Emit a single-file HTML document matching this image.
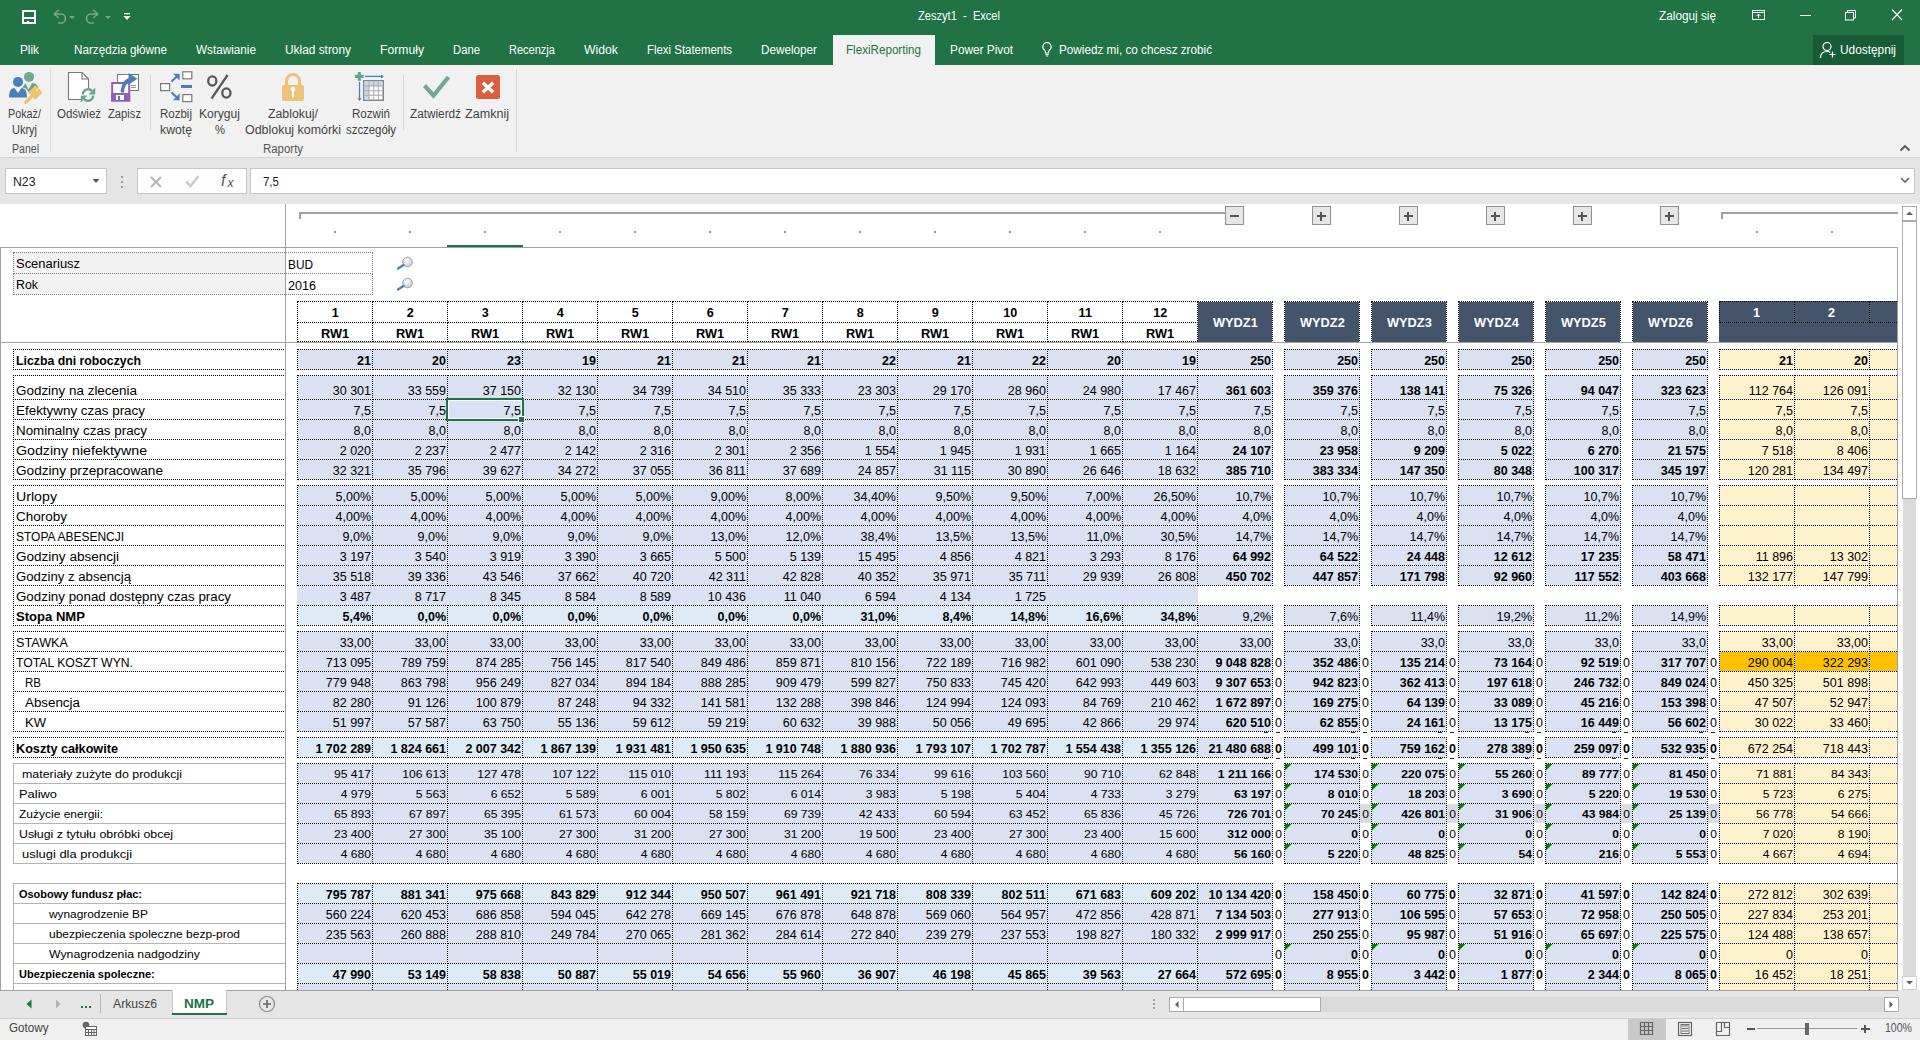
<!DOCTYPE html><html><head><meta charset="utf-8"><style>html,body{margin:0;padding:0;width:1920px;height:1040px;overflow:hidden;background:#fff;position:relative;font-family:"Liberation Sans",sans-serif}div{position:absolute}.t{white-space:pre}#sh{left:0;top:0;width:1898px;height:990px;overflow:hidden}</style></head><body>
<div style="left:0px;top:0px;width:1920px;height:65px;background:#217346"></div>
<svg style="position:absolute;left:21px;top:9px;" width="17" height="17" viewBox="0 0 17 17"><rect x="2" y="2" width="12" height="12" fill="none" stroke="#fff" stroke-width="2"/><rect x="3" y="8" width="10" height="2" fill="#fff"/><rect x="6" y="12" width="2" height="2" fill="#fff"/></svg>
<svg style="position:absolute;left:50px;top:9px;" width="28" height="16" viewBox="0 0 28 16"><path d="M4 5 L9 1 M4 5 L9 9 M4 5 H11 A4.5 4.5 0 0 1 11 14 H8" fill="none" stroke="#74a98a" stroke-width="1.6"/><path d="M19 7h6l-3 3z" fill="#74a98a"/></svg>
<svg style="position:absolute;left:85px;top:9px;" width="28" height="16" viewBox="0 0 28 16"><path d="M13 5 L8 1 M13 5 L8 9 M13 5 H6 A4.5 4.5 0 0 0 6 14 H9" fill="none" stroke="#74a98a" stroke-width="1.6"/><path d="M20 7h6l-3 3z" fill="#74a98a"/></svg>
<svg style="position:absolute;left:122px;top:12px;" width="10" height="10" viewBox="0 0 10 10"><rect x="2" y="1" width="6" height="1.3" fill="#fff"/><path d="M1.5 4h7l-3.5 4z" fill="#fff"/></svg>
<div class="t" style="left:918.00px;top:6px;font-size:12.0px;line-height:20px;font-weight:400;color:#fff;;transform:scaleX(0.9247);transform-origin:0 0">Zeszyt1  -  Excel</div>
<div class="t" style="left:1659.00px;top:6px;font-size:12.0px;line-height:20px;font-weight:400;color:#fff;;transform:scaleX(0.9824);transform-origin:0 0">Zaloguj się</div>
<svg style="position:absolute;left:1751px;top:9px;" width="16" height="12" viewBox="0 0 16 12"><rect x="1.5" y="1.5" width="12" height="9" fill="none" stroke="#fff" stroke-width="1"/><path d="M1.5 3.5h12" stroke="#fff"/><path d="M7.5 9V5M5.5 7l2-2 2 2" fill="none" stroke="#fff"/></svg>
<div style="left:1800px;top:15px;width:11px;height:1px;background:#fff"></div>
<svg style="position:absolute;left:1844px;top:9px;" width="14" height="12" viewBox="0 0 14 12"><rect x="1.5" y="3.5" width="8" height="7.5" fill="none" stroke="#fff"/><path d="M3.5 3.5V1.5h8v7.5h-2" fill="none" stroke="#fff"/></svg>
<svg style="position:absolute;left:1890px;top:9px;" width="14" height="12" viewBox="0 0 14 12"><path d="M2 0.5L12 11M12 0.5L2 11" stroke="#fff" stroke-width="1.1"/></svg>
<div style="left:833px;top:35px;width:102px;height:30px;background:#f1f1f1"></div>
<div class="t" style="left:20.00px;top:40px;font-size:12.0px;line-height:20px;font-weight:400;color:#fff;;transform:scaleX(0.9804);transform-origin:0 0">Plik</div>
<div class="t" style="left:74.00px;top:40px;font-size:12.0px;line-height:20px;font-weight:400;color:#fff;;transform:scaleX(0.9748);transform-origin:0 0">Narzędzia główne</div>
<div class="t" style="left:196.00px;top:40px;font-size:12.0px;line-height:20px;font-weight:400;color:#fff;;transform:scaleX(0.9775);transform-origin:0 0">Wstawianie</div>
<div class="t" style="left:285.00px;top:40px;font-size:12.0px;line-height:20px;font-weight:400;color:#fff;;transform:scaleX(0.9892);transform-origin:0 0">Układ strony</div>
<div class="t" style="left:380.00px;top:40px;font-size:12.0px;line-height:20px;font-weight:400;color:#fff;;transform:scaleX(1.0157);transform-origin:0 0">Formuły</div>
<div class="t" style="left:453.00px;top:40px;font-size:12.0px;line-height:20px;font-weight:400;color:#fff;;transform:scaleX(0.9414);transform-origin:0 0">Dane</div>
<div class="t" style="left:509.00px;top:40px;font-size:12.0px;line-height:20px;font-weight:400;color:#fff;;transform:scaleX(0.9182);transform-origin:0 0">Recenzja</div>
<div class="t" style="left:584.00px;top:40px;font-size:12.0px;line-height:20px;font-weight:400;color:#fff;;transform:scaleX(1.0174);transform-origin:0 0">Widok</div>
<div class="t" style="left:647.00px;top:40px;font-size:12.0px;line-height:20px;font-weight:400;color:#fff;;transform:scaleX(0.9514);transform-origin:0 0">Flexi Statements</div>
<div class="t" style="left:761.00px;top:40px;font-size:12.0px;line-height:20px;font-weight:400;color:#fff;;transform:scaleX(0.9763);transform-origin:0 0">Deweloper</div>
<div class="t" style="left:950.00px;top:40px;font-size:12.0px;line-height:20px;font-weight:400;color:#fff;;transform:scaleX(0.9841);transform-origin:0 0">Power Pivot</div>
<div class="t" style="left:1059.00px;top:40px;font-size:12.0px;line-height:20px;font-weight:400;color:#fff;;transform:scaleX(0.9763);transform-origin:0 0">Powiedz mi, co chcesz zrobić</div>
<div class="t" style="left:846.00px;top:40px;font-size:12.0px;line-height:20px;font-weight:400;color:#217346;;transform:scaleX(0.9690);transform-origin:0 0">FlexiReporting</div>
<svg style="position:absolute;left:1041px;top:41px;" width="12" height="17" viewBox="0 0 12 17"><path d="M6 1.5a4.2 4.2 0 0 0-2.4 7.6c.5.5.8 1.2.8 2V12h3.2v-.9c0-.8.3-1.5.8-2A4.2 4.2 0 0 0 6 1.5z" fill="none" stroke="#fff" stroke-width="1.1"/><path d="M4.4 13.5h3.2M4.8 15h2.4" stroke="#fff" stroke-width="1"/></svg>
<div style="left:1813px;top:35px;width:91px;height:30px;background:#185c37"></div>
<svg style="position:absolute;left:1819px;top:41px;" width="18" height="18" viewBox="0 0 18 18"><circle cx="8" cy="5.5" r="4" fill="none" stroke="#fff" stroke-width="1.2"/><path d="M1.5 17c0-4 2.5-6.5 6.5-6.5 1.5 0 2.5.3 3.4.9" fill="none" stroke="#fff" stroke-width="1.2"/><path d="M13.5 10.5v6M10.5 13.5h6" stroke="#fff" stroke-width="1.2"/></svg>
<div class="t" style="left:1840.00px;top:40px;font-size:12.0px;line-height:20px;font-weight:400;color:#fff;;transform:scaleX(0.9877);transform-origin:0 0">Udostępnij</div>
<div style="left:0px;top:65px;width:1920px;height:92px;background:#f1f1f1"></div>
<div style="left:0px;top:157px;width:1920px;height:1px;background:#d5d5d5"></div>
<div style="left:0px;top:158px;width:1920px;height:46px;background:#e6e6e6"></div>
<div style="left:50px;top:69px;width:1px;height:83px;background:#d8d8d8"></div>
<div style="left:150px;top:75px;width:1px;height:55px;background:#d8d8d8"></div>
<div style="left:403px;top:75px;width:1px;height:55px;background:#d8d8d8"></div>
<div style="left:516px;top:69px;width:1px;height:83px;background:#d8d8d8"></div>
<div class="t" style="left:8.00px;top:104px;font-size:12.0px;line-height:20px;font-weight:400;color:#444;;transform:scaleX(0.8987);transform-origin:0 0">Pokaż/</div>
<div class="t" style="left:12.00px;top:120px;font-size:12.0px;line-height:20px;font-weight:400;color:#444;;transform:scaleX(0.9158);transform-origin:0 0">Ukryj</div>
<div class="t" style="left:57.00px;top:104px;font-size:12.0px;line-height:20px;font-weight:400;color:#444;;transform:scaleX(0.9561);transform-origin:0 0">Odśwież</div>
<div class="t" style="left:108.00px;top:104px;font-size:12.0px;line-height:20px;font-weight:400;color:#444;;transform:scaleX(0.9338);transform-origin:0 0">Zapisz</div>
<div class="t" style="left:160.00px;top:104px;font-size:12.0px;line-height:20px;font-weight:400;color:#444;;transform:scaleX(0.9592);transform-origin:0 0">Rozbij</div>
<div class="t" style="left:160.00px;top:120px;font-size:12.0px;line-height:20px;font-weight:400;color:#444;;transform:scaleX(1.0217);transform-origin:0 0">kwotę</div>
<div class="t" style="left:199.00px;top:104px;font-size:12.0px;line-height:20px;font-weight:400;color:#444;;transform:scaleX(1.0079);transform-origin:0 0">Koryguj</div>
<div class="t" style="left:215.00px;top:120px;font-size:12.0px;line-height:20px;font-weight:400;color:#444;;transform:scaleX(0.9363);transform-origin:0 0">%</div>
<div class="t" style="left:268.00px;top:104px;font-size:12.0px;line-height:20px;font-weight:400;color:#444;;transform:scaleX(1.0263);transform-origin:0 0">Zablokuj/</div>
<div class="t" style="left:245.00px;top:120px;font-size:12.0px;line-height:20px;font-weight:400;color:#444;;transform:scaleX(1.0356);transform-origin:0 0">Odblokuj komórki</div>
<div class="t" style="left:352.00px;top:104px;font-size:12.0px;line-height:20px;font-weight:400;color:#444;;transform:scaleX(0.9654);transform-origin:0 0">Rozwiń</div>
<div class="t" style="left:346.00px;top:120px;font-size:12.0px;line-height:20px;font-weight:400;color:#444;;transform:scaleX(0.9491);transform-origin:0 0">szczegóły</div>
<div class="t" style="left:410.00px;top:104px;font-size:12.0px;line-height:20px;font-weight:400;color:#444;;transform:scaleX(0.9804);transform-origin:0 0">Zatwierdź</div>
<div class="t" style="left:465.00px;top:104px;font-size:12.0px;line-height:20px;font-weight:400;color:#444;;transform:scaleX(1.0476);transform-origin:0 0">Zamknij</div>
<div class="t" style="left:12.00px;top:139px;font-size:12.0px;line-height:20px;font-weight:400;color:#555;;transform:scaleX(0.8789);transform-origin:0 0">Panel</div>
<div class="t" style="left:263.00px;top:139px;font-size:12.0px;line-height:20px;font-weight:400;color:#555;;transform:scaleX(0.9524);transform-origin:0 0">Raporty</div>
<svg style="position:absolute;left:1899px;top:144px;" width="12" height="9" viewBox="0 0 12 9"><path d="M1.5 6.5l4.5-4.5 4.5 4.5" fill="none" stroke="#555" stroke-width="1.8"/></svg>
<svg style="position:absolute;left:8px;top:71px;" width="34" height="34" viewBox="0 0 34 34"><circle cx="10" cy="10.9" r="5" fill="#4a80bb"/><path d="M1.1 26.6C1.1 19.5 3 17.3 6.5 16.9L10 22 13.5 16.9C17 17.3 19 19.5 19 26.6z" fill="#4a80bb"/><circle cx="21" cy="5.9" r="5" fill="#72a893"/><path d="M14.3 16.8L17.5 12 20.5 18.5 24 12C27.5 12 29.5 14 30.5 16.5L23 20 20.5 21 18 17.5z" fill="#6aa58f"/><path d="M27.4 15.3L33.6 21.5 27.4 27.7 21.2 21.5z" fill="#eec56f" stroke="#eec56f" stroke-width="1.5" stroke-linejoin="round"/><path d="M24 25L17.8 31.2" stroke="#eec56f" stroke-width="3.4" stroke-linecap="round"/><rect x="28" y="17.5" width="2" height="2" fill="#f5e0b0"/></svg>
<svg style="position:absolute;left:66px;top:71px;" width="32" height="33" viewBox="0 0 32 33"><path d="M2.5 1.5H16L22.5 8V28.5H2.5z" fill="#fff" stroke="#777" stroke-width="1.1"/><path d="M16 1.5V8H22.5" fill="none" stroke="#777" stroke-width="1.1"/><rect x="15" y="17" width="15" height="15" fill="#f1f1f1"/><rect x="15" y="17" width="7.5" height="11.5" fill="#fff"/><path d="M16.8 23.5A5.3 5.3 0 0 1 26 20" fill="none" stroke="#6aa58f" stroke-width="2.3"/><path d="M29.2 16.5V23.5H22.5z" fill="#6aa58f"/><path d="M27.2 24.5A5.3 5.3 0 0 1 18 28" fill="none" stroke="#6aa58f" stroke-width="2.3"/><path d="M14.8 31.5V24.5H21.5z" fill="#6aa58f"/></svg>
<svg style="position:absolute;left:109px;top:71px;" width="32" height="32" viewBox="0 0 32 32"><rect x="8.5" y="3.5" width="21" height="16" fill="#fff" stroke="#777"/><path d="M22 14.5h5M22 16.5h5" stroke="#999"/><rect x="3.2" y="12" width="17" height="17.5" fill="#fff" stroke="#9060b8" stroke-width="2"/><rect x="2.2" y="22" width="19" height="8.5" fill="#9060b8"/><rect x="7" y="24" width="8" height="5" fill="#fff"/><rect x="9" y="25" width="2" height="4" fill="#9060b8"/><path d="M13.2 21.5C14 13 17 9 22 8.5" fill="none" stroke="#4a7fba" stroke-width="3.4"/><path d="M19.5 2L28.5 7.8 19.5 13.8z" fill="#4a7fba"/></svg>
<svg style="position:absolute;left:159px;top:70px;" width="34" height="34" viewBox="0 0 34 34"><rect x="1.6" y="13.6" width="9" height="7" fill="#fff" stroke="#7a7a7a" stroke-width="1.2"/><rect x="23.8" y="1.8" width="9" height="7" fill="#fff" stroke="#7a7a7a" stroke-width="1.2"/><rect x="23.8" y="24.6" width="9" height="7" fill="#fff" stroke="#7a7a7a" stroke-width="1.2"/><rect x="22" y="15" width="11" height="3" fill="#4a7fba"/><path d="M12.5 11.5l6.5-6M12.5 22.5l6.5 6" stroke="#4a7fba" stroke-width="2.2"/><path d="M14 3.8h6.6v6.6z" fill="#4a7fba"/><path d="M20.6 23.6v6.6H14z" fill="#4a7fba"/></svg>
<svg style="position:absolute;left:204px;top:72px;" width="32" height="30" viewBox="0 0 32 30"><ellipse cx="8.3" cy="8.9" rx="4.1" ry="4.6" fill="none" stroke="#595959" stroke-width="2.3"/><ellipse cx="22.4" cy="21" rx="4.1" ry="4.6" fill="none" stroke="#595959" stroke-width="2.3"/><path d="M23.6 3L7.5 26.7" stroke="#595959" stroke-width="2.3"/></svg>
<svg style="position:absolute;left:281px;top:72px;" width="24" height="30" viewBox="0 0 24 30"><path d="M5.5 13V9a6.5 6.5 0 0 1 13 0v4" fill="none" stroke="#eec278" stroke-width="3"/><rect x="1" y="13" width="22" height="16" rx="2" fill="#eec278"/><circle cx="12" cy="17.4" r="2.3" fill="#fff"/><rect x="11" y="17.5" width="2" height="8" fill="#fff"/></svg>
<svg style="position:absolute;left:354px;top:71px;" width="32" height="32" viewBox="0 0 32 32"><rect x="9.75" y="9.75" width="19.5" height="19.5" fill="#fff" stroke="#858585" stroke-width="1.5"/><rect x="10.5" y="10.5" width="18" height="4.5" fill="#c3d7ee"/><rect x="10.5" y="10.5" width="4.5" height="18" fill="#c3d7ee"/><path d="M15 10.5v18M19.75 10.5v18M24.25 10.5v18M10.5 15h18M10.5 19.75h18M10.5 24.25h18" stroke="#a8a8a8" stroke-width="1"/><path d="M5.3 1v8.8M0.9 5.4h8.8" stroke="#6aa58f" stroke-width="3.2"/><path d="M11 5.4h18" stroke="#4a7fba" stroke-width="1.3"/><path d="M27 3.4l2.8 2-2.8 2z" fill="#4a7fba"/><path d="M5.5 10.8v17.5" stroke="#4a7fba" stroke-width="1.3"/><path d="M3.5 27.3l2 2.6 2-2.6z" fill="#4a7fba"/></svg>
<svg style="position:absolute;left:421px;top:73px;" width="30" height="28" viewBox="0 0 30 28"><path d="M3.5 12.5l9 10L27.5 4" fill="none" stroke="#72a893" stroke-width="4.2" stroke-linejoin="miter"/></svg>
<svg style="position:absolute;left:476px;top:75px;" width="25" height="25" viewBox="0 0 25 25"><rect x="0" y="0" width="24" height="24" rx="2.5" fill="#d9603e"/><path d="M6.8 7.8l10.4 9.4M17.2 7.8L6.8 17.2" stroke="#fff" stroke-width="3.4"/></svg>
<div style="left:5px;top:168px;width:102px;height:26px;background:#fff;border:1px solid #c6c6c6;box-sizing:border-box"></div>
<div class="t" style="left:12.50px;top:172px;font-size:12.0px;line-height:20px;font-weight:400;color:#222;;transform:scaleX(1.0218);transform-origin:0 0">N23</div>
<svg style="position:absolute;left:91px;top:178px;" width="10" height="6" viewBox="0 0 10 6"><path d="M1.5 1h7l-3.5 4z" fill="#555"/></svg>
<div style="left:121px;top:176px;width:2px;height:2px;background:#999"></div>
<div style="left:121px;top:181px;width:2px;height:2px;background:#999"></div>
<div style="left:121px;top:186px;width:2px;height:2px;background:#999"></div>
<div style="left:137px;top:168px;width:110px;height:26px;background:#fdfdfd;border:1px solid #c6c6c6;box-sizing:border-box"></div>
<svg style="position:absolute;left:149px;top:175px;" width="14" height="14" viewBox="0 0 14 14"><path d="M2 2l10 10M12 2L2 12" stroke="#b4b4b4" stroke-width="1.8"/></svg>
<svg style="position:absolute;left:184px;top:174px;" width="16" height="14" viewBox="0 0 16 14"><path d="M2 7.5l4.5 4.5 8-10" fill="none" stroke="#cdcdcd" stroke-width="2.6"/></svg>
<div class="t" style="left:221.00px;top:171px;font-size:16px;line-height:20px;font-weight:400;color:#555;font-style:italic;font-family:"Liberation Serif",serif;transform-origin:0 0">f</div>
<div class="t" style="left:227.50px;top:173px;font-size:12px;line-height:20px;font-weight:400;color:#555;font-style:italic;font-family:"Liberation Serif",serif;transform-origin:0 0">x</div>
<div style="left:250px;top:168px;width:1665px;height:26px;background:#fff;border:1px solid #c6c6c6;box-sizing:border-box"></div>
<div class="t" style="left:263.30px;top:172px;font-size:12.0px;line-height:20px;font-weight:400;color:#222;;transform:scaleX(0.9532);transform-origin:0 0">7,5</div>
<svg style="position:absolute;left:1899px;top:176px;" width="12" height="8" viewBox="0 0 12 8"><path d="M2 2l4 4 4-4" fill="none" stroke="#666" stroke-width="1.6"/></svg>
<div id="sh">
<div style="left:0px;top:204px;width:1898px;height:786px;background:#fff"></div>
<div style="left:1898px;top:204px;width:22px;height:786px;background:#e6e6e6"></div>
<div style="left:299px;top:212px;width:926px;height:2px;background:#a0a0a0"></div>
<div style="left:299px;top:212px;width:2px;height:7px;background:#a0a0a0"></div>
<div style="left:334px;top:231px;width:2px;height:2px;background:#999"></div>
<div style="left:409px;top:231px;width:2px;height:2px;background:#999"></div>
<div style="left:484px;top:231px;width:2px;height:2px;background:#999"></div>
<div style="left:559px;top:231px;width:2px;height:2px;background:#999"></div>
<div style="left:634px;top:231px;width:2px;height:2px;background:#999"></div>
<div style="left:709px;top:231px;width:2px;height:2px;background:#999"></div>
<div style="left:784px;top:231px;width:2px;height:2px;background:#999"></div>
<div style="left:859px;top:231px;width:2px;height:2px;background:#999"></div>
<div style="left:934px;top:231px;width:2px;height:2px;background:#999"></div>
<div style="left:1009px;top:231px;width:2px;height:2px;background:#999"></div>
<div style="left:1084px;top:231px;width:2px;height:2px;background:#999"></div>
<div style="left:1159px;top:231px;width:2px;height:2px;background:#999"></div>
<div style="left:1225px;top:206px;width:19px;height:19px;background:#e6e6e6;border:1px solid #8a8f99;box-sizing:border-box"></div>
<div style="left:1230px;top:215px;width:9px;height:2px;background:#555"></div>
<div style="left:1312px;top:206px;width:19px;height:19px;background:#e6e6e6;border:1px solid #8a8f99;box-sizing:border-box"></div>
<div style="left:1317px;top:215px;width:9px;height:2px;background:#555"></div>
<div style="left:1320px;top:212px;width:2px;height:9px;background:#555"></div>
<div style="left:1399px;top:206px;width:19px;height:19px;background:#e6e6e6;border:1px solid #8a8f99;box-sizing:border-box"></div>
<div style="left:1404px;top:215px;width:9px;height:2px;background:#555"></div>
<div style="left:1407px;top:212px;width:2px;height:9px;background:#555"></div>
<div style="left:1486px;top:206px;width:19px;height:19px;background:#e6e6e6;border:1px solid #8a8f99;box-sizing:border-box"></div>
<div style="left:1491px;top:215px;width:9px;height:2px;background:#555"></div>
<div style="left:1494px;top:212px;width:2px;height:9px;background:#555"></div>
<div style="left:1573px;top:206px;width:19px;height:19px;background:#e6e6e6;border:1px solid #8a8f99;box-sizing:border-box"></div>
<div style="left:1578px;top:215px;width:9px;height:2px;background:#555"></div>
<div style="left:1581px;top:212px;width:2px;height:9px;background:#555"></div>
<div style="left:1660px;top:206px;width:19px;height:19px;background:#e6e6e6;border:1px solid #8a8f99;box-sizing:border-box"></div>
<div style="left:1665px;top:215px;width:9px;height:2px;background:#555"></div>
<div style="left:1668px;top:212px;width:2px;height:9px;background:#555"></div>
<div style="left:1721px;top:212px;width:177px;height:2px;background:#a0a0a0"></div>
<div style="left:1721px;top:212px;width:2px;height:7px;background:#a0a0a0"></div>
<div style="left:1756px;top:231px;width:2px;height:2px;background:#999"></div>
<div style="left:1831px;top:231px;width:2px;height:2px;background:#999"></div>
<div style="left:13px;top:252px;width:272px;height:42px;background:#f2f2f2"></div>
<div style="left:13px;top:252px;width:360px;height:22px;box-sizing:border-box;border-top:1px dotted #7f7f7f;border-bottom:1px dotted #7f7f7f;border-left:1px dotted #7f7f7f;border-right:1px dotted #7f7f7f;"></div>
<div style="left:13px;top:273px;width:360px;height:22px;box-sizing:border-box;border-bottom:1px dotted #7f7f7f;border-left:1px dotted #7f7f7f;border-right:1px dotted #7f7f7f;"></div>
<div class="t" style="left:16.00px;top:254px;font-size:12.0px;line-height:20px;font-weight:400;color:#000;;transform:scaleX(1.0785);transform-origin:0 0">Scenariusz</div>
<div class="t" style="left:16.00px;top:275px;font-size:12.0px;line-height:20px;font-weight:400;color:#000;;transform:scaleX(1.0271);transform-origin:0 0">Rok</div>
<div class="t" style="left:288.00px;top:255px;font-size:12.0px;line-height:20px;font-weight:400;color:#000;;transform:scaleX(0.9874);transform-origin:0 0">BUD</div>
<div class="t" style="left:288.00px;top:276px;font-size:12.0px;line-height:20px;font-weight:400;color:#000;;transform:scaleX(1.0487);transform-origin:0 0">2016</div>
<svg style="position:absolute;left:396px;top:256px;" width="18" height="14" viewBox="0 0 18 14"><defs><radialGradient id="mg256" cx="0.4" cy="0.35" r="0.7"><stop offset="0" stop-color="#fff"/><stop offset="1" stop-color="#c4c9d0"/></radialGradient></defs><circle cx="11.5" cy="6" r="4.8" fill="url(#mg256)" stroke="#9ba2ab" stroke-width="1"/><path d="M2 12.5l5.5-3.5" stroke="#3f86c6" stroke-width="2.4" stroke-linecap="round"/></svg>
<svg style="position:absolute;left:396px;top:277px;" width="18" height="14" viewBox="0 0 18 14"><defs><radialGradient id="mg277" cx="0.4" cy="0.35" r="0.7"><stop offset="0" stop-color="#fff"/><stop offset="1" stop-color="#c4c9d0"/></radialGradient></defs><circle cx="11.5" cy="6" r="4.8" fill="url(#mg277)" stroke="#9ba2ab" stroke-width="1"/><path d="M2 12.5l5.5-3.5" stroke="#3f86c6" stroke-width="2.4" stroke-linecap="round"/></svg>
<div style="left:297px;top:301px;width:76px;height:22px;box-sizing:border-box;border-top:1px dotted #000;border-bottom:1px dotted #000;border-left:1px dotted #000;border-right:1px dotted #000;"></div>
<div style="left:297px;top:322px;width:76px;height:20px;box-sizing:border-box;border-bottom:1px dotted #000;border-left:1px dotted #000;border-right:1px dotted #000;"></div>
<div class="t" style="left:300.25px;width:70px;text-align:center;top:303px;font-size:12.6px;line-height:20px;font-weight:700;color:#000;;transform-origin:50% 0">1</div>
<div class="t" style="left:321.15px;top:324px;font-size:12.6px;line-height:20px;font-weight:700;color:#000;;transform:scaleX(1.0150);transform-origin:0 0">RW1</div>
<div style="left:372px;top:301px;width:76px;height:22px;box-sizing:border-box;border-top:1px dotted #000;border-bottom:1px dotted #000;border-left:1px dotted #000;border-right:1px dotted #000;"></div>
<div style="left:372px;top:322px;width:76px;height:20px;box-sizing:border-box;border-bottom:1px dotted #000;border-left:1px dotted #000;border-right:1px dotted #000;"></div>
<div class="t" style="left:375.25px;width:70px;text-align:center;top:303px;font-size:12.6px;line-height:20px;font-weight:700;color:#000;;transform-origin:50% 0">2</div>
<div class="t" style="left:396.15px;top:324px;font-size:12.6px;line-height:20px;font-weight:700;color:#000;;transform:scaleX(1.0150);transform-origin:0 0">RW1</div>
<div style="left:447px;top:301px;width:76px;height:22px;box-sizing:border-box;border-top:1px dotted #000;border-bottom:1px dotted #000;border-left:1px dotted #000;border-right:1px dotted #000;"></div>
<div style="left:447px;top:322px;width:76px;height:20px;box-sizing:border-box;border-bottom:1px dotted #000;border-left:1px dotted #000;border-right:1px dotted #000;"></div>
<div class="t" style="left:450.25px;width:70px;text-align:center;top:303px;font-size:12.6px;line-height:20px;font-weight:700;color:#000;;transform-origin:50% 0">3</div>
<div class="t" style="left:471.15px;top:324px;font-size:12.6px;line-height:20px;font-weight:700;color:#000;;transform:scaleX(1.0150);transform-origin:0 0">RW1</div>
<div style="left:522px;top:301px;width:76px;height:22px;box-sizing:border-box;border-top:1px dotted #000;border-bottom:1px dotted #000;border-left:1px dotted #000;border-right:1px dotted #000;"></div>
<div style="left:522px;top:322px;width:76px;height:20px;box-sizing:border-box;border-bottom:1px dotted #000;border-left:1px dotted #000;border-right:1px dotted #000;"></div>
<div class="t" style="left:525.25px;width:70px;text-align:center;top:303px;font-size:12.6px;line-height:20px;font-weight:700;color:#000;;transform-origin:50% 0">4</div>
<div class="t" style="left:546.15px;top:324px;font-size:12.6px;line-height:20px;font-weight:700;color:#000;;transform:scaleX(1.0150);transform-origin:0 0">RW1</div>
<div style="left:597px;top:301px;width:76px;height:22px;box-sizing:border-box;border-top:1px dotted #000;border-bottom:1px dotted #000;border-left:1px dotted #000;border-right:1px dotted #000;"></div>
<div style="left:597px;top:322px;width:76px;height:20px;box-sizing:border-box;border-bottom:1px dotted #000;border-left:1px dotted #000;border-right:1px dotted #000;"></div>
<div class="t" style="left:600.25px;width:70px;text-align:center;top:303px;font-size:12.6px;line-height:20px;font-weight:700;color:#000;;transform-origin:50% 0">5</div>
<div class="t" style="left:621.15px;top:324px;font-size:12.6px;line-height:20px;font-weight:700;color:#000;;transform:scaleX(1.0150);transform-origin:0 0">RW1</div>
<div style="left:672px;top:301px;width:76px;height:22px;box-sizing:border-box;border-top:1px dotted #000;border-bottom:1px dotted #000;border-left:1px dotted #000;border-right:1px dotted #000;"></div>
<div style="left:672px;top:322px;width:76px;height:20px;box-sizing:border-box;border-bottom:1px dotted #000;border-left:1px dotted #000;border-right:1px dotted #000;"></div>
<div class="t" style="left:675.25px;width:70px;text-align:center;top:303px;font-size:12.6px;line-height:20px;font-weight:700;color:#000;;transform-origin:50% 0">6</div>
<div class="t" style="left:696.15px;top:324px;font-size:12.6px;line-height:20px;font-weight:700;color:#000;;transform:scaleX(1.0150);transform-origin:0 0">RW1</div>
<div style="left:747px;top:301px;width:76px;height:22px;box-sizing:border-box;border-top:1px dotted #000;border-bottom:1px dotted #000;border-left:1px dotted #000;border-right:1px dotted #000;"></div>
<div style="left:747px;top:322px;width:76px;height:20px;box-sizing:border-box;border-bottom:1px dotted #000;border-left:1px dotted #000;border-right:1px dotted #000;"></div>
<div class="t" style="left:750.25px;width:70px;text-align:center;top:303px;font-size:12.6px;line-height:20px;font-weight:700;color:#000;;transform-origin:50% 0">7</div>
<div class="t" style="left:771.15px;top:324px;font-size:12.6px;line-height:20px;font-weight:700;color:#000;;transform:scaleX(1.0150);transform-origin:0 0">RW1</div>
<div style="left:822px;top:301px;width:76px;height:22px;box-sizing:border-box;border-top:1px dotted #000;border-bottom:1px dotted #000;border-left:1px dotted #000;border-right:1px dotted #000;"></div>
<div style="left:822px;top:322px;width:76px;height:20px;box-sizing:border-box;border-bottom:1px dotted #000;border-left:1px dotted #000;border-right:1px dotted #000;"></div>
<div class="t" style="left:825.25px;width:70px;text-align:center;top:303px;font-size:12.6px;line-height:20px;font-weight:700;color:#000;;transform-origin:50% 0">8</div>
<div class="t" style="left:846.15px;top:324px;font-size:12.6px;line-height:20px;font-weight:700;color:#000;;transform:scaleX(1.0150);transform-origin:0 0">RW1</div>
<div style="left:897px;top:301px;width:76px;height:22px;box-sizing:border-box;border-top:1px dotted #000;border-bottom:1px dotted #000;border-left:1px dotted #000;border-right:1px dotted #000;"></div>
<div style="left:897px;top:322px;width:76px;height:20px;box-sizing:border-box;border-bottom:1px dotted #000;border-left:1px dotted #000;border-right:1px dotted #000;"></div>
<div class="t" style="left:900.25px;width:70px;text-align:center;top:303px;font-size:12.6px;line-height:20px;font-weight:700;color:#000;;transform-origin:50% 0">9</div>
<div class="t" style="left:921.15px;top:324px;font-size:12.6px;line-height:20px;font-weight:700;color:#000;;transform:scaleX(1.0150);transform-origin:0 0">RW1</div>
<div style="left:972px;top:301px;width:76px;height:22px;box-sizing:border-box;border-top:1px dotted #000;border-bottom:1px dotted #000;border-left:1px dotted #000;border-right:1px dotted #000;"></div>
<div style="left:972px;top:322px;width:76px;height:20px;box-sizing:border-box;border-bottom:1px dotted #000;border-left:1px dotted #000;border-right:1px dotted #000;"></div>
<div class="t" style="left:975.25px;width:70px;text-align:center;top:303px;font-size:12.6px;line-height:20px;font-weight:700;color:#000;;transform-origin:50% 0">10</div>
<div class="t" style="left:996.15px;top:324px;font-size:12.6px;line-height:20px;font-weight:700;color:#000;;transform:scaleX(1.0150);transform-origin:0 0">RW1</div>
<div style="left:1047px;top:301px;width:76px;height:22px;box-sizing:border-box;border-top:1px dotted #000;border-bottom:1px dotted #000;border-left:1px dotted #000;border-right:1px dotted #000;"></div>
<div style="left:1047px;top:322px;width:76px;height:20px;box-sizing:border-box;border-bottom:1px dotted #000;border-left:1px dotted #000;border-right:1px dotted #000;"></div>
<div class="t" style="left:1050.25px;width:70px;text-align:center;top:303px;font-size:12.6px;line-height:20px;font-weight:700;color:#000;;transform-origin:50% 0">11</div>
<div class="t" style="left:1071.15px;top:324px;font-size:12.6px;line-height:20px;font-weight:700;color:#000;;transform:scaleX(1.0150);transform-origin:0 0">RW1</div>
<div style="left:1122px;top:301px;width:76px;height:22px;box-sizing:border-box;border-top:1px dotted #000;border-bottom:1px dotted #000;border-left:1px dotted #000;"></div>
<div style="left:1122px;top:322px;width:76px;height:20px;box-sizing:border-box;border-bottom:1px dotted #000;border-left:1px dotted #000;"></div>
<div class="t" style="left:1125.25px;width:70px;text-align:center;top:303px;font-size:12.6px;line-height:20px;font-weight:700;color:#000;;transform-origin:50% 0">12</div>
<div class="t" style="left:1146.15px;top:324px;font-size:12.6px;line-height:20px;font-weight:700;color:#000;;transform:scaleX(1.0150);transform-origin:0 0">RW1</div>
<div style="left:1197px;top:301px;width:76px;height:42px;box-sizing:border-box;background:#44546A;background-clip:padding-box;border-top:1px dotted #000;border-bottom:1px dotted #000;border-left:1px dotted #000;border-right:1px dotted #000;"></div>
<div class="t" style="left:1213.00px;top:313px;font-size:12.5px;line-height:20px;font-weight:700;color:#fff;;transform:scaleX(1.0240);transform-origin:0 0">WYDZ1</div>
<div style="left:1284px;top:301px;width:76px;height:42px;box-sizing:border-box;background:#44546A;background-clip:padding-box;border-top:1px dotted #000;border-bottom:1px dotted #000;border-left:1px dotted #000;border-right:1px dotted #000;"></div>
<div class="t" style="left:1300.00px;top:313px;font-size:12.5px;line-height:20px;font-weight:700;color:#fff;;transform:scaleX(1.0240);transform-origin:0 0">WYDZ2</div>
<div style="left:1371px;top:301px;width:76px;height:42px;box-sizing:border-box;background:#44546A;background-clip:padding-box;border-top:1px dotted #000;border-bottom:1px dotted #000;border-left:1px dotted #000;border-right:1px dotted #000;"></div>
<div class="t" style="left:1387.00px;top:313px;font-size:12.5px;line-height:20px;font-weight:700;color:#fff;;transform:scaleX(1.0240);transform-origin:0 0">WYDZ3</div>
<div style="left:1458px;top:301px;width:76px;height:42px;box-sizing:border-box;background:#44546A;background-clip:padding-box;border-top:1px dotted #000;border-bottom:1px dotted #000;border-left:1px dotted #000;border-right:1px dotted #000;"></div>
<div class="t" style="left:1474.00px;top:313px;font-size:12.5px;line-height:20px;font-weight:700;color:#fff;;transform:scaleX(1.0240);transform-origin:0 0">WYDZ4</div>
<div style="left:1545px;top:301px;width:76px;height:42px;box-sizing:border-box;background:#44546A;background-clip:padding-box;border-top:1px dotted #000;border-bottom:1px dotted #000;border-left:1px dotted #000;border-right:1px dotted #000;"></div>
<div class="t" style="left:1561.00px;top:313px;font-size:12.5px;line-height:20px;font-weight:700;color:#fff;;transform:scaleX(1.0240);transform-origin:0 0">WYDZ5</div>
<div style="left:1632px;top:301px;width:76px;height:42px;box-sizing:border-box;background:#44546A;background-clip:padding-box;border-top:1px dotted #000;border-bottom:1px dotted #000;border-left:1px dotted #000;border-right:1px dotted #000;"></div>
<div class="t" style="left:1648.00px;top:313px;font-size:12.5px;line-height:20px;font-weight:700;color:#fff;;transform:scaleX(1.0240);transform-origin:0 0">WYDZ6</div>
<div style="left:1719px;top:301px;width:179px;height:41px;background:#44546A"></div>
<div style="left:1719px;top:301px;width:76px;height:22px;box-sizing:border-box;border-top:1px dotted #000;border-bottom:1px dotted #000;border-left:1px dotted #000;border-right:1px dotted #000;"></div>
<div style="left:1794px;top:301px;width:76px;height:22px;box-sizing:border-box;border-top:1px dotted #000;border-bottom:1px dotted #000;border-left:1px dotted #000;border-right:1px dotted #000;"></div>
<div style="left:1869px;top:301px;width:76px;height:22px;box-sizing:border-box;border-top:1px dotted #000;border-bottom:1px dotted #000;border-left:1px dotted #000;border-right:1px dotted #000;"></div>
<div class="t" style="left:1721.50px;width:70px;text-align:center;top:303px;font-size:12.6px;line-height:20px;font-weight:700;color:#fff;;transform-origin:50% 0">1</div>
<div class="t" style="left:1796.50px;width:70px;text-align:center;top:303px;font-size:12.6px;line-height:20px;font-weight:700;color:#fff;;transform-origin:50% 0">2</div>
<div style="left:13px;top:349px;width:273px;height:21px;box-sizing:border-box;border-top:1px dotted #000;border-bottom:1px dotted #000;border-left:1px dotted #000;border-right:1px dotted #000;"></div>
<div class="t" style="left:16.00px;top:351px;font-size:12.5px;line-height:20px;font-weight:700;color:#000;;transform:scaleX(0.9833);transform-origin:0 0">Liczba dni roboczych</div>
<div style="left:297px;top:349px;width:76px;height:21px;box-sizing:border-box;background:#D9E1F2;background-clip:padding-box;border-top:1px dotted #000;border-bottom:1px dotted #000;border-left:1px dotted #000;border-right:1px dotted #000;"></div>
<div class="t" style="left:251.00px;width:120px;text-align:right;top:351px;font-size:12.5px;line-height:20px;font-weight:700;color:#000;;transform-origin:100% 0">21</div>
<div style="left:372px;top:349px;width:76px;height:21px;box-sizing:border-box;background:#D9E1F2;background-clip:padding-box;border-top:1px dotted #000;border-bottom:1px dotted #000;border-left:1px dotted #000;border-right:1px dotted #000;"></div>
<div class="t" style="left:326.00px;width:120px;text-align:right;top:351px;font-size:12.5px;line-height:20px;font-weight:700;color:#000;;transform-origin:100% 0">20</div>
<div style="left:447px;top:349px;width:76px;height:21px;box-sizing:border-box;background:#D9E1F2;background-clip:padding-box;border-top:1px dotted #000;border-bottom:1px dotted #000;border-left:1px dotted #000;border-right:1px dotted #000;"></div>
<div class="t" style="left:401.00px;width:120px;text-align:right;top:351px;font-size:12.5px;line-height:20px;font-weight:700;color:#000;;transform-origin:100% 0">23</div>
<div style="left:522px;top:349px;width:76px;height:21px;box-sizing:border-box;background:#D9E1F2;background-clip:padding-box;border-top:1px dotted #000;border-bottom:1px dotted #000;border-left:1px dotted #000;border-right:1px dotted #000;"></div>
<div class="t" style="left:476.00px;width:120px;text-align:right;top:351px;font-size:12.5px;line-height:20px;font-weight:700;color:#000;;transform-origin:100% 0">19</div>
<div style="left:597px;top:349px;width:76px;height:21px;box-sizing:border-box;background:#D9E1F2;background-clip:padding-box;border-top:1px dotted #000;border-bottom:1px dotted #000;border-left:1px dotted #000;border-right:1px dotted #000;"></div>
<div class="t" style="left:551.00px;width:120px;text-align:right;top:351px;font-size:12.5px;line-height:20px;font-weight:700;color:#000;;transform-origin:100% 0">21</div>
<div style="left:672px;top:349px;width:76px;height:21px;box-sizing:border-box;background:#D9E1F2;background-clip:padding-box;border-top:1px dotted #000;border-bottom:1px dotted #000;border-left:1px dotted #000;border-right:1px dotted #000;"></div>
<div class="t" style="left:626.00px;width:120px;text-align:right;top:351px;font-size:12.5px;line-height:20px;font-weight:700;color:#000;;transform-origin:100% 0">21</div>
<div style="left:747px;top:349px;width:76px;height:21px;box-sizing:border-box;background:#D9E1F2;background-clip:padding-box;border-top:1px dotted #000;border-bottom:1px dotted #000;border-left:1px dotted #000;border-right:1px dotted #000;"></div>
<div class="t" style="left:701.00px;width:120px;text-align:right;top:351px;font-size:12.5px;line-height:20px;font-weight:700;color:#000;;transform-origin:100% 0">21</div>
<div style="left:822px;top:349px;width:76px;height:21px;box-sizing:border-box;background:#D9E1F2;background-clip:padding-box;border-top:1px dotted #000;border-bottom:1px dotted #000;border-left:1px dotted #000;border-right:1px dotted #000;"></div>
<div class="t" style="left:776.00px;width:120px;text-align:right;top:351px;font-size:12.5px;line-height:20px;font-weight:700;color:#000;;transform-origin:100% 0">22</div>
<div style="left:897px;top:349px;width:76px;height:21px;box-sizing:border-box;background:#D9E1F2;background-clip:padding-box;border-top:1px dotted #000;border-bottom:1px dotted #000;border-left:1px dotted #000;border-right:1px dotted #000;"></div>
<div class="t" style="left:851.00px;width:120px;text-align:right;top:351px;font-size:12.5px;line-height:20px;font-weight:700;color:#000;;transform-origin:100% 0">21</div>
<div style="left:972px;top:349px;width:76px;height:21px;box-sizing:border-box;background:#D9E1F2;background-clip:padding-box;border-top:1px dotted #000;border-bottom:1px dotted #000;border-left:1px dotted #000;border-right:1px dotted #000;"></div>
<div class="t" style="left:926.00px;width:120px;text-align:right;top:351px;font-size:12.5px;line-height:20px;font-weight:700;color:#000;;transform-origin:100% 0">22</div>
<div style="left:1047px;top:349px;width:76px;height:21px;box-sizing:border-box;background:#D9E1F2;background-clip:padding-box;border-top:1px dotted #000;border-bottom:1px dotted #000;border-left:1px dotted #000;border-right:1px dotted #000;"></div>
<div class="t" style="left:1001.00px;width:120px;text-align:right;top:351px;font-size:12.5px;line-height:20px;font-weight:700;color:#000;;transform-origin:100% 0">20</div>
<div style="left:1122px;top:349px;width:76px;height:21px;box-sizing:border-box;background:#D9E1F2;background-clip:padding-box;border-top:1px dotted #000;border-bottom:1px dotted #000;border-left:1px dotted #000;border-right:1px dotted #000;"></div>
<div class="t" style="left:1076.00px;width:120px;text-align:right;top:351px;font-size:12.5px;line-height:20px;font-weight:700;color:#000;;transform-origin:100% 0">19</div>
<div style="left:1197px;top:349px;width:76px;height:21px;box-sizing:border-box;background:#D9E1F2;background-clip:padding-box;border-top:1px dotted #000;border-bottom:1px dotted #000;border-left:1px dotted #000;border-right:1px dotted #000;"></div>
<div class="t" style="left:1151.00px;width:120px;text-align:right;top:351px;font-size:12.5px;line-height:20px;font-weight:700;color:#000;;transform-origin:100% 0">250</div>
<div style="left:1284px;top:349px;width:76px;height:21px;box-sizing:border-box;background:#D9E1F2;background-clip:padding-box;border-top:1px dotted #000;border-bottom:1px dotted #000;border-left:1px dotted #000;border-right:1px dotted #000;"></div>
<div class="t" style="left:1238.00px;width:120px;text-align:right;top:351px;font-size:12.5px;line-height:20px;font-weight:700;color:#000;;transform-origin:100% 0">250</div>
<div style="left:1371px;top:349px;width:76px;height:21px;box-sizing:border-box;background:#D9E1F2;background-clip:padding-box;border-top:1px dotted #000;border-bottom:1px dotted #000;border-left:1px dotted #000;border-right:1px dotted #000;"></div>
<div class="t" style="left:1325.00px;width:120px;text-align:right;top:351px;font-size:12.5px;line-height:20px;font-weight:700;color:#000;;transform-origin:100% 0">250</div>
<div style="left:1458px;top:349px;width:76px;height:21px;box-sizing:border-box;background:#D9E1F2;background-clip:padding-box;border-top:1px dotted #000;border-bottom:1px dotted #000;border-left:1px dotted #000;border-right:1px dotted #000;"></div>
<div class="t" style="left:1412.00px;width:120px;text-align:right;top:351px;font-size:12.5px;line-height:20px;font-weight:700;color:#000;;transform-origin:100% 0">250</div>
<div style="left:1545px;top:349px;width:76px;height:21px;box-sizing:border-box;background:#D9E1F2;background-clip:padding-box;border-top:1px dotted #000;border-bottom:1px dotted #000;border-left:1px dotted #000;border-right:1px dotted #000;"></div>
<div class="t" style="left:1499.00px;width:120px;text-align:right;top:351px;font-size:12.5px;line-height:20px;font-weight:700;color:#000;;transform-origin:100% 0">250</div>
<div style="left:1632px;top:349px;width:76px;height:21px;box-sizing:border-box;background:#D9E1F2;background-clip:padding-box;border-top:1px dotted #000;border-bottom:1px dotted #000;border-left:1px dotted #000;border-right:1px dotted #000;"></div>
<div class="t" style="left:1586.00px;width:120px;text-align:right;top:351px;font-size:12.5px;line-height:20px;font-weight:700;color:#000;;transform-origin:100% 0">250</div>
<div style="left:1719px;top:349px;width:76px;height:21px;box-sizing:border-box;background:#FFF2CC;background-clip:padding-box;border-top:1px dotted #000;border-bottom:1px dotted #000;border-left:1px dotted #000;border-right:1px dotted #000;"></div>
<div class="t" style="left:1673.00px;width:120px;text-align:right;top:351px;font-size:12.5px;line-height:20px;font-weight:700;color:#000;;transform-origin:100% 0">21</div>
<div style="left:1794px;top:349px;width:76px;height:21px;box-sizing:border-box;background:#FFF2CC;background-clip:padding-box;border-top:1px dotted #000;border-bottom:1px dotted #000;border-left:1px dotted #000;border-right:1px dotted #000;"></div>
<div class="t" style="left:1748.00px;width:120px;text-align:right;top:351px;font-size:12.5px;line-height:20px;font-weight:700;color:#000;;transform-origin:100% 0">20</div>
<div style="left:1869px;top:349px;width:76px;height:21px;box-sizing:border-box;background:#FFF2CC;background-clip:padding-box;border-top:1px dotted #000;border-bottom:1px dotted #000;border-left:1px dotted #000;border-right:1px dotted #000;"></div>
<div style="left:13px;top:375px;width:273px;height:25px;box-sizing:border-box;border-top:1px dotted #000;border-bottom:1px dotted #000;border-left:1px dotted #000;border-right:1px dotted #000;"></div>
<div class="t" style="left:16.00px;top:381px;font-size:12.5px;line-height:20px;font-weight:400;color:#000;;transform:scaleX(1.0744);transform-origin:0 0">Godziny na zlecenia</div>
<div style="left:297px;top:375px;width:76px;height:25px;box-sizing:border-box;background:#D9E1F2;background-clip:padding-box;border-top:1px dotted #000;border-bottom:1px dotted #000;border-left:1px dotted #000;border-right:1px dotted #000;"></div>
<div class="t" style="left:251.00px;width:120px;text-align:right;top:381px;font-size:12.5px;line-height:20px;font-weight:400;color:#000;;transform-origin:100% 0">30 301</div>
<div style="left:372px;top:375px;width:76px;height:25px;box-sizing:border-box;background:#D9E1F2;background-clip:padding-box;border-top:1px dotted #000;border-bottom:1px dotted #000;border-left:1px dotted #000;border-right:1px dotted #000;"></div>
<div class="t" style="left:326.00px;width:120px;text-align:right;top:381px;font-size:12.5px;line-height:20px;font-weight:400;color:#000;;transform-origin:100% 0">33 559</div>
<div style="left:447px;top:375px;width:76px;height:25px;box-sizing:border-box;background:#D9E1F2;background-clip:padding-box;border-top:1px dotted #000;border-bottom:1px dotted #000;border-left:1px dotted #000;border-right:1px dotted #000;"></div>
<div class="t" style="left:401.00px;width:120px;text-align:right;top:381px;font-size:12.5px;line-height:20px;font-weight:400;color:#000;;transform-origin:100% 0">37 150</div>
<div style="left:522px;top:375px;width:76px;height:25px;box-sizing:border-box;background:#D9E1F2;background-clip:padding-box;border-top:1px dotted #000;border-bottom:1px dotted #000;border-left:1px dotted #000;border-right:1px dotted #000;"></div>
<div class="t" style="left:476.00px;width:120px;text-align:right;top:381px;font-size:12.5px;line-height:20px;font-weight:400;color:#000;;transform-origin:100% 0">32 130</div>
<div style="left:597px;top:375px;width:76px;height:25px;box-sizing:border-box;background:#D9E1F2;background-clip:padding-box;border-top:1px dotted #000;border-bottom:1px dotted #000;border-left:1px dotted #000;border-right:1px dotted #000;"></div>
<div class="t" style="left:551.00px;width:120px;text-align:right;top:381px;font-size:12.5px;line-height:20px;font-weight:400;color:#000;;transform-origin:100% 0">34 739</div>
<div style="left:672px;top:375px;width:76px;height:25px;box-sizing:border-box;background:#D9E1F2;background-clip:padding-box;border-top:1px dotted #000;border-bottom:1px dotted #000;border-left:1px dotted #000;border-right:1px dotted #000;"></div>
<div class="t" style="left:626.00px;width:120px;text-align:right;top:381px;font-size:12.5px;line-height:20px;font-weight:400;color:#000;;transform-origin:100% 0">34 510</div>
<div style="left:747px;top:375px;width:76px;height:25px;box-sizing:border-box;background:#D9E1F2;background-clip:padding-box;border-top:1px dotted #000;border-bottom:1px dotted #000;border-left:1px dotted #000;border-right:1px dotted #000;"></div>
<div class="t" style="left:701.00px;width:120px;text-align:right;top:381px;font-size:12.5px;line-height:20px;font-weight:400;color:#000;;transform-origin:100% 0">35 333</div>
<div style="left:822px;top:375px;width:76px;height:25px;box-sizing:border-box;background:#D9E1F2;background-clip:padding-box;border-top:1px dotted #000;border-bottom:1px dotted #000;border-left:1px dotted #000;border-right:1px dotted #000;"></div>
<div class="t" style="left:776.00px;width:120px;text-align:right;top:381px;font-size:12.5px;line-height:20px;font-weight:400;color:#000;;transform-origin:100% 0">23 303</div>
<div style="left:897px;top:375px;width:76px;height:25px;box-sizing:border-box;background:#D9E1F2;background-clip:padding-box;border-top:1px dotted #000;border-bottom:1px dotted #000;border-left:1px dotted #000;border-right:1px dotted #000;"></div>
<div class="t" style="left:851.00px;width:120px;text-align:right;top:381px;font-size:12.5px;line-height:20px;font-weight:400;color:#000;;transform-origin:100% 0">29 170</div>
<div style="left:972px;top:375px;width:76px;height:25px;box-sizing:border-box;background:#D9E1F2;background-clip:padding-box;border-top:1px dotted #000;border-bottom:1px dotted #000;border-left:1px dotted #000;border-right:1px dotted #000;"></div>
<div class="t" style="left:926.00px;width:120px;text-align:right;top:381px;font-size:12.5px;line-height:20px;font-weight:400;color:#000;;transform-origin:100% 0">28 960</div>
<div style="left:1047px;top:375px;width:76px;height:25px;box-sizing:border-box;background:#D9E1F2;background-clip:padding-box;border-top:1px dotted #000;border-bottom:1px dotted #000;border-left:1px dotted #000;border-right:1px dotted #000;"></div>
<div class="t" style="left:1001.00px;width:120px;text-align:right;top:381px;font-size:12.5px;line-height:20px;font-weight:400;color:#000;;transform-origin:100% 0">24 980</div>
<div style="left:1122px;top:375px;width:76px;height:25px;box-sizing:border-box;background:#D9E1F2;background-clip:padding-box;border-top:1px dotted #000;border-bottom:1px dotted #000;border-left:1px dotted #000;border-right:1px dotted #000;"></div>
<div class="t" style="left:1076.00px;width:120px;text-align:right;top:381px;font-size:12.5px;line-height:20px;font-weight:400;color:#000;;transform-origin:100% 0">17 467</div>
<div style="left:1197px;top:375px;width:76px;height:25px;box-sizing:border-box;background:#D9E1F2;background-clip:padding-box;border-top:1px dotted #000;border-bottom:1px dotted #000;border-left:1px dotted #000;border-right:1px dotted #000;"></div>
<div class="t" style="left:1151.00px;width:120px;text-align:right;top:381px;font-size:12.5px;line-height:20px;font-weight:700;color:#000;;transform-origin:100% 0">361 603</div>
<div style="left:1284px;top:375px;width:76px;height:25px;box-sizing:border-box;background:#D9E1F2;background-clip:padding-box;border-top:1px dotted #000;border-bottom:1px dotted #000;border-left:1px dotted #000;border-right:1px dotted #000;"></div>
<div class="t" style="left:1238.00px;width:120px;text-align:right;top:381px;font-size:12.5px;line-height:20px;font-weight:700;color:#000;;transform-origin:100% 0">359 376</div>
<div style="left:1371px;top:375px;width:76px;height:25px;box-sizing:border-box;background:#D9E1F2;background-clip:padding-box;border-top:1px dotted #000;border-bottom:1px dotted #000;border-left:1px dotted #000;border-right:1px dotted #000;"></div>
<div class="t" style="left:1325.00px;width:120px;text-align:right;top:381px;font-size:12.5px;line-height:20px;font-weight:700;color:#000;;transform-origin:100% 0">138 141</div>
<div style="left:1458px;top:375px;width:76px;height:25px;box-sizing:border-box;background:#D9E1F2;background-clip:padding-box;border-top:1px dotted #000;border-bottom:1px dotted #000;border-left:1px dotted #000;border-right:1px dotted #000;"></div>
<div class="t" style="left:1412.00px;width:120px;text-align:right;top:381px;font-size:12.5px;line-height:20px;font-weight:700;color:#000;;transform-origin:100% 0">75 326</div>
<div style="left:1545px;top:375px;width:76px;height:25px;box-sizing:border-box;background:#D9E1F2;background-clip:padding-box;border-top:1px dotted #000;border-bottom:1px dotted #000;border-left:1px dotted #000;border-right:1px dotted #000;"></div>
<div class="t" style="left:1499.00px;width:120px;text-align:right;top:381px;font-size:12.5px;line-height:20px;font-weight:700;color:#000;;transform-origin:100% 0">94 047</div>
<div style="left:1632px;top:375px;width:76px;height:25px;box-sizing:border-box;background:#D9E1F2;background-clip:padding-box;border-top:1px dotted #000;border-bottom:1px dotted #000;border-left:1px dotted #000;border-right:1px dotted #000;"></div>
<div class="t" style="left:1586.00px;width:120px;text-align:right;top:381px;font-size:12.5px;line-height:20px;font-weight:700;color:#000;;transform-origin:100% 0">323 623</div>
<div style="left:1719px;top:375px;width:76px;height:25px;box-sizing:border-box;background:#FFF2CC;background-clip:padding-box;border-top:1px dotted #000;border-bottom:1px dotted #000;border-left:1px dotted #000;border-right:1px dotted #000;"></div>
<div class="t" style="left:1673.00px;width:120px;text-align:right;top:381px;font-size:12.5px;line-height:20px;font-weight:400;color:#000;;transform-origin:100% 0">112 764</div>
<div style="left:1794px;top:375px;width:76px;height:25px;box-sizing:border-box;background:#FFF2CC;background-clip:padding-box;border-top:1px dotted #000;border-bottom:1px dotted #000;border-left:1px dotted #000;border-right:1px dotted #000;"></div>
<div class="t" style="left:1748.00px;width:120px;text-align:right;top:381px;font-size:12.5px;line-height:20px;font-weight:400;color:#000;;transform-origin:100% 0">126 091</div>
<div style="left:1869px;top:375px;width:76px;height:25px;box-sizing:border-box;background:#FFF2CC;background-clip:padding-box;border-top:1px dotted #000;border-bottom:1px dotted #000;border-left:1px dotted #000;border-right:1px dotted #000;"></div>
<div style="left:13px;top:399px;width:273px;height:21px;box-sizing:border-box;border-top:1px dotted #000;border-bottom:1px dotted #000;border-left:1px dotted #000;border-right:1px dotted #000;"></div>
<div class="t" style="left:16.00px;top:401px;font-size:12.5px;line-height:20px;font-weight:400;color:#000;;transform:scaleX(1.0733);transform-origin:0 0">Efektywny czas pracy</div>
<div style="left:297px;top:399px;width:76px;height:21px;box-sizing:border-box;background:#D9E1F2;background-clip:padding-box;border-top:1px dotted #000;border-bottom:1px dotted #000;border-left:1px dotted #000;border-right:1px dotted #000;"></div>
<div class="t" style="left:251.00px;width:120px;text-align:right;top:401px;font-size:12.5px;line-height:20px;font-weight:400;color:#000;;transform-origin:100% 0">7,5</div>
<div style="left:372px;top:399px;width:76px;height:21px;box-sizing:border-box;background:#D9E1F2;background-clip:padding-box;border-top:1px dotted #000;border-bottom:1px dotted #000;border-left:1px dotted #000;border-right:1px dotted #000;"></div>
<div class="t" style="left:326.00px;width:120px;text-align:right;top:401px;font-size:12.5px;line-height:20px;font-weight:400;color:#000;;transform-origin:100% 0">7,5</div>
<div style="left:447px;top:399px;width:76px;height:21px;box-sizing:border-box;background:#D9E1F2;background-clip:padding-box;border-top:1px dotted #000;border-bottom:1px dotted #000;border-left:1px dotted #000;border-right:1px dotted #000;"></div>
<div class="t" style="left:401.00px;width:120px;text-align:right;top:401px;font-size:12.5px;line-height:20px;font-weight:400;color:#000;;transform-origin:100% 0">7,5</div>
<div style="left:522px;top:399px;width:76px;height:21px;box-sizing:border-box;background:#D9E1F2;background-clip:padding-box;border-top:1px dotted #000;border-bottom:1px dotted #000;border-left:1px dotted #000;border-right:1px dotted #000;"></div>
<div class="t" style="left:476.00px;width:120px;text-align:right;top:401px;font-size:12.5px;line-height:20px;font-weight:400;color:#000;;transform-origin:100% 0">7,5</div>
<div style="left:597px;top:399px;width:76px;height:21px;box-sizing:border-box;background:#D9E1F2;background-clip:padding-box;border-top:1px dotted #000;border-bottom:1px dotted #000;border-left:1px dotted #000;border-right:1px dotted #000;"></div>
<div class="t" style="left:551.00px;width:120px;text-align:right;top:401px;font-size:12.5px;line-height:20px;font-weight:400;color:#000;;transform-origin:100% 0">7,5</div>
<div style="left:672px;top:399px;width:76px;height:21px;box-sizing:border-box;background:#D9E1F2;background-clip:padding-box;border-top:1px dotted #000;border-bottom:1px dotted #000;border-left:1px dotted #000;border-right:1px dotted #000;"></div>
<div class="t" style="left:626.00px;width:120px;text-align:right;top:401px;font-size:12.5px;line-height:20px;font-weight:400;color:#000;;transform-origin:100% 0">7,5</div>
<div style="left:747px;top:399px;width:76px;height:21px;box-sizing:border-box;background:#D9E1F2;background-clip:padding-box;border-top:1px dotted #000;border-bottom:1px dotted #000;border-left:1px dotted #000;border-right:1px dotted #000;"></div>
<div class="t" style="left:701.00px;width:120px;text-align:right;top:401px;font-size:12.5px;line-height:20px;font-weight:400;color:#000;;transform-origin:100% 0">7,5</div>
<div style="left:822px;top:399px;width:76px;height:21px;box-sizing:border-box;background:#D9E1F2;background-clip:padding-box;border-top:1px dotted #000;border-bottom:1px dotted #000;border-left:1px dotted #000;border-right:1px dotted #000;"></div>
<div class="t" style="left:776.00px;width:120px;text-align:right;top:401px;font-size:12.5px;line-height:20px;font-weight:400;color:#000;;transform-origin:100% 0">7,5</div>
<div style="left:897px;top:399px;width:76px;height:21px;box-sizing:border-box;background:#D9E1F2;background-clip:padding-box;border-top:1px dotted #000;border-bottom:1px dotted #000;border-left:1px dotted #000;border-right:1px dotted #000;"></div>
<div class="t" style="left:851.00px;width:120px;text-align:right;top:401px;font-size:12.5px;line-height:20px;font-weight:400;color:#000;;transform-origin:100% 0">7,5</div>
<div style="left:972px;top:399px;width:76px;height:21px;box-sizing:border-box;background:#D9E1F2;background-clip:padding-box;border-top:1px dotted #000;border-bottom:1px dotted #000;border-left:1px dotted #000;border-right:1px dotted #000;"></div>
<div class="t" style="left:926.00px;width:120px;text-align:right;top:401px;font-size:12.5px;line-height:20px;font-weight:400;color:#000;;transform-origin:100% 0">7,5</div>
<div style="left:1047px;top:399px;width:76px;height:21px;box-sizing:border-box;background:#D9E1F2;background-clip:padding-box;border-top:1px dotted #000;border-bottom:1px dotted #000;border-left:1px dotted #000;border-right:1px dotted #000;"></div>
<div class="t" style="left:1001.00px;width:120px;text-align:right;top:401px;font-size:12.5px;line-height:20px;font-weight:400;color:#000;;transform-origin:100% 0">7,5</div>
<div style="left:1122px;top:399px;width:76px;height:21px;box-sizing:border-box;background:#D9E1F2;background-clip:padding-box;border-top:1px dotted #000;border-bottom:1px dotted #000;border-left:1px dotted #000;border-right:1px dotted #000;"></div>
<div class="t" style="left:1076.00px;width:120px;text-align:right;top:401px;font-size:12.5px;line-height:20px;font-weight:400;color:#000;;transform-origin:100% 0">7,5</div>
<div style="left:1197px;top:399px;width:76px;height:21px;box-sizing:border-box;background:#D9E1F2;background-clip:padding-box;border-top:1px dotted #000;border-bottom:1px dotted #000;border-left:1px dotted #000;border-right:1px dotted #000;"></div>
<div class="t" style="left:1151.00px;width:120px;text-align:right;top:401px;font-size:12.5px;line-height:20px;font-weight:400;color:#000;;transform-origin:100% 0">7,5</div>
<div style="left:1284px;top:399px;width:76px;height:21px;box-sizing:border-box;background:#D9E1F2;background-clip:padding-box;border-top:1px dotted #000;border-bottom:1px dotted #000;border-left:1px dotted #000;border-right:1px dotted #000;"></div>
<div class="t" style="left:1238.00px;width:120px;text-align:right;top:401px;font-size:12.5px;line-height:20px;font-weight:400;color:#000;;transform-origin:100% 0">7,5</div>
<div style="left:1371px;top:399px;width:76px;height:21px;box-sizing:border-box;background:#D9E1F2;background-clip:padding-box;border-top:1px dotted #000;border-bottom:1px dotted #000;border-left:1px dotted #000;border-right:1px dotted #000;"></div>
<div class="t" style="left:1325.00px;width:120px;text-align:right;top:401px;font-size:12.5px;line-height:20px;font-weight:400;color:#000;;transform-origin:100% 0">7,5</div>
<div style="left:1458px;top:399px;width:76px;height:21px;box-sizing:border-box;background:#D9E1F2;background-clip:padding-box;border-top:1px dotted #000;border-bottom:1px dotted #000;border-left:1px dotted #000;border-right:1px dotted #000;"></div>
<div class="t" style="left:1412.00px;width:120px;text-align:right;top:401px;font-size:12.5px;line-height:20px;font-weight:400;color:#000;;transform-origin:100% 0">7,5</div>
<div style="left:1545px;top:399px;width:76px;height:21px;box-sizing:border-box;background:#D9E1F2;background-clip:padding-box;border-top:1px dotted #000;border-bottom:1px dotted #000;border-left:1px dotted #000;border-right:1px dotted #000;"></div>
<div class="t" style="left:1499.00px;width:120px;text-align:right;top:401px;font-size:12.5px;line-height:20px;font-weight:400;color:#000;;transform-origin:100% 0">7,5</div>
<div style="left:1632px;top:399px;width:76px;height:21px;box-sizing:border-box;background:#D9E1F2;background-clip:padding-box;border-top:1px dotted #000;border-bottom:1px dotted #000;border-left:1px dotted #000;border-right:1px dotted #000;"></div>
<div class="t" style="left:1586.00px;width:120px;text-align:right;top:401px;font-size:12.5px;line-height:20px;font-weight:400;color:#000;;transform-origin:100% 0">7,5</div>
<div style="left:1719px;top:399px;width:76px;height:21px;box-sizing:border-box;background:#FFF2CC;background-clip:padding-box;border-top:1px dotted #000;border-bottom:1px dotted #000;border-left:1px dotted #000;border-right:1px dotted #000;"></div>
<div class="t" style="left:1673.00px;width:120px;text-align:right;top:401px;font-size:12.5px;line-height:20px;font-weight:400;color:#000;;transform-origin:100% 0">7,5</div>
<div style="left:1794px;top:399px;width:76px;height:21px;box-sizing:border-box;background:#FFF2CC;background-clip:padding-box;border-top:1px dotted #000;border-bottom:1px dotted #000;border-left:1px dotted #000;border-right:1px dotted #000;"></div>
<div class="t" style="left:1748.00px;width:120px;text-align:right;top:401px;font-size:12.5px;line-height:20px;font-weight:400;color:#000;;transform-origin:100% 0">7,5</div>
<div style="left:1869px;top:399px;width:76px;height:21px;box-sizing:border-box;background:#FFF2CC;background-clip:padding-box;border-top:1px dotted #000;border-bottom:1px dotted #000;border-left:1px dotted #000;border-right:1px dotted #000;"></div>
<div style="left:13px;top:419px;width:273px;height:21px;box-sizing:border-box;border-top:1px dotted #000;border-bottom:1px dotted #000;border-left:1px dotted #000;border-right:1px dotted #000;"></div>
<div class="t" style="left:16.00px;top:421px;font-size:12.5px;line-height:20px;font-weight:400;color:#000;;transform:scaleX(1.0716);transform-origin:0 0">Nominalny czas pracy</div>
<div style="left:297px;top:419px;width:76px;height:21px;box-sizing:border-box;background:#D9E1F2;background-clip:padding-box;border-top:1px dotted #000;border-bottom:1px dotted #000;border-left:1px dotted #000;border-right:1px dotted #000;"></div>
<div class="t" style="left:251.00px;width:120px;text-align:right;top:421px;font-size:12.5px;line-height:20px;font-weight:400;color:#000;;transform-origin:100% 0">8,0</div>
<div style="left:372px;top:419px;width:76px;height:21px;box-sizing:border-box;background:#D9E1F2;background-clip:padding-box;border-top:1px dotted #000;border-bottom:1px dotted #000;border-left:1px dotted #000;border-right:1px dotted #000;"></div>
<div class="t" style="left:326.00px;width:120px;text-align:right;top:421px;font-size:12.5px;line-height:20px;font-weight:400;color:#000;;transform-origin:100% 0">8,0</div>
<div style="left:447px;top:419px;width:76px;height:21px;box-sizing:border-box;background:#D9E1F2;background-clip:padding-box;border-top:1px dotted #000;border-bottom:1px dotted #000;border-left:1px dotted #000;border-right:1px dotted #000;"></div>
<div class="t" style="left:401.00px;width:120px;text-align:right;top:421px;font-size:12.5px;line-height:20px;font-weight:400;color:#000;;transform-origin:100% 0">8,0</div>
<div style="left:522px;top:419px;width:76px;height:21px;box-sizing:border-box;background:#D9E1F2;background-clip:padding-box;border-top:1px dotted #000;border-bottom:1px dotted #000;border-left:1px dotted #000;border-right:1px dotted #000;"></div>
<div class="t" style="left:476.00px;width:120px;text-align:right;top:421px;font-size:12.5px;line-height:20px;font-weight:400;color:#000;;transform-origin:100% 0">8,0</div>
<div style="left:597px;top:419px;width:76px;height:21px;box-sizing:border-box;background:#D9E1F2;background-clip:padding-box;border-top:1px dotted #000;border-bottom:1px dotted #000;border-left:1px dotted #000;border-right:1px dotted #000;"></div>
<div class="t" style="left:551.00px;width:120px;text-align:right;top:421px;font-size:12.5px;line-height:20px;font-weight:400;color:#000;;transform-origin:100% 0">8,0</div>
<div style="left:672px;top:419px;width:76px;height:21px;box-sizing:border-box;background:#D9E1F2;background-clip:padding-box;border-top:1px dotted #000;border-bottom:1px dotted #000;border-left:1px dotted #000;border-right:1px dotted #000;"></div>
<div class="t" style="left:626.00px;width:120px;text-align:right;top:421px;font-size:12.5px;line-height:20px;font-weight:400;color:#000;;transform-origin:100% 0">8,0</div>
<div style="left:747px;top:419px;width:76px;height:21px;box-sizing:border-box;background:#D9E1F2;background-clip:padding-box;border-top:1px dotted #000;border-bottom:1px dotted #000;border-left:1px dotted #000;border-right:1px dotted #000;"></div>
<div class="t" style="left:701.00px;width:120px;text-align:right;top:421px;font-size:12.5px;line-height:20px;font-weight:400;color:#000;;transform-origin:100% 0">8,0</div>
<div style="left:822px;top:419px;width:76px;height:21px;box-sizing:border-box;background:#D9E1F2;background-clip:padding-box;border-top:1px dotted #000;border-bottom:1px dotted #000;border-left:1px dotted #000;border-right:1px dotted #000;"></div>
<div class="t" style="left:776.00px;width:120px;text-align:right;top:421px;font-size:12.5px;line-height:20px;font-weight:400;color:#000;;transform-origin:100% 0">8,0</div>
<div style="left:897px;top:419px;width:76px;height:21px;box-sizing:border-box;background:#D9E1F2;background-clip:padding-box;border-top:1px dotted #000;border-bottom:1px dotted #000;border-left:1px dotted #000;border-right:1px dotted #000;"></div>
<div class="t" style="left:851.00px;width:120px;text-align:right;top:421px;font-size:12.5px;line-height:20px;font-weight:400;color:#000;;transform-origin:100% 0">8,0</div>
<div style="left:972px;top:419px;width:76px;height:21px;box-sizing:border-box;background:#D9E1F2;background-clip:padding-box;border-top:1px dotted #000;border-bottom:1px dotted #000;border-left:1px dotted #000;border-right:1px dotted #000;"></div>
<div class="t" style="left:926.00px;width:120px;text-align:right;top:421px;font-size:12.5px;line-height:20px;font-weight:400;color:#000;;transform-origin:100% 0">8,0</div>
<div style="left:1047px;top:419px;width:76px;height:21px;box-sizing:border-box;background:#D9E1F2;background-clip:padding-box;border-top:1px dotted #000;border-bottom:1px dotted #000;border-left:1px dotted #000;border-right:1px dotted #000;"></div>
<div class="t" style="left:1001.00px;width:120px;text-align:right;top:421px;font-size:12.5px;line-height:20px;font-weight:400;color:#000;;transform-origin:100% 0">8,0</div>
<div style="left:1122px;top:419px;width:76px;height:21px;box-sizing:border-box;background:#D9E1F2;background-clip:padding-box;border-top:1px dotted #000;border-bottom:1px dotted #000;border-left:1px dotted #000;border-right:1px dotted #000;"></div>
<div class="t" style="left:1076.00px;width:120px;text-align:right;top:421px;font-size:12.5px;line-height:20px;font-weight:400;color:#000;;transform-origin:100% 0">8,0</div>
<div style="left:1197px;top:419px;width:76px;height:21px;box-sizing:border-box;background:#D9E1F2;background-clip:padding-box;border-top:1px dotted #000;border-bottom:1px dotted #000;border-left:1px dotted #000;border-right:1px dotted #000;"></div>
<div class="t" style="left:1151.00px;width:120px;text-align:right;top:421px;font-size:12.5px;line-height:20px;font-weight:400;color:#000;;transform-origin:100% 0">8,0</div>
<div style="left:1284px;top:419px;width:76px;height:21px;box-sizing:border-box;background:#D9E1F2;background-clip:padding-box;border-top:1px dotted #000;border-bottom:1px dotted #000;border-left:1px dotted #000;border-right:1px dotted #000;"></div>
<div class="t" style="left:1238.00px;width:120px;text-align:right;top:421px;font-size:12.5px;line-height:20px;font-weight:400;color:#000;;transform-origin:100% 0">8,0</div>
<div style="left:1371px;top:419px;width:76px;height:21px;box-sizing:border-box;background:#D9E1F2;background-clip:padding-box;border-top:1px dotted #000;border-bottom:1px dotted #000;border-left:1px dotted #000;border-right:1px dotted #000;"></div>
<div class="t" style="left:1325.00px;width:120px;text-align:right;top:421px;font-size:12.5px;line-height:20px;font-weight:400;color:#000;;transform-origin:100% 0">8,0</div>
<div style="left:1458px;top:419px;width:76px;height:21px;box-sizing:border-box;background:#D9E1F2;background-clip:padding-box;border-top:1px dotted #000;border-bottom:1px dotted #000;border-left:1px dotted #000;border-right:1px dotted #000;"></div>
<div class="t" style="left:1412.00px;width:120px;text-align:right;top:421px;font-size:12.5px;line-height:20px;font-weight:400;color:#000;;transform-origin:100% 0">8,0</div>
<div style="left:1545px;top:419px;width:76px;height:21px;box-sizing:border-box;background:#D9E1F2;background-clip:padding-box;border-top:1px dotted #000;border-bottom:1px dotted #000;border-left:1px dotted #000;border-right:1px dotted #000;"></div>
<div class="t" style="left:1499.00px;width:120px;text-align:right;top:421px;font-size:12.5px;line-height:20px;font-weight:400;color:#000;;transform-origin:100% 0">8,0</div>
<div style="left:1632px;top:419px;width:76px;height:21px;box-sizing:border-box;background:#D9E1F2;background-clip:padding-box;border-top:1px dotted #000;border-bottom:1px dotted #000;border-left:1px dotted #000;border-right:1px dotted #000;"></div>
<div class="t" style="left:1586.00px;width:120px;text-align:right;top:421px;font-size:12.5px;line-height:20px;font-weight:400;color:#000;;transform-origin:100% 0">8,0</div>
<div style="left:1719px;top:419px;width:76px;height:21px;box-sizing:border-box;background:#FFF2CC;background-clip:padding-box;border-top:1px dotted #000;border-bottom:1px dotted #000;border-left:1px dotted #000;border-right:1px dotted #000;"></div>
<div class="t" style="left:1673.00px;width:120px;text-align:right;top:421px;font-size:12.5px;line-height:20px;font-weight:400;color:#000;;transform-origin:100% 0">8,0</div>
<div style="left:1794px;top:419px;width:76px;height:21px;box-sizing:border-box;background:#FFF2CC;background-clip:padding-box;border-top:1px dotted #000;border-bottom:1px dotted #000;border-left:1px dotted #000;border-right:1px dotted #000;"></div>
<div class="t" style="left:1748.00px;width:120px;text-align:right;top:421px;font-size:12.5px;line-height:20px;font-weight:400;color:#000;;transform-origin:100% 0">8,0</div>
<div style="left:1869px;top:419px;width:76px;height:21px;box-sizing:border-box;background:#FFF2CC;background-clip:padding-box;border-top:1px dotted #000;border-bottom:1px dotted #000;border-left:1px dotted #000;border-right:1px dotted #000;"></div>
<div style="left:13px;top:439px;width:273px;height:21px;box-sizing:border-box;border-top:1px dotted #000;border-bottom:1px dotted #000;border-left:1px dotted #000;border-right:1px dotted #000;"></div>
<div class="t" style="left:16.00px;top:441px;font-size:12.5px;line-height:20px;font-weight:400;color:#000;;transform:scaleX(1.1360);transform-origin:0 0">Godziny niefektywne</div>
<div style="left:297px;top:439px;width:76px;height:21px;box-sizing:border-box;background:#D9E1F2;background-clip:padding-box;border-top:1px dotted #000;border-bottom:1px dotted #000;border-left:1px dotted #000;border-right:1px dotted #000;"></div>
<div class="t" style="left:251.00px;width:120px;text-align:right;top:441px;font-size:12.5px;line-height:20px;font-weight:400;color:#000;;transform-origin:100% 0">2 020</div>
<div style="left:372px;top:439px;width:76px;height:21px;box-sizing:border-box;background:#D9E1F2;background-clip:padding-box;border-top:1px dotted #000;border-bottom:1px dotted #000;border-left:1px dotted #000;border-right:1px dotted #000;"></div>
<div class="t" style="left:326.00px;width:120px;text-align:right;top:441px;font-size:12.5px;line-height:20px;font-weight:400;color:#000;;transform-origin:100% 0">2 237</div>
<div style="left:447px;top:439px;width:76px;height:21px;box-sizing:border-box;background:#D9E1F2;background-clip:padding-box;border-top:1px dotted #000;border-bottom:1px dotted #000;border-left:1px dotted #000;border-right:1px dotted #000;"></div>
<div class="t" style="left:401.00px;width:120px;text-align:right;top:441px;font-size:12.5px;line-height:20px;font-weight:400;color:#000;;transform-origin:100% 0">2 477</div>
<div style="left:522px;top:439px;width:76px;height:21px;box-sizing:border-box;background:#D9E1F2;background-clip:padding-box;border-top:1px dotted #000;border-bottom:1px dotted #000;border-left:1px dotted #000;border-right:1px dotted #000;"></div>
<div class="t" style="left:476.00px;width:120px;text-align:right;top:441px;font-size:12.5px;line-height:20px;font-weight:400;color:#000;;transform-origin:100% 0">2 142</div>
<div style="left:597px;top:439px;width:76px;height:21px;box-sizing:border-box;background:#D9E1F2;background-clip:padding-box;border-top:1px dotted #000;border-bottom:1px dotted #000;border-left:1px dotted #000;border-right:1px dotted #000;"></div>
<div class="t" style="left:551.00px;width:120px;text-align:right;top:441px;font-size:12.5px;line-height:20px;font-weight:400;color:#000;;transform-origin:100% 0">2 316</div>
<div style="left:672px;top:439px;width:76px;height:21px;box-sizing:border-box;background:#D9E1F2;background-clip:padding-box;border-top:1px dotted #000;border-bottom:1px dotted #000;border-left:1px dotted #000;border-right:1px dotted #000;"></div>
<div class="t" style="left:626.00px;width:120px;text-align:right;top:441px;font-size:12.5px;line-height:20px;font-weight:400;color:#000;;transform-origin:100% 0">2 301</div>
<div style="left:747px;top:439px;width:76px;height:21px;box-sizing:border-box;background:#D9E1F2;background-clip:padding-box;border-top:1px dotted #000;border-bottom:1px dotted #000;border-left:1px dotted #000;border-right:1px dotted #000;"></div>
<div class="t" style="left:701.00px;width:120px;text-align:right;top:441px;font-size:12.5px;line-height:20px;font-weight:400;color:#000;;transform-origin:100% 0">2 356</div>
<div style="left:822px;top:439px;width:76px;height:21px;box-sizing:border-box;background:#D9E1F2;background-clip:padding-box;border-top:1px dotted #000;border-bottom:1px dotted #000;border-left:1px dotted #000;border-right:1px dotted #000;"></div>
<div class="t" style="left:776.00px;width:120px;text-align:right;top:441px;font-size:12.5px;line-height:20px;font-weight:400;color:#000;;transform-origin:100% 0">1 554</div>
<div style="left:897px;top:439px;width:76px;height:21px;box-sizing:border-box;background:#D9E1F2;background-clip:padding-box;border-top:1px dotted #000;border-bottom:1px dotted #000;border-left:1px dotted #000;border-right:1px dotted #000;"></div>
<div class="t" style="left:851.00px;width:120px;text-align:right;top:441px;font-size:12.5px;line-height:20px;font-weight:400;color:#000;;transform-origin:100% 0">1 945</div>
<div style="left:972px;top:439px;width:76px;height:21px;box-sizing:border-box;background:#D9E1F2;background-clip:padding-box;border-top:1px dotted #000;border-bottom:1px dotted #000;border-left:1px dotted #000;border-right:1px dotted #000;"></div>
<div class="t" style="left:926.00px;width:120px;text-align:right;top:441px;font-size:12.5px;line-height:20px;font-weight:400;color:#000;;transform-origin:100% 0">1 931</div>
<div style="left:1047px;top:439px;width:76px;height:21px;box-sizing:border-box;background:#D9E1F2;background-clip:padding-box;border-top:1px dotted #000;border-bottom:1px dotted #000;border-left:1px dotted #000;border-right:1px dotted #000;"></div>
<div class="t" style="left:1001.00px;width:120px;text-align:right;top:441px;font-size:12.5px;line-height:20px;font-weight:400;color:#000;;transform-origin:100% 0">1 665</div>
<div style="left:1122px;top:439px;width:76px;height:21px;box-sizing:border-box;background:#D9E1F2;background-clip:padding-box;border-top:1px dotted #000;border-bottom:1px dotted #000;border-left:1px dotted #000;border-right:1px dotted #000;"></div>
<div class="t" style="left:1076.00px;width:120px;text-align:right;top:441px;font-size:12.5px;line-height:20px;font-weight:400;color:#000;;transform-origin:100% 0">1 164</div>
<div style="left:1197px;top:439px;width:76px;height:21px;box-sizing:border-box;background:#D9E1F2;background-clip:padding-box;border-top:1px dotted #000;border-bottom:1px dotted #000;border-left:1px dotted #000;border-right:1px dotted #000;"></div>
<div class="t" style="left:1151.00px;width:120px;text-align:right;top:441px;font-size:12.5px;line-height:20px;font-weight:700;color:#000;;transform-origin:100% 0">24 107</div>
<div style="left:1284px;top:439px;width:76px;height:21px;box-sizing:border-box;background:#D9E1F2;background-clip:padding-box;border-top:1px dotted #000;border-bottom:1px dotted #000;border-left:1px dotted #000;border-right:1px dotted #000;"></div>
<div class="t" style="left:1238.00px;width:120px;text-align:right;top:441px;font-size:12.5px;line-height:20px;font-weight:700;color:#000;;transform-origin:100% 0">23 958</div>
<div style="left:1371px;top:439px;width:76px;height:21px;box-sizing:border-box;background:#D9E1F2;background-clip:padding-box;border-top:1px dotted #000;border-bottom:1px dotted #000;border-left:1px dotted #000;border-right:1px dotted #000;"></div>
<div class="t" style="left:1325.00px;width:120px;text-align:right;top:441px;font-size:12.5px;line-height:20px;font-weight:700;color:#000;;transform-origin:100% 0">9 209</div>
<div style="left:1458px;top:439px;width:76px;height:21px;box-sizing:border-box;background:#D9E1F2;background-clip:padding-box;border-top:1px dotted #000;border-bottom:1px dotted #000;border-left:1px dotted #000;border-right:1px dotted #000;"></div>
<div class="t" style="left:1412.00px;width:120px;text-align:right;top:441px;font-size:12.5px;line-height:20px;font-weight:700;color:#000;;transform-origin:100% 0">5 022</div>
<div style="left:1545px;top:439px;width:76px;height:21px;box-sizing:border-box;background:#D9E1F2;background-clip:padding-box;border-top:1px dotted #000;border-bottom:1px dotted #000;border-left:1px dotted #000;border-right:1px dotted #000;"></div>
<div class="t" style="left:1499.00px;width:120px;text-align:right;top:441px;font-size:12.5px;line-height:20px;font-weight:700;color:#000;;transform-origin:100% 0">6 270</div>
<div style="left:1632px;top:439px;width:76px;height:21px;box-sizing:border-box;background:#D9E1F2;background-clip:padding-box;border-top:1px dotted #000;border-bottom:1px dotted #000;border-left:1px dotted #000;border-right:1px dotted #000;"></div>
<div class="t" style="left:1586.00px;width:120px;text-align:right;top:441px;font-size:12.5px;line-height:20px;font-weight:700;color:#000;;transform-origin:100% 0">21 575</div>
<div style="left:1719px;top:439px;width:76px;height:21px;box-sizing:border-box;background:#FFF2CC;background-clip:padding-box;border-top:1px dotted #000;border-bottom:1px dotted #000;border-left:1px dotted #000;border-right:1px dotted #000;"></div>
<div class="t" style="left:1673.00px;width:120px;text-align:right;top:441px;font-size:12.5px;line-height:20px;font-weight:400;color:#000;;transform-origin:100% 0">7 518</div>
<div style="left:1794px;top:439px;width:76px;height:21px;box-sizing:border-box;background:#FFF2CC;background-clip:padding-box;border-top:1px dotted #000;border-bottom:1px dotted #000;border-left:1px dotted #000;border-right:1px dotted #000;"></div>
<div class="t" style="left:1748.00px;width:120px;text-align:right;top:441px;font-size:12.5px;line-height:20px;font-weight:400;color:#000;;transform-origin:100% 0">8 406</div>
<div style="left:1869px;top:439px;width:76px;height:21px;box-sizing:border-box;background:#FFF2CC;background-clip:padding-box;border-top:1px dotted #000;border-bottom:1px dotted #000;border-left:1px dotted #000;border-right:1px dotted #000;"></div>
<div style="left:13px;top:459px;width:273px;height:21px;box-sizing:border-box;border-top:1px dotted #000;border-bottom:1px dotted #000;border-left:1px dotted #000;border-right:1px dotted #000;"></div>
<div class="t" style="left:16.00px;top:461px;font-size:12.5px;line-height:20px;font-weight:400;color:#000;;transform:scaleX(1.0904);transform-origin:0 0">Godziny przepracowane</div>
<div style="left:297px;top:459px;width:76px;height:21px;box-sizing:border-box;background:#D9E1F2;background-clip:padding-box;border-top:1px dotted #000;border-bottom:1px dotted #000;border-left:1px dotted #000;border-right:1px dotted #000;"></div>
<div class="t" style="left:251.00px;width:120px;text-align:right;top:461px;font-size:12.5px;line-height:20px;font-weight:400;color:#000;;transform-origin:100% 0">32 321</div>
<div style="left:372px;top:459px;width:76px;height:21px;box-sizing:border-box;background:#D9E1F2;background-clip:padding-box;border-top:1px dotted #000;border-bottom:1px dotted #000;border-left:1px dotted #000;border-right:1px dotted #000;"></div>
<div class="t" style="left:326.00px;width:120px;text-align:right;top:461px;font-size:12.5px;line-height:20px;font-weight:400;color:#000;;transform-origin:100% 0">35 796</div>
<div style="left:447px;top:459px;width:76px;height:21px;box-sizing:border-box;background:#D9E1F2;background-clip:padding-box;border-top:1px dotted #000;border-bottom:1px dotted #000;border-left:1px dotted #000;border-right:1px dotted #000;"></div>
<div class="t" style="left:401.00px;width:120px;text-align:right;top:461px;font-size:12.5px;line-height:20px;font-weight:400;color:#000;;transform-origin:100% 0">39 627</div>
<div style="left:522px;top:459px;width:76px;height:21px;box-sizing:border-box;background:#D9E1F2;background-clip:padding-box;border-top:1px dotted #000;border-bottom:1px dotted #000;border-left:1px dotted #000;border-right:1px dotted #000;"></div>
<div class="t" style="left:476.00px;width:120px;text-align:right;top:461px;font-size:12.5px;line-height:20px;font-weight:400;color:#000;;transform-origin:100% 0">34 272</div>
<div style="left:597px;top:459px;width:76px;height:21px;box-sizing:border-box;background:#D9E1F2;background-clip:padding-box;border-top:1px dotted #000;border-bottom:1px dotted #000;border-left:1px dotted #000;border-right:1px dotted #000;"></div>
<div class="t" style="left:551.00px;width:120px;text-align:right;top:461px;font-size:12.5px;line-height:20px;font-weight:400;color:#000;;transform-origin:100% 0">37 055</div>
<div style="left:672px;top:459px;width:76px;height:21px;box-sizing:border-box;background:#D9E1F2;background-clip:padding-box;border-top:1px dotted #000;border-bottom:1px dotted #000;border-left:1px dotted #000;border-right:1px dotted #000;"></div>
<div class="t" style="left:626.00px;width:120px;text-align:right;top:461px;font-size:12.5px;line-height:20px;font-weight:400;color:#000;;transform-origin:100% 0">36 811</div>
<div style="left:747px;top:459px;width:76px;height:21px;box-sizing:border-box;background:#D9E1F2;background-clip:padding-box;border-top:1px dotted #000;border-bottom:1px dotted #000;border-left:1px dotted #000;border-right:1px dotted #000;"></div>
<div class="t" style="left:701.00px;width:120px;text-align:right;top:461px;font-size:12.5px;line-height:20px;font-weight:400;color:#000;;transform-origin:100% 0">37 689</div>
<div style="left:822px;top:459px;width:76px;height:21px;box-sizing:border-box;background:#D9E1F2;background-clip:padding-box;border-top:1px dotted #000;border-bottom:1px dotted #000;border-left:1px dotted #000;border-right:1px dotted #000;"></div>
<div class="t" style="left:776.00px;width:120px;text-align:right;top:461px;font-size:12.5px;line-height:20px;font-weight:400;color:#000;;transform-origin:100% 0">24 857</div>
<div style="left:897px;top:459px;width:76px;height:21px;box-sizing:border-box;background:#D9E1F2;background-clip:padding-box;border-top:1px dotted #000;border-bottom:1px dotted #000;border-left:1px dotted #000;border-right:1px dotted #000;"></div>
<div class="t" style="left:851.00px;width:120px;text-align:right;top:461px;font-size:12.5px;line-height:20px;font-weight:400;color:#000;;transform-origin:100% 0">31 115</div>
<div style="left:972px;top:459px;width:76px;height:21px;box-sizing:border-box;background:#D9E1F2;background-clip:padding-box;border-top:1px dotted #000;border-bottom:1px dotted #000;border-left:1px dotted #000;border-right:1px dotted #000;"></div>
<div class="t" style="left:926.00px;width:120px;text-align:right;top:461px;font-size:12.5px;line-height:20px;font-weight:400;color:#000;;transform-origin:100% 0">30 890</div>
<div style="left:1047px;top:459px;width:76px;height:21px;box-sizing:border-box;background:#D9E1F2;background-clip:padding-box;border-top:1px dotted #000;border-bottom:1px dotted #000;border-left:1px dotted #000;border-right:1px dotted #000;"></div>
<div class="t" style="left:1001.00px;width:120px;text-align:right;top:461px;font-size:12.5px;line-height:20px;font-weight:400;color:#000;;transform-origin:100% 0">26 646</div>
<div style="left:1122px;top:459px;width:76px;height:21px;box-sizing:border-box;background:#D9E1F2;background-clip:padding-box;border-top:1px dotted #000;border-bottom:1px dotted #000;border-left:1px dotted #000;border-right:1px dotted #000;"></div>
<div class="t" style="left:1076.00px;width:120px;text-align:right;top:461px;font-size:12.5px;line-height:20px;font-weight:400;color:#000;;transform-origin:100% 0">18 632</div>
<div style="left:1197px;top:459px;width:76px;height:21px;box-sizing:border-box;background:#D9E1F2;background-clip:padding-box;border-top:1px dotted #000;border-bottom:1px dotted #000;border-left:1px dotted #000;border-right:1px dotted #000;"></div>
<div class="t" style="left:1151.00px;width:120px;text-align:right;top:461px;font-size:12.5px;line-height:20px;font-weight:700;color:#000;;transform-origin:100% 0">385 710</div>
<div style="left:1284px;top:459px;width:76px;height:21px;box-sizing:border-box;background:#D9E1F2;background-clip:padding-box;border-top:1px dotted #000;border-bottom:1px dotted #000;border-left:1px dotted #000;border-right:1px dotted #000;"></div>
<div class="t" style="left:1238.00px;width:120px;text-align:right;top:461px;font-size:12.5px;line-height:20px;font-weight:700;color:#000;;transform-origin:100% 0">383 334</div>
<div style="left:1371px;top:459px;width:76px;height:21px;box-sizing:border-box;background:#D9E1F2;background-clip:padding-box;border-top:1px dotted #000;border-bottom:1px dotted #000;border-left:1px dotted #000;border-right:1px dotted #000;"></div>
<div class="t" style="left:1325.00px;width:120px;text-align:right;top:461px;font-size:12.5px;line-height:20px;font-weight:700;color:#000;;transform-origin:100% 0">147 350</div>
<div style="left:1458px;top:459px;width:76px;height:21px;box-sizing:border-box;background:#D9E1F2;background-clip:padding-box;border-top:1px dotted #000;border-bottom:1px dotted #000;border-left:1px dotted #000;border-right:1px dotted #000;"></div>
<div class="t" style="left:1412.00px;width:120px;text-align:right;top:461px;font-size:12.5px;line-height:20px;font-weight:700;color:#000;;transform-origin:100% 0">80 348</div>
<div style="left:1545px;top:459px;width:76px;height:21px;box-sizing:border-box;background:#D9E1F2;background-clip:padding-box;border-top:1px dotted #000;border-bottom:1px dotted #000;border-left:1px dotted #000;border-right:1px dotted #000;"></div>
<div class="t" style="left:1499.00px;width:120px;text-align:right;top:461px;font-size:12.5px;line-height:20px;font-weight:700;color:#000;;transform-origin:100% 0">100 317</div>
<div style="left:1632px;top:459px;width:76px;height:21px;box-sizing:border-box;background:#D9E1F2;background-clip:padding-box;border-top:1px dotted #000;border-bottom:1px dotted #000;border-left:1px dotted #000;border-right:1px dotted #000;"></div>
<div class="t" style="left:1586.00px;width:120px;text-align:right;top:461px;font-size:12.5px;line-height:20px;font-weight:700;color:#000;;transform-origin:100% 0">345 197</div>
<div style="left:1719px;top:459px;width:76px;height:21px;box-sizing:border-box;background:#FFF2CC;background-clip:padding-box;border-top:1px dotted #000;border-bottom:1px dotted #000;border-left:1px dotted #000;border-right:1px dotted #000;"></div>
<div class="t" style="left:1673.00px;width:120px;text-align:right;top:461px;font-size:12.5px;line-height:20px;font-weight:400;color:#000;;transform-origin:100% 0">120 281</div>
<div style="left:1794px;top:459px;width:76px;height:21px;box-sizing:border-box;background:#FFF2CC;background-clip:padding-box;border-top:1px dotted #000;border-bottom:1px dotted #000;border-left:1px dotted #000;border-right:1px dotted #000;"></div>
<div class="t" style="left:1748.00px;width:120px;text-align:right;top:461px;font-size:12.5px;line-height:20px;font-weight:400;color:#000;;transform-origin:100% 0">134 497</div>
<div style="left:1869px;top:459px;width:76px;height:21px;box-sizing:border-box;background:#FFF2CC;background-clip:padding-box;border-top:1px dotted #000;border-bottom:1px dotted #000;border-left:1px dotted #000;border-right:1px dotted #000;"></div>
<div style="left:13px;top:485px;width:273px;height:21px;box-sizing:border-box;border-top:1px dotted #000;border-bottom:1px dotted #000;border-left:1px dotted #000;border-right:1px dotted #000;"></div>
<div class="t" style="left:16.00px;top:487px;font-size:12.5px;line-height:20px;font-weight:400;color:#000;;transform:scaleX(1.1349);transform-origin:0 0">Urlopy</div>
<div style="left:297px;top:485px;width:76px;height:21px;box-sizing:border-box;background:#D9E1F2;background-clip:padding-box;border-top:1px dotted #000;border-bottom:1px dotted #000;border-left:1px dotted #000;border-right:1px dotted #000;"></div>
<div class="t" style="left:251.00px;width:120px;text-align:right;top:487px;font-size:12.5px;line-height:20px;font-weight:400;color:#000;;transform-origin:100% 0">5,00%</div>
<div style="left:372px;top:485px;width:76px;height:21px;box-sizing:border-box;background:#D9E1F2;background-clip:padding-box;border-top:1px dotted #000;border-bottom:1px dotted #000;border-left:1px dotted #000;border-right:1px dotted #000;"></div>
<div class="t" style="left:326.00px;width:120px;text-align:right;top:487px;font-size:12.5px;line-height:20px;font-weight:400;color:#000;;transform-origin:100% 0">5,00%</div>
<div style="left:447px;top:485px;width:76px;height:21px;box-sizing:border-box;background:#D9E1F2;background-clip:padding-box;border-top:1px dotted #000;border-bottom:1px dotted #000;border-left:1px dotted #000;border-right:1px dotted #000;"></div>
<div class="t" style="left:401.00px;width:120px;text-align:right;top:487px;font-size:12.5px;line-height:20px;font-weight:400;color:#000;;transform-origin:100% 0">5,00%</div>
<div style="left:522px;top:485px;width:76px;height:21px;box-sizing:border-box;background:#D9E1F2;background-clip:padding-box;border-top:1px dotted #000;border-bottom:1px dotted #000;border-left:1px dotted #000;border-right:1px dotted #000;"></div>
<div class="t" style="left:476.00px;width:120px;text-align:right;top:487px;font-size:12.5px;line-height:20px;font-weight:400;color:#000;;transform-origin:100% 0">5,00%</div>
<div style="left:597px;top:485px;width:76px;height:21px;box-sizing:border-box;background:#D9E1F2;background-clip:padding-box;border-top:1px dotted #000;border-bottom:1px dotted #000;border-left:1px dotted #000;border-right:1px dotted #000;"></div>
<div class="t" style="left:551.00px;width:120px;text-align:right;top:487px;font-size:12.5px;line-height:20px;font-weight:400;color:#000;;transform-origin:100% 0">5,00%</div>
<div style="left:672px;top:485px;width:76px;height:21px;box-sizing:border-box;background:#D9E1F2;background-clip:padding-box;border-top:1px dotted #000;border-bottom:1px dotted #000;border-left:1px dotted #000;border-right:1px dotted #000;"></div>
<div class="t" style="left:626.00px;width:120px;text-align:right;top:487px;font-size:12.5px;line-height:20px;font-weight:400;color:#000;;transform-origin:100% 0">9,00%</div>
<div style="left:747px;top:485px;width:76px;height:21px;box-sizing:border-box;background:#D9E1F2;background-clip:padding-box;border-top:1px dotted #000;border-bottom:1px dotted #000;border-left:1px dotted #000;border-right:1px dotted #000;"></div>
<div class="t" style="left:701.00px;width:120px;text-align:right;top:487px;font-size:12.5px;line-height:20px;font-weight:400;color:#000;;transform-origin:100% 0">8,00%</div>
<div style="left:822px;top:485px;width:76px;height:21px;box-sizing:border-box;background:#D9E1F2;background-clip:padding-box;border-top:1px dotted #000;border-bottom:1px dotted #000;border-left:1px dotted #000;border-right:1px dotted #000;"></div>
<div class="t" style="left:776.00px;width:120px;text-align:right;top:487px;font-size:12.5px;line-height:20px;font-weight:400;color:#000;;transform-origin:100% 0">34,40%</div>
<div style="left:897px;top:485px;width:76px;height:21px;box-sizing:border-box;background:#D9E1F2;background-clip:padding-box;border-top:1px dotted #000;border-bottom:1px dotted #000;border-left:1px dotted #000;border-right:1px dotted #000;"></div>
<div class="t" style="left:851.00px;width:120px;text-align:right;top:487px;font-size:12.5px;line-height:20px;font-weight:400;color:#000;;transform-origin:100% 0">9,50%</div>
<div style="left:972px;top:485px;width:76px;height:21px;box-sizing:border-box;background:#D9E1F2;background-clip:padding-box;border-top:1px dotted #000;border-bottom:1px dotted #000;border-left:1px dotted #000;border-right:1px dotted #000;"></div>
<div class="t" style="left:926.00px;width:120px;text-align:right;top:487px;font-size:12.5px;line-height:20px;font-weight:400;color:#000;;transform-origin:100% 0">9,50%</div>
<div style="left:1047px;top:485px;width:76px;height:21px;box-sizing:border-box;background:#D9E1F2;background-clip:padding-box;border-top:1px dotted #000;border-bottom:1px dotted #000;border-left:1px dotted #000;border-right:1px dotted #000;"></div>
<div class="t" style="left:1001.00px;width:120px;text-align:right;top:487px;font-size:12.5px;line-height:20px;font-weight:400;color:#000;;transform-origin:100% 0">7,00%</div>
<div style="left:1122px;top:485px;width:76px;height:21px;box-sizing:border-box;background:#D9E1F2;background-clip:padding-box;border-top:1px dotted #000;border-bottom:1px dotted #000;border-left:1px dotted #000;border-right:1px dotted #000;"></div>
<div class="t" style="left:1076.00px;width:120px;text-align:right;top:487px;font-size:12.5px;line-height:20px;font-weight:400;color:#000;;transform-origin:100% 0">26,50%</div>
<div style="left:1197px;top:485px;width:76px;height:21px;box-sizing:border-box;background:#D9E1F2;background-clip:padding-box;border-top:1px dotted #000;border-bottom:1px dotted #000;border-left:1px dotted #000;border-right:1px dotted #000;"></div>
<div class="t" style="left:1151.00px;width:120px;text-align:right;top:487px;font-size:12.5px;line-height:20px;font-weight:400;color:#000;;transform-origin:100% 0">10,7%</div>
<div style="left:1284px;top:485px;width:76px;height:21px;box-sizing:border-box;background:#D9E1F2;background-clip:padding-box;border-top:1px dotted #000;border-bottom:1px dotted #000;border-left:1px dotted #000;border-right:1px dotted #000;"></div>
<div class="t" style="left:1238.00px;width:120px;text-align:right;top:487px;font-size:12.5px;line-height:20px;font-weight:400;color:#000;;transform-origin:100% 0">10,7%</div>
<div style="left:1371px;top:485px;width:76px;height:21px;box-sizing:border-box;background:#D9E1F2;background-clip:padding-box;border-top:1px dotted #000;border-bottom:1px dotted #000;border-left:1px dotted #000;border-right:1px dotted #000;"></div>
<div class="t" style="left:1325.00px;width:120px;text-align:right;top:487px;font-size:12.5px;line-height:20px;font-weight:400;color:#000;;transform-origin:100% 0">10,7%</div>
<div style="left:1458px;top:485px;width:76px;height:21px;box-sizing:border-box;background:#D9E1F2;background-clip:padding-box;border-top:1px dotted #000;border-bottom:1px dotted #000;border-left:1px dotted #000;border-right:1px dotted #000;"></div>
<div class="t" style="left:1412.00px;width:120px;text-align:right;top:487px;font-size:12.5px;line-height:20px;font-weight:400;color:#000;;transform-origin:100% 0">10,7%</div>
<div style="left:1545px;top:485px;width:76px;height:21px;box-sizing:border-box;background:#D9E1F2;background-clip:padding-box;border-top:1px dotted #000;border-bottom:1px dotted #000;border-left:1px dotted #000;border-right:1px dotted #000;"></div>
<div class="t" style="left:1499.00px;width:120px;text-align:right;top:487px;font-size:12.5px;line-height:20px;font-weight:400;color:#000;;transform-origin:100% 0">10,7%</div>
<div style="left:1632px;top:485px;width:76px;height:21px;box-sizing:border-box;background:#D9E1F2;background-clip:padding-box;border-top:1px dotted #000;border-bottom:1px dotted #000;border-left:1px dotted #000;border-right:1px dotted #000;"></div>
<div class="t" style="left:1586.00px;width:120px;text-align:right;top:487px;font-size:12.5px;line-height:20px;font-weight:400;color:#000;;transform-origin:100% 0">10,7%</div>
<div style="left:1719px;top:485px;width:76px;height:21px;box-sizing:border-box;background:#FFF2CC;background-clip:padding-box;border-top:1px dotted #000;border-bottom:1px dotted #000;border-left:1px dotted #000;border-right:1px dotted #000;"></div>
<div style="left:1794px;top:485px;width:76px;height:21px;box-sizing:border-box;background:#FFF2CC;background-clip:padding-box;border-top:1px dotted #000;border-bottom:1px dotted #000;border-left:1px dotted #000;border-right:1px dotted #000;"></div>
<div style="left:1869px;top:485px;width:76px;height:21px;box-sizing:border-box;background:#FFF2CC;background-clip:padding-box;border-top:1px dotted #000;border-bottom:1px dotted #000;border-left:1px dotted #000;border-right:1px dotted #000;"></div>
<div style="left:13px;top:505px;width:273px;height:21px;box-sizing:border-box;border-top:1px dotted #000;border-bottom:1px dotted #000;border-left:1px dotted #000;border-right:1px dotted #000;"></div>
<div class="t" style="left:16.00px;top:507px;font-size:12.5px;line-height:20px;font-weight:400;color:#000;;transform:scaleX(1.0794);transform-origin:0 0">Choroby</div>
<div style="left:297px;top:505px;width:76px;height:21px;box-sizing:border-box;background:#D9E1F2;background-clip:padding-box;border-top:1px dotted #000;border-bottom:1px dotted #000;border-left:1px dotted #000;border-right:1px dotted #000;"></div>
<div class="t" style="left:251.00px;width:120px;text-align:right;top:507px;font-size:12.5px;line-height:20px;font-weight:400;color:#000;;transform-origin:100% 0">4,00%</div>
<div style="left:372px;top:505px;width:76px;height:21px;box-sizing:border-box;background:#D9E1F2;background-clip:padding-box;border-top:1px dotted #000;border-bottom:1px dotted #000;border-left:1px dotted #000;border-right:1px dotted #000;"></div>
<div class="t" style="left:326.00px;width:120px;text-align:right;top:507px;font-size:12.5px;line-height:20px;font-weight:400;color:#000;;transform-origin:100% 0">4,00%</div>
<div style="left:447px;top:505px;width:76px;height:21px;box-sizing:border-box;background:#D9E1F2;background-clip:padding-box;border-top:1px dotted #000;border-bottom:1px dotted #000;border-left:1px dotted #000;border-right:1px dotted #000;"></div>
<div class="t" style="left:401.00px;width:120px;text-align:right;top:507px;font-size:12.5px;line-height:20px;font-weight:400;color:#000;;transform-origin:100% 0">4,00%</div>
<div style="left:522px;top:505px;width:76px;height:21px;box-sizing:border-box;background:#D9E1F2;background-clip:padding-box;border-top:1px dotted #000;border-bottom:1px dotted #000;border-left:1px dotted #000;border-right:1px dotted #000;"></div>
<div class="t" style="left:476.00px;width:120px;text-align:right;top:507px;font-size:12.5px;line-height:20px;font-weight:400;color:#000;;transform-origin:100% 0">4,00%</div>
<div style="left:597px;top:505px;width:76px;height:21px;box-sizing:border-box;background:#D9E1F2;background-clip:padding-box;border-top:1px dotted #000;border-bottom:1px dotted #000;border-left:1px dotted #000;border-right:1px dotted #000;"></div>
<div class="t" style="left:551.00px;width:120px;text-align:right;top:507px;font-size:12.5px;line-height:20px;font-weight:400;color:#000;;transform-origin:100% 0">4,00%</div>
<div style="left:672px;top:505px;width:76px;height:21px;box-sizing:border-box;background:#D9E1F2;background-clip:padding-box;border-top:1px dotted #000;border-bottom:1px dotted #000;border-left:1px dotted #000;border-right:1px dotted #000;"></div>
<div class="t" style="left:626.00px;width:120px;text-align:right;top:507px;font-size:12.5px;line-height:20px;font-weight:400;color:#000;;transform-origin:100% 0">4,00%</div>
<div style="left:747px;top:505px;width:76px;height:21px;box-sizing:border-box;background:#D9E1F2;background-clip:padding-box;border-top:1px dotted #000;border-bottom:1px dotted #000;border-left:1px dotted #000;border-right:1px dotted #000;"></div>
<div class="t" style="left:701.00px;width:120px;text-align:right;top:507px;font-size:12.5px;line-height:20px;font-weight:400;color:#000;;transform-origin:100% 0">4,00%</div>
<div style="left:822px;top:505px;width:76px;height:21px;box-sizing:border-box;background:#D9E1F2;background-clip:padding-box;border-top:1px dotted #000;border-bottom:1px dotted #000;border-left:1px dotted #000;border-right:1px dotted #000;"></div>
<div class="t" style="left:776.00px;width:120px;text-align:right;top:507px;font-size:12.5px;line-height:20px;font-weight:400;color:#000;;transform-origin:100% 0">4,00%</div>
<div style="left:897px;top:505px;width:76px;height:21px;box-sizing:border-box;background:#D9E1F2;background-clip:padding-box;border-top:1px dotted #000;border-bottom:1px dotted #000;border-left:1px dotted #000;border-right:1px dotted #000;"></div>
<div class="t" style="left:851.00px;width:120px;text-align:right;top:507px;font-size:12.5px;line-height:20px;font-weight:400;color:#000;;transform-origin:100% 0">4,00%</div>
<div style="left:972px;top:505px;width:76px;height:21px;box-sizing:border-box;background:#D9E1F2;background-clip:padding-box;border-top:1px dotted #000;border-bottom:1px dotted #000;border-left:1px dotted #000;border-right:1px dotted #000;"></div>
<div class="t" style="left:926.00px;width:120px;text-align:right;top:507px;font-size:12.5px;line-height:20px;font-weight:400;color:#000;;transform-origin:100% 0">4,00%</div>
<div style="left:1047px;top:505px;width:76px;height:21px;box-sizing:border-box;background:#D9E1F2;background-clip:padding-box;border-top:1px dotted #000;border-bottom:1px dotted #000;border-left:1px dotted #000;border-right:1px dotted #000;"></div>
<div class="t" style="left:1001.00px;width:120px;text-align:right;top:507px;font-size:12.5px;line-height:20px;font-weight:400;color:#000;;transform-origin:100% 0">4,00%</div>
<div style="left:1122px;top:505px;width:76px;height:21px;box-sizing:border-box;background:#D9E1F2;background-clip:padding-box;border-top:1px dotted #000;border-bottom:1px dotted #000;border-left:1px dotted #000;border-right:1px dotted #000;"></div>
<div class="t" style="left:1076.00px;width:120px;text-align:right;top:507px;font-size:12.5px;line-height:20px;font-weight:400;color:#000;;transform-origin:100% 0">4,00%</div>
<div style="left:1197px;top:505px;width:76px;height:21px;box-sizing:border-box;background:#D9E1F2;background-clip:padding-box;border-top:1px dotted #000;border-bottom:1px dotted #000;border-left:1px dotted #000;border-right:1px dotted #000;"></div>
<div class="t" style="left:1151.00px;width:120px;text-align:right;top:507px;font-size:12.5px;line-height:20px;font-weight:400;color:#000;;transform-origin:100% 0">4,0%</div>
<div style="left:1284px;top:505px;width:76px;height:21px;box-sizing:border-box;background:#D9E1F2;background-clip:padding-box;border-top:1px dotted #000;border-bottom:1px dotted #000;border-left:1px dotted #000;border-right:1px dotted #000;"></div>
<div class="t" style="left:1238.00px;width:120px;text-align:right;top:507px;font-size:12.5px;line-height:20px;font-weight:400;color:#000;;transform-origin:100% 0">4,0%</div>
<div style="left:1371px;top:505px;width:76px;height:21px;box-sizing:border-box;background:#D9E1F2;background-clip:padding-box;border-top:1px dotted #000;border-bottom:1px dotted #000;border-left:1px dotted #000;border-right:1px dotted #000;"></div>
<div class="t" style="left:1325.00px;width:120px;text-align:right;top:507px;font-size:12.5px;line-height:20px;font-weight:400;color:#000;;transform-origin:100% 0">4,0%</div>
<div style="left:1458px;top:505px;width:76px;height:21px;box-sizing:border-box;background:#D9E1F2;background-clip:padding-box;border-top:1px dotted #000;border-bottom:1px dotted #000;border-left:1px dotted #000;border-right:1px dotted #000;"></div>
<div class="t" style="left:1412.00px;width:120px;text-align:right;top:507px;font-size:12.5px;line-height:20px;font-weight:400;color:#000;;transform-origin:100% 0">4,0%</div>
<div style="left:1545px;top:505px;width:76px;height:21px;box-sizing:border-box;background:#D9E1F2;background-clip:padding-box;border-top:1px dotted #000;border-bottom:1px dotted #000;border-left:1px dotted #000;border-right:1px dotted #000;"></div>
<div class="t" style="left:1499.00px;width:120px;text-align:right;top:507px;font-size:12.5px;line-height:20px;font-weight:400;color:#000;;transform-origin:100% 0">4,0%</div>
<div style="left:1632px;top:505px;width:76px;height:21px;box-sizing:border-box;background:#D9E1F2;background-clip:padding-box;border-top:1px dotted #000;border-bottom:1px dotted #000;border-left:1px dotted #000;border-right:1px dotted #000;"></div>
<div class="t" style="left:1586.00px;width:120px;text-align:right;top:507px;font-size:12.5px;line-height:20px;font-weight:400;color:#000;;transform-origin:100% 0">4,0%</div>
<div style="left:1719px;top:505px;width:76px;height:21px;box-sizing:border-box;background:#FFF2CC;background-clip:padding-box;border-top:1px dotted #000;border-bottom:1px dotted #000;border-left:1px dotted #000;border-right:1px dotted #000;"></div>
<div style="left:1794px;top:505px;width:76px;height:21px;box-sizing:border-box;background:#FFF2CC;background-clip:padding-box;border-top:1px dotted #000;border-bottom:1px dotted #000;border-left:1px dotted #000;border-right:1px dotted #000;"></div>
<div style="left:1869px;top:505px;width:76px;height:21px;box-sizing:border-box;background:#FFF2CC;background-clip:padding-box;border-top:1px dotted #000;border-bottom:1px dotted #000;border-left:1px dotted #000;border-right:1px dotted #000;"></div>
<div style="left:13px;top:525px;width:273px;height:21px;box-sizing:border-box;border-top:1px dotted #000;border-bottom:1px dotted #000;border-left:1px dotted #000;border-right:1px dotted #000;"></div>
<div class="t" style="left:16.00px;top:527px;font-size:12.5px;line-height:20px;font-weight:400;color:#000;;transform:scaleX(0.9579);transform-origin:0 0">STOPA ABESENCJI</div>
<div style="left:297px;top:525px;width:76px;height:21px;box-sizing:border-box;background:#D9E1F2;background-clip:padding-box;border-top:1px dotted #000;border-bottom:1px dotted #000;border-left:1px dotted #000;border-right:1px dotted #000;"></div>
<div class="t" style="left:251.00px;width:120px;text-align:right;top:527px;font-size:12.5px;line-height:20px;font-weight:400;color:#000;;transform-origin:100% 0">9,0%</div>
<div style="left:372px;top:525px;width:76px;height:21px;box-sizing:border-box;background:#D9E1F2;background-clip:padding-box;border-top:1px dotted #000;border-bottom:1px dotted #000;border-left:1px dotted #000;border-right:1px dotted #000;"></div>
<div class="t" style="left:326.00px;width:120px;text-align:right;top:527px;font-size:12.5px;line-height:20px;font-weight:400;color:#000;;transform-origin:100% 0">9,0%</div>
<div style="left:447px;top:525px;width:76px;height:21px;box-sizing:border-box;background:#D9E1F2;background-clip:padding-box;border-top:1px dotted #000;border-bottom:1px dotted #000;border-left:1px dotted #000;border-right:1px dotted #000;"></div>
<div class="t" style="left:401.00px;width:120px;text-align:right;top:527px;font-size:12.5px;line-height:20px;font-weight:400;color:#000;;transform-origin:100% 0">9,0%</div>
<div style="left:522px;top:525px;width:76px;height:21px;box-sizing:border-box;background:#D9E1F2;background-clip:padding-box;border-top:1px dotted #000;border-bottom:1px dotted #000;border-left:1px dotted #000;border-right:1px dotted #000;"></div>
<div class="t" style="left:476.00px;width:120px;text-align:right;top:527px;font-size:12.5px;line-height:20px;font-weight:400;color:#000;;transform-origin:100% 0">9,0%</div>
<div style="left:597px;top:525px;width:76px;height:21px;box-sizing:border-box;background:#D9E1F2;background-clip:padding-box;border-top:1px dotted #000;border-bottom:1px dotted #000;border-left:1px dotted #000;border-right:1px dotted #000;"></div>
<div class="t" style="left:551.00px;width:120px;text-align:right;top:527px;font-size:12.5px;line-height:20px;font-weight:400;color:#000;;transform-origin:100% 0">9,0%</div>
<div style="left:672px;top:525px;width:76px;height:21px;box-sizing:border-box;background:#D9E1F2;background-clip:padding-box;border-top:1px dotted #000;border-bottom:1px dotted #000;border-left:1px dotted #000;border-right:1px dotted #000;"></div>
<div class="t" style="left:626.00px;width:120px;text-align:right;top:527px;font-size:12.5px;line-height:20px;font-weight:400;color:#000;;transform-origin:100% 0">13,0%</div>
<div style="left:747px;top:525px;width:76px;height:21px;box-sizing:border-box;background:#D9E1F2;background-clip:padding-box;border-top:1px dotted #000;border-bottom:1px dotted #000;border-left:1px dotted #000;border-right:1px dotted #000;"></div>
<div class="t" style="left:701.00px;width:120px;text-align:right;top:527px;font-size:12.5px;line-height:20px;font-weight:400;color:#000;;transform-origin:100% 0">12,0%</div>
<div style="left:822px;top:525px;width:76px;height:21px;box-sizing:border-box;background:#D9E1F2;background-clip:padding-box;border-top:1px dotted #000;border-bottom:1px dotted #000;border-left:1px dotted #000;border-right:1px dotted #000;"></div>
<div class="t" style="left:776.00px;width:120px;text-align:right;top:527px;font-size:12.5px;line-height:20px;font-weight:400;color:#000;;transform-origin:100% 0">38,4%</div>
<div style="left:897px;top:525px;width:76px;height:21px;box-sizing:border-box;background:#D9E1F2;background-clip:padding-box;border-top:1px dotted #000;border-bottom:1px dotted #000;border-left:1px dotted #000;border-right:1px dotted #000;"></div>
<div class="t" style="left:851.00px;width:120px;text-align:right;top:527px;font-size:12.5px;line-height:20px;font-weight:400;color:#000;;transform-origin:100% 0">13,5%</div>
<div style="left:972px;top:525px;width:76px;height:21px;box-sizing:border-box;background:#D9E1F2;background-clip:padding-box;border-top:1px dotted #000;border-bottom:1px dotted #000;border-left:1px dotted #000;border-right:1px dotted #000;"></div>
<div class="t" style="left:926.00px;width:120px;text-align:right;top:527px;font-size:12.5px;line-height:20px;font-weight:400;color:#000;;transform-origin:100% 0">13,5%</div>
<div style="left:1047px;top:525px;width:76px;height:21px;box-sizing:border-box;background:#D9E1F2;background-clip:padding-box;border-top:1px dotted #000;border-bottom:1px dotted #000;border-left:1px dotted #000;border-right:1px dotted #000;"></div>
<div class="t" style="left:1001.00px;width:120px;text-align:right;top:527px;font-size:12.5px;line-height:20px;font-weight:400;color:#000;;transform-origin:100% 0">11,0%</div>
<div style="left:1122px;top:525px;width:76px;height:21px;box-sizing:border-box;background:#D9E1F2;background-clip:padding-box;border-top:1px dotted #000;border-bottom:1px dotted #000;border-left:1px dotted #000;border-right:1px dotted #000;"></div>
<div class="t" style="left:1076.00px;width:120px;text-align:right;top:527px;font-size:12.5px;line-height:20px;font-weight:400;color:#000;;transform-origin:100% 0">30,5%</div>
<div style="left:1197px;top:525px;width:76px;height:21px;box-sizing:border-box;background:#D9E1F2;background-clip:padding-box;border-top:1px dotted #000;border-bottom:1px dotted #000;border-left:1px dotted #000;border-right:1px dotted #000;"></div>
<div class="t" style="left:1151.00px;width:120px;text-align:right;top:527px;font-size:12.5px;line-height:20px;font-weight:400;color:#000;;transform-origin:100% 0">14,7%</div>
<div style="left:1284px;top:525px;width:76px;height:21px;box-sizing:border-box;background:#D9E1F2;background-clip:padding-box;border-top:1px dotted #000;border-bottom:1px dotted #000;border-left:1px dotted #000;border-right:1px dotted #000;"></div>
<div class="t" style="left:1238.00px;width:120px;text-align:right;top:527px;font-size:12.5px;line-height:20px;font-weight:400;color:#000;;transform-origin:100% 0">14,7%</div>
<div style="left:1371px;top:525px;width:76px;height:21px;box-sizing:border-box;background:#D9E1F2;background-clip:padding-box;border-top:1px dotted #000;border-bottom:1px dotted #000;border-left:1px dotted #000;border-right:1px dotted #000;"></div>
<div class="t" style="left:1325.00px;width:120px;text-align:right;top:527px;font-size:12.5px;line-height:20px;font-weight:400;color:#000;;transform-origin:100% 0">14,7%</div>
<div style="left:1458px;top:525px;width:76px;height:21px;box-sizing:border-box;background:#D9E1F2;background-clip:padding-box;border-top:1px dotted #000;border-bottom:1px dotted #000;border-left:1px dotted #000;border-right:1px dotted #000;"></div>
<div class="t" style="left:1412.00px;width:120px;text-align:right;top:527px;font-size:12.5px;line-height:20px;font-weight:400;color:#000;;transform-origin:100% 0">14,7%</div>
<div style="left:1545px;top:525px;width:76px;height:21px;box-sizing:border-box;background:#D9E1F2;background-clip:padding-box;border-top:1px dotted #000;border-bottom:1px dotted #000;border-left:1px dotted #000;border-right:1px dotted #000;"></div>
<div class="t" style="left:1499.00px;width:120px;text-align:right;top:527px;font-size:12.5px;line-height:20px;font-weight:400;color:#000;;transform-origin:100% 0">14,7%</div>
<div style="left:1632px;top:525px;width:76px;height:21px;box-sizing:border-box;background:#D9E1F2;background-clip:padding-box;border-top:1px dotted #000;border-bottom:1px dotted #000;border-left:1px dotted #000;border-right:1px dotted #000;"></div>
<div class="t" style="left:1586.00px;width:120px;text-align:right;top:527px;font-size:12.5px;line-height:20px;font-weight:400;color:#000;;transform-origin:100% 0">14,7%</div>
<div style="left:1719px;top:525px;width:76px;height:21px;box-sizing:border-box;background:#FFF2CC;background-clip:padding-box;border-top:1px dotted #000;border-bottom:1px dotted #000;border-left:1px dotted #000;border-right:1px dotted #000;"></div>
<div style="left:1794px;top:525px;width:76px;height:21px;box-sizing:border-box;background:#FFF2CC;background-clip:padding-box;border-top:1px dotted #000;border-bottom:1px dotted #000;border-left:1px dotted #000;border-right:1px dotted #000;"></div>
<div style="left:1869px;top:525px;width:76px;height:21px;box-sizing:border-box;background:#FFF2CC;background-clip:padding-box;border-top:1px dotted #000;border-bottom:1px dotted #000;border-left:1px dotted #000;border-right:1px dotted #000;"></div>
<div style="left:13px;top:545px;width:273px;height:21px;box-sizing:border-box;border-top:1px dotted #000;border-bottom:1px dotted #000;border-left:1px dotted #000;border-right:1px dotted #000;"></div>
<div class="t" style="left:16.00px;top:547px;font-size:12.5px;line-height:20px;font-weight:400;color:#000;;transform:scaleX(1.0821);transform-origin:0 0">Godziny absencji</div>
<div style="left:297px;top:545px;width:76px;height:21px;box-sizing:border-box;background:#D9E1F2;background-clip:padding-box;border-top:1px dotted #000;border-bottom:1px dotted #000;border-left:1px dotted #000;border-right:1px dotted #000;"></div>
<div class="t" style="left:251.00px;width:120px;text-align:right;top:547px;font-size:12.5px;line-height:20px;font-weight:400;color:#000;;transform-origin:100% 0">3 197</div>
<div style="left:372px;top:545px;width:76px;height:21px;box-sizing:border-box;background:#D9E1F2;background-clip:padding-box;border-top:1px dotted #000;border-bottom:1px dotted #000;border-left:1px dotted #000;border-right:1px dotted #000;"></div>
<div class="t" style="left:326.00px;width:120px;text-align:right;top:547px;font-size:12.5px;line-height:20px;font-weight:400;color:#000;;transform-origin:100% 0">3 540</div>
<div style="left:447px;top:545px;width:76px;height:21px;box-sizing:border-box;background:#D9E1F2;background-clip:padding-box;border-top:1px dotted #000;border-bottom:1px dotted #000;border-left:1px dotted #000;border-right:1px dotted #000;"></div>
<div class="t" style="left:401.00px;width:120px;text-align:right;top:547px;font-size:12.5px;line-height:20px;font-weight:400;color:#000;;transform-origin:100% 0">3 919</div>
<div style="left:522px;top:545px;width:76px;height:21px;box-sizing:border-box;background:#D9E1F2;background-clip:padding-box;border-top:1px dotted #000;border-bottom:1px dotted #000;border-left:1px dotted #000;border-right:1px dotted #000;"></div>
<div class="t" style="left:476.00px;width:120px;text-align:right;top:547px;font-size:12.5px;line-height:20px;font-weight:400;color:#000;;transform-origin:100% 0">3 390</div>
<div style="left:597px;top:545px;width:76px;height:21px;box-sizing:border-box;background:#D9E1F2;background-clip:padding-box;border-top:1px dotted #000;border-bottom:1px dotted #000;border-left:1px dotted #000;border-right:1px dotted #000;"></div>
<div class="t" style="left:551.00px;width:120px;text-align:right;top:547px;font-size:12.5px;line-height:20px;font-weight:400;color:#000;;transform-origin:100% 0">3 665</div>
<div style="left:672px;top:545px;width:76px;height:21px;box-sizing:border-box;background:#D9E1F2;background-clip:padding-box;border-top:1px dotted #000;border-bottom:1px dotted #000;border-left:1px dotted #000;border-right:1px dotted #000;"></div>
<div class="t" style="left:626.00px;width:120px;text-align:right;top:547px;font-size:12.5px;line-height:20px;font-weight:400;color:#000;;transform-origin:100% 0">5 500</div>
<div style="left:747px;top:545px;width:76px;height:21px;box-sizing:border-box;background:#D9E1F2;background-clip:padding-box;border-top:1px dotted #000;border-bottom:1px dotted #000;border-left:1px dotted #000;border-right:1px dotted #000;"></div>
<div class="t" style="left:701.00px;width:120px;text-align:right;top:547px;font-size:12.5px;line-height:20px;font-weight:400;color:#000;;transform-origin:100% 0">5 139</div>
<div style="left:822px;top:545px;width:76px;height:21px;box-sizing:border-box;background:#D9E1F2;background-clip:padding-box;border-top:1px dotted #000;border-bottom:1px dotted #000;border-left:1px dotted #000;border-right:1px dotted #000;"></div>
<div class="t" style="left:776.00px;width:120px;text-align:right;top:547px;font-size:12.5px;line-height:20px;font-weight:400;color:#000;;transform-origin:100% 0">15 495</div>
<div style="left:897px;top:545px;width:76px;height:21px;box-sizing:border-box;background:#D9E1F2;background-clip:padding-box;border-top:1px dotted #000;border-bottom:1px dotted #000;border-left:1px dotted #000;border-right:1px dotted #000;"></div>
<div class="t" style="left:851.00px;width:120px;text-align:right;top:547px;font-size:12.5px;line-height:20px;font-weight:400;color:#000;;transform-origin:100% 0">4 856</div>
<div style="left:972px;top:545px;width:76px;height:21px;box-sizing:border-box;background:#D9E1F2;background-clip:padding-box;border-top:1px dotted #000;border-bottom:1px dotted #000;border-left:1px dotted #000;border-right:1px dotted #000;"></div>
<div class="t" style="left:926.00px;width:120px;text-align:right;top:547px;font-size:12.5px;line-height:20px;font-weight:400;color:#000;;transform-origin:100% 0">4 821</div>
<div style="left:1047px;top:545px;width:76px;height:21px;box-sizing:border-box;background:#D9E1F2;background-clip:padding-box;border-top:1px dotted #000;border-bottom:1px dotted #000;border-left:1px dotted #000;border-right:1px dotted #000;"></div>
<div class="t" style="left:1001.00px;width:120px;text-align:right;top:547px;font-size:12.5px;line-height:20px;font-weight:400;color:#000;;transform-origin:100% 0">3 293</div>
<div style="left:1122px;top:545px;width:76px;height:21px;box-sizing:border-box;background:#D9E1F2;background-clip:padding-box;border-top:1px dotted #000;border-bottom:1px dotted #000;border-left:1px dotted #000;border-right:1px dotted #000;"></div>
<div class="t" style="left:1076.00px;width:120px;text-align:right;top:547px;font-size:12.5px;line-height:20px;font-weight:400;color:#000;;transform-origin:100% 0">8 176</div>
<div style="left:1197px;top:545px;width:76px;height:21px;box-sizing:border-box;background:#D9E1F2;background-clip:padding-box;border-top:1px dotted #000;border-bottom:1px dotted #000;border-left:1px dotted #000;border-right:1px dotted #000;"></div>
<div class="t" style="left:1151.00px;width:120px;text-align:right;top:547px;font-size:12.5px;line-height:20px;font-weight:700;color:#000;;transform-origin:100% 0">64 992</div>
<div style="left:1284px;top:545px;width:76px;height:21px;box-sizing:border-box;background:#D9E1F2;background-clip:padding-box;border-top:1px dotted #000;border-bottom:1px dotted #000;border-left:1px dotted #000;border-right:1px dotted #000;"></div>
<div class="t" style="left:1238.00px;width:120px;text-align:right;top:547px;font-size:12.5px;line-height:20px;font-weight:700;color:#000;;transform-origin:100% 0">64 522</div>
<div style="left:1371px;top:545px;width:76px;height:21px;box-sizing:border-box;background:#D9E1F2;background-clip:padding-box;border-top:1px dotted #000;border-bottom:1px dotted #000;border-left:1px dotted #000;border-right:1px dotted #000;"></div>
<div class="t" style="left:1325.00px;width:120px;text-align:right;top:547px;font-size:12.5px;line-height:20px;font-weight:700;color:#000;;transform-origin:100% 0">24 448</div>
<div style="left:1458px;top:545px;width:76px;height:21px;box-sizing:border-box;background:#D9E1F2;background-clip:padding-box;border-top:1px dotted #000;border-bottom:1px dotted #000;border-left:1px dotted #000;border-right:1px dotted #000;"></div>
<div class="t" style="left:1412.00px;width:120px;text-align:right;top:547px;font-size:12.5px;line-height:20px;font-weight:700;color:#000;;transform-origin:100% 0">12 612</div>
<div style="left:1545px;top:545px;width:76px;height:21px;box-sizing:border-box;background:#D9E1F2;background-clip:padding-box;border-top:1px dotted #000;border-bottom:1px dotted #000;border-left:1px dotted #000;border-right:1px dotted #000;"></div>
<div class="t" style="left:1499.00px;width:120px;text-align:right;top:547px;font-size:12.5px;line-height:20px;font-weight:700;color:#000;;transform-origin:100% 0">17 235</div>
<div style="left:1632px;top:545px;width:76px;height:21px;box-sizing:border-box;background:#D9E1F2;background-clip:padding-box;border-top:1px dotted #000;border-bottom:1px dotted #000;border-left:1px dotted #000;border-right:1px dotted #000;"></div>
<div class="t" style="left:1586.00px;width:120px;text-align:right;top:547px;font-size:12.5px;line-height:20px;font-weight:700;color:#000;;transform-origin:100% 0">58 471</div>
<div style="left:1719px;top:545px;width:76px;height:21px;box-sizing:border-box;background:#FFF2CC;background-clip:padding-box;border-top:1px dotted #000;border-bottom:1px dotted #000;border-left:1px dotted #000;border-right:1px dotted #000;"></div>
<div class="t" style="left:1673.00px;width:120px;text-align:right;top:547px;font-size:12.5px;line-height:20px;font-weight:400;color:#000;;transform-origin:100% 0">11 896</div>
<div style="left:1794px;top:545px;width:76px;height:21px;box-sizing:border-box;background:#FFF2CC;background-clip:padding-box;border-top:1px dotted #000;border-bottom:1px dotted #000;border-left:1px dotted #000;border-right:1px dotted #000;"></div>
<div class="t" style="left:1748.00px;width:120px;text-align:right;top:547px;font-size:12.5px;line-height:20px;font-weight:400;color:#000;;transform-origin:100% 0">13 302</div>
<div style="left:1869px;top:545px;width:76px;height:21px;box-sizing:border-box;background:#FFF2CC;background-clip:padding-box;border-top:1px dotted #000;border-bottom:1px dotted #000;border-left:1px dotted #000;border-right:1px dotted #000;"></div>
<div style="left:13px;top:565px;width:273px;height:21px;box-sizing:border-box;border-top:1px dotted #000;border-bottom:1px dotted #000;border-left:1px dotted #000;border-right:1px dotted #000;"></div>
<div class="t" style="left:16.00px;top:567px;font-size:12.5px;line-height:20px;font-weight:400;color:#000;;transform:scaleX(1.0538);transform-origin:0 0">Godziny z absencją</div>
<div style="left:297px;top:565px;width:76px;height:21px;box-sizing:border-box;background:#D9E1F2;background-clip:padding-box;border-top:1px dotted #000;border-bottom:1px dotted #000;border-left:1px dotted #000;border-right:1px dotted #000;"></div>
<div class="t" style="left:251.00px;width:120px;text-align:right;top:567px;font-size:12.5px;line-height:20px;font-weight:400;color:#000;;transform-origin:100% 0">35 518</div>
<div style="left:372px;top:565px;width:76px;height:21px;box-sizing:border-box;background:#D9E1F2;background-clip:padding-box;border-top:1px dotted #000;border-bottom:1px dotted #000;border-left:1px dotted #000;border-right:1px dotted #000;"></div>
<div class="t" style="left:326.00px;width:120px;text-align:right;top:567px;font-size:12.5px;line-height:20px;font-weight:400;color:#000;;transform-origin:100% 0">39 336</div>
<div style="left:447px;top:565px;width:76px;height:21px;box-sizing:border-box;background:#D9E1F2;background-clip:padding-box;border-top:1px dotted #000;border-bottom:1px dotted #000;border-left:1px dotted #000;border-right:1px dotted #000;"></div>
<div class="t" style="left:401.00px;width:120px;text-align:right;top:567px;font-size:12.5px;line-height:20px;font-weight:400;color:#000;;transform-origin:100% 0">43 546</div>
<div style="left:522px;top:565px;width:76px;height:21px;box-sizing:border-box;background:#D9E1F2;background-clip:padding-box;border-top:1px dotted #000;border-bottom:1px dotted #000;border-left:1px dotted #000;border-right:1px dotted #000;"></div>
<div class="t" style="left:476.00px;width:120px;text-align:right;top:567px;font-size:12.5px;line-height:20px;font-weight:400;color:#000;;transform-origin:100% 0">37 662</div>
<div style="left:597px;top:565px;width:76px;height:21px;box-sizing:border-box;background:#D9E1F2;background-clip:padding-box;border-top:1px dotted #000;border-bottom:1px dotted #000;border-left:1px dotted #000;border-right:1px dotted #000;"></div>
<div class="t" style="left:551.00px;width:120px;text-align:right;top:567px;font-size:12.5px;line-height:20px;font-weight:400;color:#000;;transform-origin:100% 0">40 720</div>
<div style="left:672px;top:565px;width:76px;height:21px;box-sizing:border-box;background:#D9E1F2;background-clip:padding-box;border-top:1px dotted #000;border-bottom:1px dotted #000;border-left:1px dotted #000;border-right:1px dotted #000;"></div>
<div class="t" style="left:626.00px;width:120px;text-align:right;top:567px;font-size:12.5px;line-height:20px;font-weight:400;color:#000;;transform-origin:100% 0">42 311</div>
<div style="left:747px;top:565px;width:76px;height:21px;box-sizing:border-box;background:#D9E1F2;background-clip:padding-box;border-top:1px dotted #000;border-bottom:1px dotted #000;border-left:1px dotted #000;border-right:1px dotted #000;"></div>
<div class="t" style="left:701.00px;width:120px;text-align:right;top:567px;font-size:12.5px;line-height:20px;font-weight:400;color:#000;;transform-origin:100% 0">42 828</div>
<div style="left:822px;top:565px;width:76px;height:21px;box-sizing:border-box;background:#D9E1F2;background-clip:padding-box;border-top:1px dotted #000;border-bottom:1px dotted #000;border-left:1px dotted #000;border-right:1px dotted #000;"></div>
<div class="t" style="left:776.00px;width:120px;text-align:right;top:567px;font-size:12.5px;line-height:20px;font-weight:400;color:#000;;transform-origin:100% 0">40 352</div>
<div style="left:897px;top:565px;width:76px;height:21px;box-sizing:border-box;background:#D9E1F2;background-clip:padding-box;border-top:1px dotted #000;border-bottom:1px dotted #000;border-left:1px dotted #000;border-right:1px dotted #000;"></div>
<div class="t" style="left:851.00px;width:120px;text-align:right;top:567px;font-size:12.5px;line-height:20px;font-weight:400;color:#000;;transform-origin:100% 0">35 971</div>
<div style="left:972px;top:565px;width:76px;height:21px;box-sizing:border-box;background:#D9E1F2;background-clip:padding-box;border-top:1px dotted #000;border-bottom:1px dotted #000;border-left:1px dotted #000;border-right:1px dotted #000;"></div>
<div class="t" style="left:926.00px;width:120px;text-align:right;top:567px;font-size:12.5px;line-height:20px;font-weight:400;color:#000;;transform-origin:100% 0">35 711</div>
<div style="left:1047px;top:565px;width:76px;height:21px;box-sizing:border-box;background:#D9E1F2;background-clip:padding-box;border-top:1px dotted #000;border-bottom:1px dotted #000;border-left:1px dotted #000;border-right:1px dotted #000;"></div>
<div class="t" style="left:1001.00px;width:120px;text-align:right;top:567px;font-size:12.5px;line-height:20px;font-weight:400;color:#000;;transform-origin:100% 0">29 939</div>
<div style="left:1122px;top:565px;width:76px;height:21px;box-sizing:border-box;background:#D9E1F2;background-clip:padding-box;border-top:1px dotted #000;border-bottom:1px dotted #000;border-left:1px dotted #000;border-right:1px dotted #000;"></div>
<div class="t" style="left:1076.00px;width:120px;text-align:right;top:567px;font-size:12.5px;line-height:20px;font-weight:400;color:#000;;transform-origin:100% 0">26 808</div>
<div style="left:1197px;top:565px;width:76px;height:21px;box-sizing:border-box;background:#D9E1F2;background-clip:padding-box;border-top:1px dotted #000;border-bottom:1px dotted #000;border-left:1px dotted #000;border-right:1px dotted #000;"></div>
<div class="t" style="left:1151.00px;width:120px;text-align:right;top:567px;font-size:12.5px;line-height:20px;font-weight:700;color:#000;;transform-origin:100% 0">450 702</div>
<div style="left:1284px;top:565px;width:76px;height:21px;box-sizing:border-box;background:#D9E1F2;background-clip:padding-box;border-top:1px dotted #000;border-bottom:1px dotted #000;border-left:1px dotted #000;border-right:1px dotted #000;"></div>
<div class="t" style="left:1238.00px;width:120px;text-align:right;top:567px;font-size:12.5px;line-height:20px;font-weight:700;color:#000;;transform-origin:100% 0">447 857</div>
<div style="left:1371px;top:565px;width:76px;height:21px;box-sizing:border-box;background:#D9E1F2;background-clip:padding-box;border-top:1px dotted #000;border-bottom:1px dotted #000;border-left:1px dotted #000;border-right:1px dotted #000;"></div>
<div class="t" style="left:1325.00px;width:120px;text-align:right;top:567px;font-size:12.5px;line-height:20px;font-weight:700;color:#000;;transform-origin:100% 0">171 798</div>
<div style="left:1458px;top:565px;width:76px;height:21px;box-sizing:border-box;background:#D9E1F2;background-clip:padding-box;border-top:1px dotted #000;border-bottom:1px dotted #000;border-left:1px dotted #000;border-right:1px dotted #000;"></div>
<div class="t" style="left:1412.00px;width:120px;text-align:right;top:567px;font-size:12.5px;line-height:20px;font-weight:700;color:#000;;transform-origin:100% 0">92 960</div>
<div style="left:1545px;top:565px;width:76px;height:21px;box-sizing:border-box;background:#D9E1F2;background-clip:padding-box;border-top:1px dotted #000;border-bottom:1px dotted #000;border-left:1px dotted #000;border-right:1px dotted #000;"></div>
<div class="t" style="left:1499.00px;width:120px;text-align:right;top:567px;font-size:12.5px;line-height:20px;font-weight:700;color:#000;;transform-origin:100% 0">117 552</div>
<div style="left:1632px;top:565px;width:76px;height:21px;box-sizing:border-box;background:#D9E1F2;background-clip:padding-box;border-top:1px dotted #000;border-bottom:1px dotted #000;border-left:1px dotted #000;border-right:1px dotted #000;"></div>
<div class="t" style="left:1586.00px;width:120px;text-align:right;top:567px;font-size:12.5px;line-height:20px;font-weight:700;color:#000;;transform-origin:100% 0">403 668</div>
<div style="left:1719px;top:565px;width:76px;height:21px;box-sizing:border-box;background:#FFF2CC;background-clip:padding-box;border-top:1px dotted #000;border-bottom:1px dotted #000;border-left:1px dotted #000;border-right:1px dotted #000;"></div>
<div class="t" style="left:1673.00px;width:120px;text-align:right;top:567px;font-size:12.5px;line-height:20px;font-weight:400;color:#000;;transform-origin:100% 0">132 177</div>
<div style="left:1794px;top:565px;width:76px;height:21px;box-sizing:border-box;background:#FFF2CC;background-clip:padding-box;border-top:1px dotted #000;border-bottom:1px dotted #000;border-left:1px dotted #000;border-right:1px dotted #000;"></div>
<div class="t" style="left:1748.00px;width:120px;text-align:right;top:567px;font-size:12.5px;line-height:20px;font-weight:400;color:#000;;transform-origin:100% 0">147 799</div>
<div style="left:1869px;top:565px;width:76px;height:21px;box-sizing:border-box;background:#FFF2CC;background-clip:padding-box;border-top:1px dotted #000;border-bottom:1px dotted #000;border-left:1px dotted #000;border-right:1px dotted #000;"></div>
<div style="left:13px;top:585px;width:273px;height:21px;box-sizing:border-box;border-top:1px dotted #000;border-bottom:1px dotted #000;border-left:1px dotted #000;border-right:1px dotted #000;"></div>
<div class="t" style="left:16.00px;top:587px;font-size:12.5px;line-height:20px;font-weight:400;color:#000;;transform:scaleX(1.0670);transform-origin:0 0">Godziny ponad dostępny czas pracy</div>
<div style="left:297px;top:586px;width:901px;height:19px;background:#D9E1F2"></div>
<div class="t" style="left:251.00px;width:120px;text-align:right;top:587px;font-size:12.5px;line-height:20px;font-weight:400;color:#000;;transform-origin:100% 0">3 487</div>
<div class="t" style="left:326.00px;width:120px;text-align:right;top:587px;font-size:12.5px;line-height:20px;font-weight:400;color:#000;;transform-origin:100% 0">8 717</div>
<div class="t" style="left:401.00px;width:120px;text-align:right;top:587px;font-size:12.5px;line-height:20px;font-weight:400;color:#000;;transform-origin:100% 0">8 345</div>
<div class="t" style="left:476.00px;width:120px;text-align:right;top:587px;font-size:12.5px;line-height:20px;font-weight:400;color:#000;;transform-origin:100% 0">8 584</div>
<div class="t" style="left:551.00px;width:120px;text-align:right;top:587px;font-size:12.5px;line-height:20px;font-weight:400;color:#000;;transform-origin:100% 0">8 589</div>
<div class="t" style="left:626.00px;width:120px;text-align:right;top:587px;font-size:12.5px;line-height:20px;font-weight:400;color:#000;;transform-origin:100% 0">10 436</div>
<div class="t" style="left:701.00px;width:120px;text-align:right;top:587px;font-size:12.5px;line-height:20px;font-weight:400;color:#000;;transform-origin:100% 0">11 040</div>
<div class="t" style="left:776.00px;width:120px;text-align:right;top:587px;font-size:12.5px;line-height:20px;font-weight:400;color:#000;;transform-origin:100% 0">6 594</div>
<div class="t" style="left:851.00px;width:120px;text-align:right;top:587px;font-size:12.5px;line-height:20px;font-weight:400;color:#000;;transform-origin:100% 0">4 134</div>
<div class="t" style="left:926.00px;width:120px;text-align:right;top:587px;font-size:12.5px;line-height:20px;font-weight:400;color:#000;;transform-origin:100% 0">1 725</div>
<div style="left:13px;top:605px;width:273px;height:21px;box-sizing:border-box;border-top:1px dotted #000;border-bottom:1px dotted #000;border-left:1px dotted #000;border-right:1px dotted #000;"></div>
<div class="t" style="left:16.00px;top:607px;font-size:12.5px;line-height:20px;font-weight:700;color:#000;;transform:scaleX(1.0455);transform-origin:0 0">Stopa NMP</div>
<div style="left:297px;top:605px;width:76px;height:21px;box-sizing:border-box;background:#DDEBF7;background-clip:padding-box;border-top:1px dotted #000;border-bottom:1px dotted #000;border-left:1px dotted #000;border-right:1px dotted #000;"></div>
<div class="t" style="left:251.00px;width:120px;text-align:right;top:607px;font-size:12.5px;line-height:20px;font-weight:700;color:#000;;transform-origin:100% 0">5,4%</div>
<div style="left:372px;top:605px;width:76px;height:21px;box-sizing:border-box;background:#DDEBF7;background-clip:padding-box;border-top:1px dotted #000;border-bottom:1px dotted #000;border-left:1px dotted #000;border-right:1px dotted #000;"></div>
<div class="t" style="left:326.00px;width:120px;text-align:right;top:607px;font-size:12.5px;line-height:20px;font-weight:700;color:#000;;transform-origin:100% 0">0,0%</div>
<div style="left:447px;top:605px;width:76px;height:21px;box-sizing:border-box;background:#DDEBF7;background-clip:padding-box;border-top:1px dotted #000;border-bottom:1px dotted #000;border-left:1px dotted #000;border-right:1px dotted #000;"></div>
<div class="t" style="left:401.00px;width:120px;text-align:right;top:607px;font-size:12.5px;line-height:20px;font-weight:700;color:#000;;transform-origin:100% 0">0,0%</div>
<div style="left:522px;top:605px;width:76px;height:21px;box-sizing:border-box;background:#DDEBF7;background-clip:padding-box;border-top:1px dotted #000;border-bottom:1px dotted #000;border-left:1px dotted #000;border-right:1px dotted #000;"></div>
<div class="t" style="left:476.00px;width:120px;text-align:right;top:607px;font-size:12.5px;line-height:20px;font-weight:700;color:#000;;transform-origin:100% 0">0,0%</div>
<div style="left:597px;top:605px;width:76px;height:21px;box-sizing:border-box;background:#DDEBF7;background-clip:padding-box;border-top:1px dotted #000;border-bottom:1px dotted #000;border-left:1px dotted #000;border-right:1px dotted #000;"></div>
<div class="t" style="left:551.00px;width:120px;text-align:right;top:607px;font-size:12.5px;line-height:20px;font-weight:700;color:#000;;transform-origin:100% 0">0,0%</div>
<div style="left:672px;top:605px;width:76px;height:21px;box-sizing:border-box;background:#DDEBF7;background-clip:padding-box;border-top:1px dotted #000;border-bottom:1px dotted #000;border-left:1px dotted #000;border-right:1px dotted #000;"></div>
<div class="t" style="left:626.00px;width:120px;text-align:right;top:607px;font-size:12.5px;line-height:20px;font-weight:700;color:#000;;transform-origin:100% 0">0,0%</div>
<div style="left:747px;top:605px;width:76px;height:21px;box-sizing:border-box;background:#DDEBF7;background-clip:padding-box;border-top:1px dotted #000;border-bottom:1px dotted #000;border-left:1px dotted #000;border-right:1px dotted #000;"></div>
<div class="t" style="left:701.00px;width:120px;text-align:right;top:607px;font-size:12.5px;line-height:20px;font-weight:700;color:#000;;transform-origin:100% 0">0,0%</div>
<div style="left:822px;top:605px;width:76px;height:21px;box-sizing:border-box;background:#DDEBF7;background-clip:padding-box;border-top:1px dotted #000;border-bottom:1px dotted #000;border-left:1px dotted #000;border-right:1px dotted #000;"></div>
<div class="t" style="left:776.00px;width:120px;text-align:right;top:607px;font-size:12.5px;line-height:20px;font-weight:700;color:#000;;transform-origin:100% 0">31,0%</div>
<div style="left:897px;top:605px;width:76px;height:21px;box-sizing:border-box;background:#DDEBF7;background-clip:padding-box;border-top:1px dotted #000;border-bottom:1px dotted #000;border-left:1px dotted #000;border-right:1px dotted #000;"></div>
<div class="t" style="left:851.00px;width:120px;text-align:right;top:607px;font-size:12.5px;line-height:20px;font-weight:700;color:#000;;transform-origin:100% 0">8,4%</div>
<div style="left:972px;top:605px;width:76px;height:21px;box-sizing:border-box;background:#DDEBF7;background-clip:padding-box;border-top:1px dotted #000;border-bottom:1px dotted #000;border-left:1px dotted #000;border-right:1px dotted #000;"></div>
<div class="t" style="left:926.00px;width:120px;text-align:right;top:607px;font-size:12.5px;line-height:20px;font-weight:700;color:#000;;transform-origin:100% 0">14,8%</div>
<div style="left:1047px;top:605px;width:76px;height:21px;box-sizing:border-box;background:#DDEBF7;background-clip:padding-box;border-top:1px dotted #000;border-bottom:1px dotted #000;border-left:1px dotted #000;border-right:1px dotted #000;"></div>
<div class="t" style="left:1001.00px;width:120px;text-align:right;top:607px;font-size:12.5px;line-height:20px;font-weight:700;color:#000;;transform-origin:100% 0">16,6%</div>
<div style="left:1122px;top:605px;width:76px;height:21px;box-sizing:border-box;background:#DDEBF7;background-clip:padding-box;border-top:1px dotted #000;border-bottom:1px dotted #000;border-left:1px dotted #000;border-right:1px dotted #000;"></div>
<div class="t" style="left:1076.00px;width:120px;text-align:right;top:607px;font-size:12.5px;line-height:20px;font-weight:700;color:#000;;transform-origin:100% 0">34,8%</div>
<div style="left:1197px;top:605px;width:76px;height:21px;box-sizing:border-box;background:#D9E1F2;background-clip:padding-box;border-top:1px dotted #000;border-bottom:1px dotted #000;border-left:1px dotted #000;border-right:1px dotted #000;"></div>
<div class="t" style="left:1151.00px;width:120px;text-align:right;top:607px;font-size:12.5px;line-height:20px;font-weight:400;color:#000;;transform-origin:100% 0">9,2%</div>
<div style="left:1284px;top:605px;width:76px;height:21px;box-sizing:border-box;background:#D9E1F2;background-clip:padding-box;border-top:1px dotted #000;border-bottom:1px dotted #000;border-left:1px dotted #000;border-right:1px dotted #000;"></div>
<div class="t" style="left:1238.00px;width:120px;text-align:right;top:607px;font-size:12.5px;line-height:20px;font-weight:400;color:#000;;transform-origin:100% 0">7,6%</div>
<div style="left:1371px;top:605px;width:76px;height:21px;box-sizing:border-box;background:#D9E1F2;background-clip:padding-box;border-top:1px dotted #000;border-bottom:1px dotted #000;border-left:1px dotted #000;border-right:1px dotted #000;"></div>
<div class="t" style="left:1325.00px;width:120px;text-align:right;top:607px;font-size:12.5px;line-height:20px;font-weight:400;color:#000;;transform-origin:100% 0">11,4%</div>
<div style="left:1458px;top:605px;width:76px;height:21px;box-sizing:border-box;background:#D9E1F2;background-clip:padding-box;border-top:1px dotted #000;border-bottom:1px dotted #000;border-left:1px dotted #000;border-right:1px dotted #000;"></div>
<div class="t" style="left:1412.00px;width:120px;text-align:right;top:607px;font-size:12.5px;line-height:20px;font-weight:400;color:#000;;transform-origin:100% 0">19,2%</div>
<div style="left:1545px;top:605px;width:76px;height:21px;box-sizing:border-box;background:#D9E1F2;background-clip:padding-box;border-top:1px dotted #000;border-bottom:1px dotted #000;border-left:1px dotted #000;border-right:1px dotted #000;"></div>
<div class="t" style="left:1499.00px;width:120px;text-align:right;top:607px;font-size:12.5px;line-height:20px;font-weight:400;color:#000;;transform-origin:100% 0">11,2%</div>
<div style="left:1632px;top:605px;width:76px;height:21px;box-sizing:border-box;background:#D9E1F2;background-clip:padding-box;border-top:1px dotted #000;border-bottom:1px dotted #000;border-left:1px dotted #000;border-right:1px dotted #000;"></div>
<div class="t" style="left:1586.00px;width:120px;text-align:right;top:607px;font-size:12.5px;line-height:20px;font-weight:400;color:#000;;transform-origin:100% 0">14,9%</div>
<div style="left:1719px;top:605px;width:76px;height:21px;box-sizing:border-box;background:#FFF2CC;background-clip:padding-box;border-top:1px dotted #000;border-bottom:1px dotted #000;border-left:1px dotted #000;border-right:1px dotted #000;"></div>
<div style="left:1794px;top:605px;width:76px;height:21px;box-sizing:border-box;background:#FFF2CC;background-clip:padding-box;border-top:1px dotted #000;border-bottom:1px dotted #000;border-left:1px dotted #000;border-right:1px dotted #000;"></div>
<div style="left:1869px;top:605px;width:76px;height:21px;box-sizing:border-box;background:#FFF2CC;background-clip:padding-box;border-top:1px dotted #000;border-bottom:1px dotted #000;border-left:1px dotted #000;border-right:1px dotted #000;"></div>
<div style="left:13px;top:631px;width:273px;height:21px;box-sizing:border-box;border-top:1px dotted #000;border-bottom:1px dotted #000;border-left:1px dotted #000;border-right:1px dotted #000;"></div>
<div class="t" style="left:16.00px;top:633px;font-size:12.5px;line-height:20px;font-weight:400;color:#000;;transform:scaleX(1.0109);transform-origin:0 0">STAWKA</div>
<div style="left:297px;top:631px;width:76px;height:21px;box-sizing:border-box;background:#D9E1F2;background-clip:padding-box;border-top:1px dotted #000;border-bottom:1px dotted #000;border-left:1px dotted #000;border-right:1px dotted #000;"></div>
<div class="t" style="left:251.00px;width:120px;text-align:right;top:633px;font-size:12.5px;line-height:20px;font-weight:400;color:#000;;transform-origin:100% 0">33,00</div>
<div style="left:372px;top:631px;width:76px;height:21px;box-sizing:border-box;background:#D9E1F2;background-clip:padding-box;border-top:1px dotted #000;border-bottom:1px dotted #000;border-left:1px dotted #000;border-right:1px dotted #000;"></div>
<div class="t" style="left:326.00px;width:120px;text-align:right;top:633px;font-size:12.5px;line-height:20px;font-weight:400;color:#000;;transform-origin:100% 0">33,00</div>
<div style="left:447px;top:631px;width:76px;height:21px;box-sizing:border-box;background:#D9E1F2;background-clip:padding-box;border-top:1px dotted #000;border-bottom:1px dotted #000;border-left:1px dotted #000;border-right:1px dotted #000;"></div>
<div class="t" style="left:401.00px;width:120px;text-align:right;top:633px;font-size:12.5px;line-height:20px;font-weight:400;color:#000;;transform-origin:100% 0">33,00</div>
<div style="left:522px;top:631px;width:76px;height:21px;box-sizing:border-box;background:#D9E1F2;background-clip:padding-box;border-top:1px dotted #000;border-bottom:1px dotted #000;border-left:1px dotted #000;border-right:1px dotted #000;"></div>
<div class="t" style="left:476.00px;width:120px;text-align:right;top:633px;font-size:12.5px;line-height:20px;font-weight:400;color:#000;;transform-origin:100% 0">33,00</div>
<div style="left:597px;top:631px;width:76px;height:21px;box-sizing:border-box;background:#D9E1F2;background-clip:padding-box;border-top:1px dotted #000;border-bottom:1px dotted #000;border-left:1px dotted #000;border-right:1px dotted #000;"></div>
<div class="t" style="left:551.00px;width:120px;text-align:right;top:633px;font-size:12.5px;line-height:20px;font-weight:400;color:#000;;transform-origin:100% 0">33,00</div>
<div style="left:672px;top:631px;width:76px;height:21px;box-sizing:border-box;background:#D9E1F2;background-clip:padding-box;border-top:1px dotted #000;border-bottom:1px dotted #000;border-left:1px dotted #000;border-right:1px dotted #000;"></div>
<div class="t" style="left:626.00px;width:120px;text-align:right;top:633px;font-size:12.5px;line-height:20px;font-weight:400;color:#000;;transform-origin:100% 0">33,00</div>
<div style="left:747px;top:631px;width:76px;height:21px;box-sizing:border-box;background:#D9E1F2;background-clip:padding-box;border-top:1px dotted #000;border-bottom:1px dotted #000;border-left:1px dotted #000;border-right:1px dotted #000;"></div>
<div class="t" style="left:701.00px;width:120px;text-align:right;top:633px;font-size:12.5px;line-height:20px;font-weight:400;color:#000;;transform-origin:100% 0">33,00</div>
<div style="left:822px;top:631px;width:76px;height:21px;box-sizing:border-box;background:#D9E1F2;background-clip:padding-box;border-top:1px dotted #000;border-bottom:1px dotted #000;border-left:1px dotted #000;border-right:1px dotted #000;"></div>
<div class="t" style="left:776.00px;width:120px;text-align:right;top:633px;font-size:12.5px;line-height:20px;font-weight:400;color:#000;;transform-origin:100% 0">33,00</div>
<div style="left:897px;top:631px;width:76px;height:21px;box-sizing:border-box;background:#D9E1F2;background-clip:padding-box;border-top:1px dotted #000;border-bottom:1px dotted #000;border-left:1px dotted #000;border-right:1px dotted #000;"></div>
<div class="t" style="left:851.00px;width:120px;text-align:right;top:633px;font-size:12.5px;line-height:20px;font-weight:400;color:#000;;transform-origin:100% 0">33,00</div>
<div style="left:972px;top:631px;width:76px;height:21px;box-sizing:border-box;background:#D9E1F2;background-clip:padding-box;border-top:1px dotted #000;border-bottom:1px dotted #000;border-left:1px dotted #000;border-right:1px dotted #000;"></div>
<div class="t" style="left:926.00px;width:120px;text-align:right;top:633px;font-size:12.5px;line-height:20px;font-weight:400;color:#000;;transform-origin:100% 0">33,00</div>
<div style="left:1047px;top:631px;width:76px;height:21px;box-sizing:border-box;background:#D9E1F2;background-clip:padding-box;border-top:1px dotted #000;border-bottom:1px dotted #000;border-left:1px dotted #000;border-right:1px dotted #000;"></div>
<div class="t" style="left:1001.00px;width:120px;text-align:right;top:633px;font-size:12.5px;line-height:20px;font-weight:400;color:#000;;transform-origin:100% 0">33,00</div>
<div style="left:1122px;top:631px;width:76px;height:21px;box-sizing:border-box;background:#D9E1F2;background-clip:padding-box;border-top:1px dotted #000;border-bottom:1px dotted #000;border-left:1px dotted #000;border-right:1px dotted #000;"></div>
<div class="t" style="left:1076.00px;width:120px;text-align:right;top:633px;font-size:12.5px;line-height:20px;font-weight:400;color:#000;;transform-origin:100% 0">33,00</div>
<div style="left:1197px;top:631px;width:76px;height:21px;box-sizing:border-box;background:#D9E1F2;background-clip:padding-box;border-top:1px dotted #000;border-bottom:1px dotted #000;border-left:1px dotted #000;border-right:1px dotted #000;"></div>
<div class="t" style="left:1151.00px;width:120px;text-align:right;top:633px;font-size:12.5px;line-height:20px;font-weight:400;color:#000;;transform-origin:100% 0">33,00</div>
<div style="left:1284px;top:631px;width:76px;height:21px;box-sizing:border-box;background:#D9E1F2;background-clip:padding-box;border-top:1px dotted #000;border-bottom:1px dotted #000;border-left:1px dotted #000;border-right:1px dotted #000;"></div>
<div class="t" style="left:1238.00px;width:120px;text-align:right;top:633px;font-size:12.5px;line-height:20px;font-weight:400;color:#000;;transform-origin:100% 0">33,0</div>
<div style="left:1371px;top:631px;width:76px;height:21px;box-sizing:border-box;background:#D9E1F2;background-clip:padding-box;border-top:1px dotted #000;border-bottom:1px dotted #000;border-left:1px dotted #000;border-right:1px dotted #000;"></div>
<div class="t" style="left:1325.00px;width:120px;text-align:right;top:633px;font-size:12.5px;line-height:20px;font-weight:400;color:#000;;transform-origin:100% 0">33,0</div>
<div style="left:1458px;top:631px;width:76px;height:21px;box-sizing:border-box;background:#D9E1F2;background-clip:padding-box;border-top:1px dotted #000;border-bottom:1px dotted #000;border-left:1px dotted #000;border-right:1px dotted #000;"></div>
<div class="t" style="left:1412.00px;width:120px;text-align:right;top:633px;font-size:12.5px;line-height:20px;font-weight:400;color:#000;;transform-origin:100% 0">33,0</div>
<div style="left:1545px;top:631px;width:76px;height:21px;box-sizing:border-box;background:#D9E1F2;background-clip:padding-box;border-top:1px dotted #000;border-bottom:1px dotted #000;border-left:1px dotted #000;border-right:1px dotted #000;"></div>
<div class="t" style="left:1499.00px;width:120px;text-align:right;top:633px;font-size:12.5px;line-height:20px;font-weight:400;color:#000;;transform-origin:100% 0">33,0</div>
<div style="left:1632px;top:631px;width:76px;height:21px;box-sizing:border-box;background:#D9E1F2;background-clip:padding-box;border-top:1px dotted #000;border-bottom:1px dotted #000;border-left:1px dotted #000;border-right:1px dotted #000;"></div>
<div class="t" style="left:1586.00px;width:120px;text-align:right;top:633px;font-size:12.5px;line-height:20px;font-weight:400;color:#000;;transform-origin:100% 0">33,0</div>
<div style="left:1719px;top:631px;width:76px;height:21px;box-sizing:border-box;background:#FFF2CC;background-clip:padding-box;border-top:1px dotted #000;border-bottom:1px dotted #000;border-left:1px dotted #000;border-right:1px dotted #000;"></div>
<div class="t" style="left:1673.00px;width:120px;text-align:right;top:633px;font-size:12.5px;line-height:20px;font-weight:400;color:#000;;transform-origin:100% 0">33,00</div>
<div style="left:1794px;top:631px;width:76px;height:21px;box-sizing:border-box;background:#FFF2CC;background-clip:padding-box;border-top:1px dotted #000;border-bottom:1px dotted #000;border-left:1px dotted #000;border-right:1px dotted #000;"></div>
<div class="t" style="left:1748.00px;width:120px;text-align:right;top:633px;font-size:12.5px;line-height:20px;font-weight:400;color:#000;;transform-origin:100% 0">33,00</div>
<div style="left:1869px;top:631px;width:76px;height:21px;box-sizing:border-box;background:#FFF2CC;background-clip:padding-box;border-top:1px dotted #000;border-bottom:1px dotted #000;border-left:1px dotted #000;border-right:1px dotted #000;"></div>
<div style="left:13px;top:651px;width:273px;height:21px;box-sizing:border-box;border-top:1px dotted #000;border-bottom:1px dotted #000;border-left:1px dotted #000;border-right:1px dotted #000;"></div>
<div class="t" style="left:16.00px;top:653px;font-size:12.5px;line-height:20px;font-weight:400;color:#000;;transform:scaleX(0.9775);transform-origin:0 0">TOTAL KOSZT WYN.</div>
<div style="left:297px;top:651px;width:76px;height:21px;box-sizing:border-box;background:#D9E1F2;background-clip:padding-box;border-top:1px dotted #000;border-bottom:1px dotted #000;border-left:1px dotted #000;border-right:1px dotted #000;"></div>
<div class="t" style="left:251.00px;width:120px;text-align:right;top:653px;font-size:12.5px;line-height:20px;font-weight:400;color:#000;;transform-origin:100% 0">713 095</div>
<div style="left:372px;top:651px;width:76px;height:21px;box-sizing:border-box;background:#D9E1F2;background-clip:padding-box;border-top:1px dotted #000;border-bottom:1px dotted #000;border-left:1px dotted #000;border-right:1px dotted #000;"></div>
<div class="t" style="left:326.00px;width:120px;text-align:right;top:653px;font-size:12.5px;line-height:20px;font-weight:400;color:#000;;transform-origin:100% 0">789 759</div>
<div style="left:447px;top:651px;width:76px;height:21px;box-sizing:border-box;background:#D9E1F2;background-clip:padding-box;border-top:1px dotted #000;border-bottom:1px dotted #000;border-left:1px dotted #000;border-right:1px dotted #000;"></div>
<div class="t" style="left:401.00px;width:120px;text-align:right;top:653px;font-size:12.5px;line-height:20px;font-weight:400;color:#000;;transform-origin:100% 0">874 285</div>
<div style="left:522px;top:651px;width:76px;height:21px;box-sizing:border-box;background:#D9E1F2;background-clip:padding-box;border-top:1px dotted #000;border-bottom:1px dotted #000;border-left:1px dotted #000;border-right:1px dotted #000;"></div>
<div class="t" style="left:476.00px;width:120px;text-align:right;top:653px;font-size:12.5px;line-height:20px;font-weight:400;color:#000;;transform-origin:100% 0">756 145</div>
<div style="left:597px;top:651px;width:76px;height:21px;box-sizing:border-box;background:#D9E1F2;background-clip:padding-box;border-top:1px dotted #000;border-bottom:1px dotted #000;border-left:1px dotted #000;border-right:1px dotted #000;"></div>
<div class="t" style="left:551.00px;width:120px;text-align:right;top:653px;font-size:12.5px;line-height:20px;font-weight:400;color:#000;;transform-origin:100% 0">817 540</div>
<div style="left:672px;top:651px;width:76px;height:21px;box-sizing:border-box;background:#D9E1F2;background-clip:padding-box;border-top:1px dotted #000;border-bottom:1px dotted #000;border-left:1px dotted #000;border-right:1px dotted #000;"></div>
<div class="t" style="left:626.00px;width:120px;text-align:right;top:653px;font-size:12.5px;line-height:20px;font-weight:400;color:#000;;transform-origin:100% 0">849 486</div>
<div style="left:747px;top:651px;width:76px;height:21px;box-sizing:border-box;background:#D9E1F2;background-clip:padding-box;border-top:1px dotted #000;border-bottom:1px dotted #000;border-left:1px dotted #000;border-right:1px dotted #000;"></div>
<div class="t" style="left:701.00px;width:120px;text-align:right;top:653px;font-size:12.5px;line-height:20px;font-weight:400;color:#000;;transform-origin:100% 0">859 871</div>
<div style="left:822px;top:651px;width:76px;height:21px;box-sizing:border-box;background:#D9E1F2;background-clip:padding-box;border-top:1px dotted #000;border-bottom:1px dotted #000;border-left:1px dotted #000;border-right:1px dotted #000;"></div>
<div class="t" style="left:776.00px;width:120px;text-align:right;top:653px;font-size:12.5px;line-height:20px;font-weight:400;color:#000;;transform-origin:100% 0">810 156</div>
<div style="left:897px;top:651px;width:76px;height:21px;box-sizing:border-box;background:#D9E1F2;background-clip:padding-box;border-top:1px dotted #000;border-bottom:1px dotted #000;border-left:1px dotted #000;border-right:1px dotted #000;"></div>
<div class="t" style="left:851.00px;width:120px;text-align:right;top:653px;font-size:12.5px;line-height:20px;font-weight:400;color:#000;;transform-origin:100% 0">722 189</div>
<div style="left:972px;top:651px;width:76px;height:21px;box-sizing:border-box;background:#D9E1F2;background-clip:padding-box;border-top:1px dotted #000;border-bottom:1px dotted #000;border-left:1px dotted #000;border-right:1px dotted #000;"></div>
<div class="t" style="left:926.00px;width:120px;text-align:right;top:653px;font-size:12.5px;line-height:20px;font-weight:400;color:#000;;transform-origin:100% 0">716 982</div>
<div style="left:1047px;top:651px;width:76px;height:21px;box-sizing:border-box;background:#D9E1F2;background-clip:padding-box;border-top:1px dotted #000;border-bottom:1px dotted #000;border-left:1px dotted #000;border-right:1px dotted #000;"></div>
<div class="t" style="left:1001.00px;width:120px;text-align:right;top:653px;font-size:12.5px;line-height:20px;font-weight:400;color:#000;;transform-origin:100% 0">601 090</div>
<div style="left:1122px;top:651px;width:76px;height:21px;box-sizing:border-box;background:#D9E1F2;background-clip:padding-box;border-top:1px dotted #000;border-bottom:1px dotted #000;border-left:1px dotted #000;border-right:1px dotted #000;"></div>
<div class="t" style="left:1076.00px;width:120px;text-align:right;top:653px;font-size:12.5px;line-height:20px;font-weight:400;color:#000;;transform-origin:100% 0">538 230</div>
<div style="left:1197px;top:651px;width:76px;height:21px;box-sizing:border-box;background:#D9E1F2;background-clip:padding-box;border-top:1px dotted #000;border-bottom:1px dotted #000;border-left:1px dotted #000;border-right:1px dotted #000;"></div>
<div class="t" style="left:1151.00px;width:120px;text-align:right;top:653px;font-size:12.5px;line-height:20px;font-weight:700;color:#000;;transform-origin:100% 0">9 048 828</div>
<div style="left:1284px;top:651px;width:76px;height:21px;box-sizing:border-box;background:#D9E1F2;background-clip:padding-box;border-top:1px dotted #000;border-bottom:1px dotted #000;border-left:1px dotted #000;border-right:1px dotted #000;"></div>
<div class="t" style="left:1238.00px;width:120px;text-align:right;top:653px;font-size:12.5px;line-height:20px;font-weight:700;color:#000;;transform-origin:100% 0">352 486</div>
<div style="left:1371px;top:651px;width:76px;height:21px;box-sizing:border-box;background:#D9E1F2;background-clip:padding-box;border-top:1px dotted #000;border-bottom:1px dotted #000;border-left:1px dotted #000;border-right:1px dotted #000;"></div>
<div class="t" style="left:1325.00px;width:120px;text-align:right;top:653px;font-size:12.5px;line-height:20px;font-weight:700;color:#000;;transform-origin:100% 0">135 214</div>
<div style="left:1458px;top:651px;width:76px;height:21px;box-sizing:border-box;background:#D9E1F2;background-clip:padding-box;border-top:1px dotted #000;border-bottom:1px dotted #000;border-left:1px dotted #000;border-right:1px dotted #000;"></div>
<div class="t" style="left:1412.00px;width:120px;text-align:right;top:653px;font-size:12.5px;line-height:20px;font-weight:700;color:#000;;transform-origin:100% 0">73 164</div>
<div style="left:1545px;top:651px;width:76px;height:21px;box-sizing:border-box;background:#D9E1F2;background-clip:padding-box;border-top:1px dotted #000;border-bottom:1px dotted #000;border-left:1px dotted #000;border-right:1px dotted #000;"></div>
<div class="t" style="left:1499.00px;width:120px;text-align:right;top:653px;font-size:12.5px;line-height:20px;font-weight:700;color:#000;;transform-origin:100% 0">92 519</div>
<div style="left:1632px;top:651px;width:76px;height:21px;box-sizing:border-box;background:#D9E1F2;background-clip:padding-box;border-top:1px dotted #000;border-bottom:1px dotted #000;border-left:1px dotted #000;border-right:1px dotted #000;"></div>
<div class="t" style="left:1586.00px;width:120px;text-align:right;top:653px;font-size:12.5px;line-height:20px;font-weight:700;color:#000;;transform-origin:100% 0">317 707</div>
<div class="t" style="left:1162.00px;width:120px;text-align:right;top:653px;font-size:12.5px;line-height:20px;font-weight:400;color:#000;;transform-origin:100% 0">0</div>
<div class="t" style="left:1249.00px;width:120px;text-align:right;top:653px;font-size:12.5px;line-height:20px;font-weight:400;color:#000;;transform-origin:100% 0">0</div>
<div class="t" style="left:1336.00px;width:120px;text-align:right;top:653px;font-size:12.5px;line-height:20px;font-weight:400;color:#000;;transform-origin:100% 0">0</div>
<div class="t" style="left:1423.00px;width:120px;text-align:right;top:653px;font-size:12.5px;line-height:20px;font-weight:400;color:#000;;transform-origin:100% 0">0</div>
<div class="t" style="left:1510.00px;width:120px;text-align:right;top:653px;font-size:12.5px;line-height:20px;font-weight:400;color:#000;;transform-origin:100% 0">0</div>
<div class="t" style="left:1597.00px;width:120px;text-align:right;top:653px;font-size:12.5px;line-height:20px;font-weight:400;color:#000;;transform-origin:100% 0">0</div>
<div style="left:1719px;top:651px;width:76px;height:21px;box-sizing:border-box;background:#FFC000;background-clip:padding-box;border-top:1px dotted #000;border-bottom:1px dotted #000;border-left:1px dotted #000;border-right:1px dotted #000;"></div>
<div class="t" style="left:1673.00px;width:120px;text-align:right;top:653px;font-size:12.5px;line-height:20px;font-weight:400;color:#000;;transform-origin:100% 0">290 004</div>
<div style="left:1794px;top:651px;width:76px;height:21px;box-sizing:border-box;background:#FFC000;background-clip:padding-box;border-top:1px dotted #000;border-bottom:1px dotted #000;border-left:1px dotted #000;border-right:1px dotted #000;"></div>
<div class="t" style="left:1748.00px;width:120px;text-align:right;top:653px;font-size:12.5px;line-height:20px;font-weight:400;color:#000;;transform-origin:100% 0">322 293</div>
<div style="left:1869px;top:651px;width:76px;height:21px;box-sizing:border-box;background:#FFC000;background-clip:padding-box;border-top:1px dotted #000;border-bottom:1px dotted #000;border-left:1px dotted #000;border-right:1px dotted #000;"></div>
<div style="left:13px;top:671px;width:273px;height:21px;box-sizing:border-box;border-top:1px dotted #000;border-bottom:1px dotted #000;border-left:1px dotted #000;border-right:1px dotted #000;"></div>
<div class="t" style="left:25.00px;top:673px;font-size:12.5px;line-height:20px;font-weight:400;color:#000;;transform:scaleX(0.9209);transform-origin:0 0">RB</div>
<div style="left:297px;top:671px;width:76px;height:21px;box-sizing:border-box;background:#D9E1F2;background-clip:padding-box;border-top:1px dotted #000;border-bottom:1px dotted #000;border-left:1px dotted #000;border-right:1px dotted #000;"></div>
<div class="t" style="left:251.00px;width:120px;text-align:right;top:673px;font-size:12.5px;line-height:20px;font-weight:400;color:#000;;transform-origin:100% 0">779 948</div>
<div style="left:372px;top:671px;width:76px;height:21px;box-sizing:border-box;background:#D9E1F2;background-clip:padding-box;border-top:1px dotted #000;border-bottom:1px dotted #000;border-left:1px dotted #000;border-right:1px dotted #000;"></div>
<div class="t" style="left:326.00px;width:120px;text-align:right;top:673px;font-size:12.5px;line-height:20px;font-weight:400;color:#000;;transform-origin:100% 0">863 798</div>
<div style="left:447px;top:671px;width:76px;height:21px;box-sizing:border-box;background:#D9E1F2;background-clip:padding-box;border-top:1px dotted #000;border-bottom:1px dotted #000;border-left:1px dotted #000;border-right:1px dotted #000;"></div>
<div class="t" style="left:401.00px;width:120px;text-align:right;top:673px;font-size:12.5px;line-height:20px;font-weight:400;color:#000;;transform-origin:100% 0">956 249</div>
<div style="left:522px;top:671px;width:76px;height:21px;box-sizing:border-box;background:#D9E1F2;background-clip:padding-box;border-top:1px dotted #000;border-bottom:1px dotted #000;border-left:1px dotted #000;border-right:1px dotted #000;"></div>
<div class="t" style="left:476.00px;width:120px;text-align:right;top:673px;font-size:12.5px;line-height:20px;font-weight:400;color:#000;;transform-origin:100% 0">827 034</div>
<div style="left:597px;top:671px;width:76px;height:21px;box-sizing:border-box;background:#D9E1F2;background-clip:padding-box;border-top:1px dotted #000;border-bottom:1px dotted #000;border-left:1px dotted #000;border-right:1px dotted #000;"></div>
<div class="t" style="left:551.00px;width:120px;text-align:right;top:673px;font-size:12.5px;line-height:20px;font-weight:400;color:#000;;transform-origin:100% 0">894 184</div>
<div style="left:672px;top:671px;width:76px;height:21px;box-sizing:border-box;background:#D9E1F2;background-clip:padding-box;border-top:1px dotted #000;border-bottom:1px dotted #000;border-left:1px dotted #000;border-right:1px dotted #000;"></div>
<div class="t" style="left:626.00px;width:120px;text-align:right;top:673px;font-size:12.5px;line-height:20px;font-weight:400;color:#000;;transform-origin:100% 0">888 285</div>
<div style="left:747px;top:671px;width:76px;height:21px;box-sizing:border-box;background:#D9E1F2;background-clip:padding-box;border-top:1px dotted #000;border-bottom:1px dotted #000;border-left:1px dotted #000;border-right:1px dotted #000;"></div>
<div class="t" style="left:701.00px;width:120px;text-align:right;top:673px;font-size:12.5px;line-height:20px;font-weight:400;color:#000;;transform-origin:100% 0">909 479</div>
<div style="left:822px;top:671px;width:76px;height:21px;box-sizing:border-box;background:#D9E1F2;background-clip:padding-box;border-top:1px dotted #000;border-bottom:1px dotted #000;border-left:1px dotted #000;border-right:1px dotted #000;"></div>
<div class="t" style="left:776.00px;width:120px;text-align:right;top:673px;font-size:12.5px;line-height:20px;font-weight:400;color:#000;;transform-origin:100% 0">599 827</div>
<div style="left:897px;top:671px;width:76px;height:21px;box-sizing:border-box;background:#D9E1F2;background-clip:padding-box;border-top:1px dotted #000;border-bottom:1px dotted #000;border-left:1px dotted #000;border-right:1px dotted #000;"></div>
<div class="t" style="left:851.00px;width:120px;text-align:right;top:673px;font-size:12.5px;line-height:20px;font-weight:400;color:#000;;transform-origin:100% 0">750 833</div>
<div style="left:972px;top:671px;width:76px;height:21px;box-sizing:border-box;background:#D9E1F2;background-clip:padding-box;border-top:1px dotted #000;border-bottom:1px dotted #000;border-left:1px dotted #000;border-right:1px dotted #000;"></div>
<div class="t" style="left:926.00px;width:120px;text-align:right;top:673px;font-size:12.5px;line-height:20px;font-weight:400;color:#000;;transform-origin:100% 0">745 420</div>
<div style="left:1047px;top:671px;width:76px;height:21px;box-sizing:border-box;background:#D9E1F2;background-clip:padding-box;border-top:1px dotted #000;border-bottom:1px dotted #000;border-left:1px dotted #000;border-right:1px dotted #000;"></div>
<div class="t" style="left:1001.00px;width:120px;text-align:right;top:673px;font-size:12.5px;line-height:20px;font-weight:400;color:#000;;transform-origin:100% 0">642 993</div>
<div style="left:1122px;top:671px;width:76px;height:21px;box-sizing:border-box;background:#D9E1F2;background-clip:padding-box;border-top:1px dotted #000;border-bottom:1px dotted #000;border-left:1px dotted #000;border-right:1px dotted #000;"></div>
<div class="t" style="left:1076.00px;width:120px;text-align:right;top:673px;font-size:12.5px;line-height:20px;font-weight:400;color:#000;;transform-origin:100% 0">449 603</div>
<div style="left:1197px;top:671px;width:76px;height:21px;box-sizing:border-box;background:#D9E1F2;background-clip:padding-box;border-top:1px dotted #000;border-bottom:1px dotted #000;border-left:1px dotted #000;border-right:1px dotted #000;"></div>
<div class="t" style="left:1151.00px;width:120px;text-align:right;top:673px;font-size:12.5px;line-height:20px;font-weight:700;color:#000;;transform-origin:100% 0">9 307 653</div>
<div style="left:1284px;top:671px;width:76px;height:21px;box-sizing:border-box;background:#D9E1F2;background-clip:padding-box;border-top:1px dotted #000;border-bottom:1px dotted #000;border-left:1px dotted #000;border-right:1px dotted #000;"></div>
<div class="t" style="left:1238.00px;width:120px;text-align:right;top:673px;font-size:12.5px;line-height:20px;font-weight:700;color:#000;;transform-origin:100% 0">942 823</div>
<div style="left:1371px;top:671px;width:76px;height:21px;box-sizing:border-box;background:#D9E1F2;background-clip:padding-box;border-top:1px dotted #000;border-bottom:1px dotted #000;border-left:1px dotted #000;border-right:1px dotted #000;"></div>
<div class="t" style="left:1325.00px;width:120px;text-align:right;top:673px;font-size:12.5px;line-height:20px;font-weight:700;color:#000;;transform-origin:100% 0">362 413</div>
<div style="left:1458px;top:671px;width:76px;height:21px;box-sizing:border-box;background:#D9E1F2;background-clip:padding-box;border-top:1px dotted #000;border-bottom:1px dotted #000;border-left:1px dotted #000;border-right:1px dotted #000;"></div>
<div class="t" style="left:1412.00px;width:120px;text-align:right;top:673px;font-size:12.5px;line-height:20px;font-weight:700;color:#000;;transform-origin:100% 0">197 618</div>
<div style="left:1545px;top:671px;width:76px;height:21px;box-sizing:border-box;background:#D9E1F2;background-clip:padding-box;border-top:1px dotted #000;border-bottom:1px dotted #000;border-left:1px dotted #000;border-right:1px dotted #000;"></div>
<div class="t" style="left:1499.00px;width:120px;text-align:right;top:673px;font-size:12.5px;line-height:20px;font-weight:700;color:#000;;transform-origin:100% 0">246 732</div>
<div style="left:1632px;top:671px;width:76px;height:21px;box-sizing:border-box;background:#D9E1F2;background-clip:padding-box;border-top:1px dotted #000;border-bottom:1px dotted #000;border-left:1px dotted #000;border-right:1px dotted #000;"></div>
<div class="t" style="left:1586.00px;width:120px;text-align:right;top:673px;font-size:12.5px;line-height:20px;font-weight:700;color:#000;;transform-origin:100% 0">849 024</div>
<div class="t" style="left:1162.00px;width:120px;text-align:right;top:673px;font-size:12.5px;line-height:20px;font-weight:400;color:#000;;transform-origin:100% 0">0</div>
<div class="t" style="left:1249.00px;width:120px;text-align:right;top:673px;font-size:12.5px;line-height:20px;font-weight:400;color:#000;;transform-origin:100% 0">0</div>
<div class="t" style="left:1336.00px;width:120px;text-align:right;top:673px;font-size:12.5px;line-height:20px;font-weight:400;color:#000;;transform-origin:100% 0">0</div>
<div class="t" style="left:1423.00px;width:120px;text-align:right;top:673px;font-size:12.5px;line-height:20px;font-weight:400;color:#000;;transform-origin:100% 0">0</div>
<div class="t" style="left:1510.00px;width:120px;text-align:right;top:673px;font-size:12.5px;line-height:20px;font-weight:400;color:#000;;transform-origin:100% 0">0</div>
<div class="t" style="left:1597.00px;width:120px;text-align:right;top:673px;font-size:12.5px;line-height:20px;font-weight:400;color:#000;;transform-origin:100% 0">0</div>
<div style="left:1719px;top:671px;width:76px;height:21px;box-sizing:border-box;background:#FFF2CC;background-clip:padding-box;border-top:1px dotted #000;border-bottom:1px dotted #000;border-left:1px dotted #000;border-right:1px dotted #000;"></div>
<div class="t" style="left:1673.00px;width:120px;text-align:right;top:673px;font-size:12.5px;line-height:20px;font-weight:400;color:#000;;transform-origin:100% 0">450 325</div>
<div style="left:1794px;top:671px;width:76px;height:21px;box-sizing:border-box;background:#FFF2CC;background-clip:padding-box;border-top:1px dotted #000;border-bottom:1px dotted #000;border-left:1px dotted #000;border-right:1px dotted #000;"></div>
<div class="t" style="left:1748.00px;width:120px;text-align:right;top:673px;font-size:12.5px;line-height:20px;font-weight:400;color:#000;;transform-origin:100% 0">501 898</div>
<div style="left:1869px;top:671px;width:76px;height:21px;box-sizing:border-box;background:#FFF2CC;background-clip:padding-box;border-top:1px dotted #000;border-bottom:1px dotted #000;border-left:1px dotted #000;border-right:1px dotted #000;"></div>
<div style="left:13px;top:691px;width:273px;height:21px;box-sizing:border-box;border-top:1px dotted #000;border-bottom:1px dotted #000;border-left:1px dotted #000;border-right:1px dotted #000;"></div>
<div class="t" style="left:25.00px;top:693px;font-size:12.5px;line-height:20px;font-weight:400;color:#000;;transform:scaleX(1.0680);transform-origin:0 0">Absencja</div>
<div style="left:297px;top:691px;width:76px;height:21px;box-sizing:border-box;background:#D9E1F2;background-clip:padding-box;border-top:1px dotted #000;border-bottom:1px dotted #000;border-left:1px dotted #000;border-right:1px dotted #000;"></div>
<div class="t" style="left:251.00px;width:120px;text-align:right;top:693px;font-size:12.5px;line-height:20px;font-weight:400;color:#000;;transform-origin:100% 0">82 280</div>
<div style="left:372px;top:691px;width:76px;height:21px;box-sizing:border-box;background:#D9E1F2;background-clip:padding-box;border-top:1px dotted #000;border-bottom:1px dotted #000;border-left:1px dotted #000;border-right:1px dotted #000;"></div>
<div class="t" style="left:326.00px;width:120px;text-align:right;top:693px;font-size:12.5px;line-height:20px;font-weight:400;color:#000;;transform-origin:100% 0">91 126</div>
<div style="left:447px;top:691px;width:76px;height:21px;box-sizing:border-box;background:#D9E1F2;background-clip:padding-box;border-top:1px dotted #000;border-bottom:1px dotted #000;border-left:1px dotted #000;border-right:1px dotted #000;"></div>
<div class="t" style="left:401.00px;width:120px;text-align:right;top:693px;font-size:12.5px;line-height:20px;font-weight:400;color:#000;;transform-origin:100% 0">100 879</div>
<div style="left:522px;top:691px;width:76px;height:21px;box-sizing:border-box;background:#D9E1F2;background-clip:padding-box;border-top:1px dotted #000;border-bottom:1px dotted #000;border-left:1px dotted #000;border-right:1px dotted #000;"></div>
<div class="t" style="left:476.00px;width:120px;text-align:right;top:693px;font-size:12.5px;line-height:20px;font-weight:400;color:#000;;transform-origin:100% 0">87 248</div>
<div style="left:597px;top:691px;width:76px;height:21px;box-sizing:border-box;background:#D9E1F2;background-clip:padding-box;border-top:1px dotted #000;border-bottom:1px dotted #000;border-left:1px dotted #000;border-right:1px dotted #000;"></div>
<div class="t" style="left:551.00px;width:120px;text-align:right;top:693px;font-size:12.5px;line-height:20px;font-weight:400;color:#000;;transform-origin:100% 0">94 332</div>
<div style="left:672px;top:691px;width:76px;height:21px;box-sizing:border-box;background:#D9E1F2;background-clip:padding-box;border-top:1px dotted #000;border-bottom:1px dotted #000;border-left:1px dotted #000;border-right:1px dotted #000;"></div>
<div class="t" style="left:626.00px;width:120px;text-align:right;top:693px;font-size:12.5px;line-height:20px;font-weight:400;color:#000;;transform-origin:100% 0">141 581</div>
<div style="left:747px;top:691px;width:76px;height:21px;box-sizing:border-box;background:#D9E1F2;background-clip:padding-box;border-top:1px dotted #000;border-bottom:1px dotted #000;border-left:1px dotted #000;border-right:1px dotted #000;"></div>
<div class="t" style="left:701.00px;width:120px;text-align:right;top:693px;font-size:12.5px;line-height:20px;font-weight:400;color:#000;;transform-origin:100% 0">132 288</div>
<div style="left:822px;top:691px;width:76px;height:21px;box-sizing:border-box;background:#D9E1F2;background-clip:padding-box;border-top:1px dotted #000;border-bottom:1px dotted #000;border-left:1px dotted #000;border-right:1px dotted #000;"></div>
<div class="t" style="left:776.00px;width:120px;text-align:right;top:693px;font-size:12.5px;line-height:20px;font-weight:400;color:#000;;transform-origin:100% 0">398 846</div>
<div style="left:897px;top:691px;width:76px;height:21px;box-sizing:border-box;background:#D9E1F2;background-clip:padding-box;border-top:1px dotted #000;border-bottom:1px dotted #000;border-left:1px dotted #000;border-right:1px dotted #000;"></div>
<div class="t" style="left:851.00px;width:120px;text-align:right;top:693px;font-size:12.5px;line-height:20px;font-weight:400;color:#000;;transform-origin:100% 0">124 994</div>
<div style="left:972px;top:691px;width:76px;height:21px;box-sizing:border-box;background:#D9E1F2;background-clip:padding-box;border-top:1px dotted #000;border-bottom:1px dotted #000;border-left:1px dotted #000;border-right:1px dotted #000;"></div>
<div class="t" style="left:926.00px;width:120px;text-align:right;top:693px;font-size:12.5px;line-height:20px;font-weight:400;color:#000;;transform-origin:100% 0">124 093</div>
<div style="left:1047px;top:691px;width:76px;height:21px;box-sizing:border-box;background:#D9E1F2;background-clip:padding-box;border-top:1px dotted #000;border-bottom:1px dotted #000;border-left:1px dotted #000;border-right:1px dotted #000;"></div>
<div class="t" style="left:1001.00px;width:120px;text-align:right;top:693px;font-size:12.5px;line-height:20px;font-weight:400;color:#000;;transform-origin:100% 0">84 769</div>
<div style="left:1122px;top:691px;width:76px;height:21px;box-sizing:border-box;background:#D9E1F2;background-clip:padding-box;border-top:1px dotted #000;border-bottom:1px dotted #000;border-left:1px dotted #000;border-right:1px dotted #000;"></div>
<div class="t" style="left:1076.00px;width:120px;text-align:right;top:693px;font-size:12.5px;line-height:20px;font-weight:400;color:#000;;transform-origin:100% 0">210 462</div>
<div style="left:1197px;top:691px;width:76px;height:21px;box-sizing:border-box;background:#D9E1F2;background-clip:padding-box;border-top:1px dotted #000;border-bottom:1px dotted #000;border-left:1px dotted #000;border-right:1px dotted #000;"></div>
<div class="t" style="left:1151.00px;width:120px;text-align:right;top:693px;font-size:12.5px;line-height:20px;font-weight:700;color:#000;;transform-origin:100% 0">1 672 897</div>
<div style="left:1284px;top:691px;width:76px;height:21px;box-sizing:border-box;background:#D9E1F2;background-clip:padding-box;border-top:1px dotted #000;border-bottom:1px dotted #000;border-left:1px dotted #000;border-right:1px dotted #000;"></div>
<div class="t" style="left:1238.00px;width:120px;text-align:right;top:693px;font-size:12.5px;line-height:20px;font-weight:700;color:#000;;transform-origin:100% 0">169 275</div>
<div style="left:1371px;top:691px;width:76px;height:21px;box-sizing:border-box;background:#D9E1F2;background-clip:padding-box;border-top:1px dotted #000;border-bottom:1px dotted #000;border-left:1px dotted #000;border-right:1px dotted #000;"></div>
<div class="t" style="left:1325.00px;width:120px;text-align:right;top:693px;font-size:12.5px;line-height:20px;font-weight:700;color:#000;;transform-origin:100% 0">64 139</div>
<div style="left:1458px;top:691px;width:76px;height:21px;box-sizing:border-box;background:#D9E1F2;background-clip:padding-box;border-top:1px dotted #000;border-bottom:1px dotted #000;border-left:1px dotted #000;border-right:1px dotted #000;"></div>
<div class="t" style="left:1412.00px;width:120px;text-align:right;top:693px;font-size:12.5px;line-height:20px;font-weight:700;color:#000;;transform-origin:100% 0">33 089</div>
<div style="left:1545px;top:691px;width:76px;height:21px;box-sizing:border-box;background:#D9E1F2;background-clip:padding-box;border-top:1px dotted #000;border-bottom:1px dotted #000;border-left:1px dotted #000;border-right:1px dotted #000;"></div>
<div class="t" style="left:1499.00px;width:120px;text-align:right;top:693px;font-size:12.5px;line-height:20px;font-weight:700;color:#000;;transform-origin:100% 0">45 216</div>
<div style="left:1632px;top:691px;width:76px;height:21px;box-sizing:border-box;background:#D9E1F2;background-clip:padding-box;border-top:1px dotted #000;border-bottom:1px dotted #000;border-left:1px dotted #000;border-right:1px dotted #000;"></div>
<div class="t" style="left:1586.00px;width:120px;text-align:right;top:693px;font-size:12.5px;line-height:20px;font-weight:700;color:#000;;transform-origin:100% 0">153 398</div>
<div class="t" style="left:1162.00px;width:120px;text-align:right;top:693px;font-size:12.5px;line-height:20px;font-weight:400;color:#000;;transform-origin:100% 0">0</div>
<div class="t" style="left:1249.00px;width:120px;text-align:right;top:693px;font-size:12.5px;line-height:20px;font-weight:400;color:#000;;transform-origin:100% 0">0</div>
<div class="t" style="left:1336.00px;width:120px;text-align:right;top:693px;font-size:12.5px;line-height:20px;font-weight:400;color:#000;;transform-origin:100% 0">0</div>
<div class="t" style="left:1423.00px;width:120px;text-align:right;top:693px;font-size:12.5px;line-height:20px;font-weight:400;color:#000;;transform-origin:100% 0">0</div>
<div class="t" style="left:1510.00px;width:120px;text-align:right;top:693px;font-size:12.5px;line-height:20px;font-weight:400;color:#000;;transform-origin:100% 0">0</div>
<div class="t" style="left:1597.00px;width:120px;text-align:right;top:693px;font-size:12.5px;line-height:20px;font-weight:400;color:#000;;transform-origin:100% 0">0</div>
<div style="left:1719px;top:691px;width:76px;height:21px;box-sizing:border-box;background:#FFF2CC;background-clip:padding-box;border-top:1px dotted #000;border-bottom:1px dotted #000;border-left:1px dotted #000;border-right:1px dotted #000;"></div>
<div class="t" style="left:1673.00px;width:120px;text-align:right;top:693px;font-size:12.5px;line-height:20px;font-weight:400;color:#000;;transform-origin:100% 0">47 507</div>
<div style="left:1794px;top:691px;width:76px;height:21px;box-sizing:border-box;background:#FFF2CC;background-clip:padding-box;border-top:1px dotted #000;border-bottom:1px dotted #000;border-left:1px dotted #000;border-right:1px dotted #000;"></div>
<div class="t" style="left:1748.00px;width:120px;text-align:right;top:693px;font-size:12.5px;line-height:20px;font-weight:400;color:#000;;transform-origin:100% 0">52 947</div>
<div style="left:1869px;top:691px;width:76px;height:21px;box-sizing:border-box;background:#FFF2CC;background-clip:padding-box;border-top:1px dotted #000;border-bottom:1px dotted #000;border-left:1px dotted #000;border-right:1px dotted #000;"></div>
<div style="left:13px;top:711px;width:273px;height:21px;box-sizing:border-box;border-top:1px dotted #000;border-bottom:1px dotted #000;border-left:1px dotted #000;border-right:1px dotted #000;"></div>
<div class="t" style="left:25.00px;top:713px;font-size:12.5px;line-height:20px;font-weight:400;color:#000;;transform:scaleX(1.0435);transform-origin:0 0">KW</div>
<div style="left:297px;top:711px;width:76px;height:21px;box-sizing:border-box;background:#D9E1F2;background-clip:padding-box;border-top:1px dotted #000;border-bottom:1px dotted #000;border-left:1px dotted #000;border-right:1px dotted #000;"></div>
<div class="t" style="left:251.00px;width:120px;text-align:right;top:713px;font-size:12.5px;line-height:20px;font-weight:400;color:#000;;transform-origin:100% 0">51 997</div>
<div style="left:372px;top:711px;width:76px;height:21px;box-sizing:border-box;background:#D9E1F2;background-clip:padding-box;border-top:1px dotted #000;border-bottom:1px dotted #000;border-left:1px dotted #000;border-right:1px dotted #000;"></div>
<div class="t" style="left:326.00px;width:120px;text-align:right;top:713px;font-size:12.5px;line-height:20px;font-weight:400;color:#000;;transform-origin:100% 0">57 587</div>
<div style="left:447px;top:711px;width:76px;height:21px;box-sizing:border-box;background:#D9E1F2;background-clip:padding-box;border-top:1px dotted #000;border-bottom:1px dotted #000;border-left:1px dotted #000;border-right:1px dotted #000;"></div>
<div class="t" style="left:401.00px;width:120px;text-align:right;top:713px;font-size:12.5px;line-height:20px;font-weight:400;color:#000;;transform-origin:100% 0">63 750</div>
<div style="left:522px;top:711px;width:76px;height:21px;box-sizing:border-box;background:#D9E1F2;background-clip:padding-box;border-top:1px dotted #000;border-bottom:1px dotted #000;border-left:1px dotted #000;border-right:1px dotted #000;"></div>
<div class="t" style="left:476.00px;width:120px;text-align:right;top:713px;font-size:12.5px;line-height:20px;font-weight:400;color:#000;;transform-origin:100% 0">55 136</div>
<div style="left:597px;top:711px;width:76px;height:21px;box-sizing:border-box;background:#D9E1F2;background-clip:padding-box;border-top:1px dotted #000;border-bottom:1px dotted #000;border-left:1px dotted #000;border-right:1px dotted #000;"></div>
<div class="t" style="left:551.00px;width:120px;text-align:right;top:713px;font-size:12.5px;line-height:20px;font-weight:400;color:#000;;transform-origin:100% 0">59 612</div>
<div style="left:672px;top:711px;width:76px;height:21px;box-sizing:border-box;background:#D9E1F2;background-clip:padding-box;border-top:1px dotted #000;border-bottom:1px dotted #000;border-left:1px dotted #000;border-right:1px dotted #000;"></div>
<div class="t" style="left:626.00px;width:120px;text-align:right;top:713px;font-size:12.5px;line-height:20px;font-weight:400;color:#000;;transform-origin:100% 0">59 219</div>
<div style="left:747px;top:711px;width:76px;height:21px;box-sizing:border-box;background:#D9E1F2;background-clip:padding-box;border-top:1px dotted #000;border-bottom:1px dotted #000;border-left:1px dotted #000;border-right:1px dotted #000;"></div>
<div class="t" style="left:701.00px;width:120px;text-align:right;top:713px;font-size:12.5px;line-height:20px;font-weight:400;color:#000;;transform-origin:100% 0">60 632</div>
<div style="left:822px;top:711px;width:76px;height:21px;box-sizing:border-box;background:#D9E1F2;background-clip:padding-box;border-top:1px dotted #000;border-bottom:1px dotted #000;border-left:1px dotted #000;border-right:1px dotted #000;"></div>
<div class="t" style="left:776.00px;width:120px;text-align:right;top:713px;font-size:12.5px;line-height:20px;font-weight:400;color:#000;;transform-origin:100% 0">39 988</div>
<div style="left:897px;top:711px;width:76px;height:21px;box-sizing:border-box;background:#D9E1F2;background-clip:padding-box;border-top:1px dotted #000;border-bottom:1px dotted #000;border-left:1px dotted #000;border-right:1px dotted #000;"></div>
<div class="t" style="left:851.00px;width:120px;text-align:right;top:713px;font-size:12.5px;line-height:20px;font-weight:400;color:#000;;transform-origin:100% 0">50 056</div>
<div style="left:972px;top:711px;width:76px;height:21px;box-sizing:border-box;background:#D9E1F2;background-clip:padding-box;border-top:1px dotted #000;border-bottom:1px dotted #000;border-left:1px dotted #000;border-right:1px dotted #000;"></div>
<div class="t" style="left:926.00px;width:120px;text-align:right;top:713px;font-size:12.5px;line-height:20px;font-weight:400;color:#000;;transform-origin:100% 0">49 695</div>
<div style="left:1047px;top:711px;width:76px;height:21px;box-sizing:border-box;background:#D9E1F2;background-clip:padding-box;border-top:1px dotted #000;border-bottom:1px dotted #000;border-left:1px dotted #000;border-right:1px dotted #000;"></div>
<div class="t" style="left:1001.00px;width:120px;text-align:right;top:713px;font-size:12.5px;line-height:20px;font-weight:400;color:#000;;transform-origin:100% 0">42 866</div>
<div style="left:1122px;top:711px;width:76px;height:21px;box-sizing:border-box;background:#D9E1F2;background-clip:padding-box;border-top:1px dotted #000;border-bottom:1px dotted #000;border-left:1px dotted #000;border-right:1px dotted #000;"></div>
<div class="t" style="left:1076.00px;width:120px;text-align:right;top:713px;font-size:12.5px;line-height:20px;font-weight:400;color:#000;;transform-origin:100% 0">29 974</div>
<div style="left:1197px;top:711px;width:76px;height:21px;box-sizing:border-box;background:#D9E1F2;background-clip:padding-box;border-top:1px dotted #000;border-bottom:1px dotted #000;border-left:1px dotted #000;border-right:1px dotted #000;"></div>
<div class="t" style="left:1151.00px;width:120px;text-align:right;top:713px;font-size:12.5px;line-height:20px;font-weight:700;color:#000;;transform-origin:100% 0">620 510</div>
<div style="left:1284px;top:711px;width:76px;height:21px;box-sizing:border-box;background:#D9E1F2;background-clip:padding-box;border-top:1px dotted #000;border-bottom:1px dotted #000;border-left:1px dotted #000;border-right:1px dotted #000;"></div>
<div class="t" style="left:1238.00px;width:120px;text-align:right;top:713px;font-size:12.5px;line-height:20px;font-weight:700;color:#000;;transform-origin:100% 0">62 855</div>
<div style="left:1371px;top:711px;width:76px;height:21px;box-sizing:border-box;background:#D9E1F2;background-clip:padding-box;border-top:1px dotted #000;border-bottom:1px dotted #000;border-left:1px dotted #000;border-right:1px dotted #000;"></div>
<div class="t" style="left:1325.00px;width:120px;text-align:right;top:713px;font-size:12.5px;line-height:20px;font-weight:700;color:#000;;transform-origin:100% 0">24 161</div>
<div style="left:1458px;top:711px;width:76px;height:21px;box-sizing:border-box;background:#D9E1F2;background-clip:padding-box;border-top:1px dotted #000;border-bottom:1px dotted #000;border-left:1px dotted #000;border-right:1px dotted #000;"></div>
<div class="t" style="left:1412.00px;width:120px;text-align:right;top:713px;font-size:12.5px;line-height:20px;font-weight:700;color:#000;;transform-origin:100% 0">13 175</div>
<div style="left:1545px;top:711px;width:76px;height:21px;box-sizing:border-box;background:#D9E1F2;background-clip:padding-box;border-top:1px dotted #000;border-bottom:1px dotted #000;border-left:1px dotted #000;border-right:1px dotted #000;"></div>
<div class="t" style="left:1499.00px;width:120px;text-align:right;top:713px;font-size:12.5px;line-height:20px;font-weight:700;color:#000;;transform-origin:100% 0">16 449</div>
<div style="left:1632px;top:711px;width:76px;height:21px;box-sizing:border-box;background:#D9E1F2;background-clip:padding-box;border-top:1px dotted #000;border-bottom:1px dotted #000;border-left:1px dotted #000;border-right:1px dotted #000;"></div>
<div class="t" style="left:1586.00px;width:120px;text-align:right;top:713px;font-size:12.5px;line-height:20px;font-weight:700;color:#000;;transform-origin:100% 0">56 602</div>
<div class="t" style="left:1162.00px;width:120px;text-align:right;top:713px;font-size:12.5px;line-height:20px;font-weight:400;color:#000;;transform-origin:100% 0">0</div>
<div class="t" style="left:1249.00px;width:120px;text-align:right;top:713px;font-size:12.5px;line-height:20px;font-weight:400;color:#000;;transform-origin:100% 0">0</div>
<div class="t" style="left:1336.00px;width:120px;text-align:right;top:713px;font-size:12.5px;line-height:20px;font-weight:400;color:#000;;transform-origin:100% 0">0</div>
<div class="t" style="left:1423.00px;width:120px;text-align:right;top:713px;font-size:12.5px;line-height:20px;font-weight:400;color:#000;;transform-origin:100% 0">0</div>
<div class="t" style="left:1510.00px;width:120px;text-align:right;top:713px;font-size:12.5px;line-height:20px;font-weight:400;color:#000;;transform-origin:100% 0">0</div>
<div class="t" style="left:1597.00px;width:120px;text-align:right;top:713px;font-size:12.5px;line-height:20px;font-weight:400;color:#000;;transform-origin:100% 0">0</div>
<div style="left:1719px;top:711px;width:76px;height:21px;box-sizing:border-box;background:#FFF2CC;background-clip:padding-box;border-top:1px dotted #000;border-bottom:1px dotted #000;border-left:1px dotted #000;border-right:1px dotted #000;"></div>
<div class="t" style="left:1673.00px;width:120px;text-align:right;top:713px;font-size:12.5px;line-height:20px;font-weight:400;color:#000;;transform-origin:100% 0">30 022</div>
<div style="left:1794px;top:711px;width:76px;height:21px;box-sizing:border-box;background:#FFF2CC;background-clip:padding-box;border-top:1px dotted #000;border-bottom:1px dotted #000;border-left:1px dotted #000;border-right:1px dotted #000;"></div>
<div class="t" style="left:1748.00px;width:120px;text-align:right;top:713px;font-size:12.5px;line-height:20px;font-weight:400;color:#000;;transform-origin:100% 0">33 460</div>
<div style="left:1869px;top:711px;width:76px;height:21px;box-sizing:border-box;background:#FFF2CC;background-clip:padding-box;border-top:1px dotted #000;border-bottom:1px dotted #000;border-left:1px dotted #000;border-right:1px dotted #000;"></div>
<div style="left:13px;top:737px;width:273px;height:21px;box-sizing:border-box;border-top:1px dotted #000;border-bottom:1px dotted #000;border-left:1px dotted #000;border-right:1px dotted #000;"></div>
<div class="t" style="left:16.00px;top:739px;font-size:12.5px;line-height:20px;font-weight:700;color:#000;;transform:scaleX(1.0124);transform-origin:0 0">Koszty całkowite</div>
<div style="left:297px;top:737px;width:76px;height:21px;box-sizing:border-box;background:#DDEBF7;background-clip:padding-box;border-top:1px dotted #000;border-bottom:1px dotted #000;border-left:1px dotted #000;border-right:1px dotted #000;"></div>
<div class="t" style="left:251.00px;width:120px;text-align:right;top:739px;font-size:12.5px;line-height:20px;font-weight:700;color:#000;;transform-origin:100% 0">1 702 289</div>
<div style="left:372px;top:737px;width:76px;height:21px;box-sizing:border-box;background:#DDEBF7;background-clip:padding-box;border-top:1px dotted #000;border-bottom:1px dotted #000;border-left:1px dotted #000;border-right:1px dotted #000;"></div>
<div class="t" style="left:326.00px;width:120px;text-align:right;top:739px;font-size:12.5px;line-height:20px;font-weight:700;color:#000;;transform-origin:100% 0">1 824 661</div>
<div style="left:447px;top:737px;width:76px;height:21px;box-sizing:border-box;background:#DDEBF7;background-clip:padding-box;border-top:1px dotted #000;border-bottom:1px dotted #000;border-left:1px dotted #000;border-right:1px dotted #000;"></div>
<div class="t" style="left:401.00px;width:120px;text-align:right;top:739px;font-size:12.5px;line-height:20px;font-weight:700;color:#000;;transform-origin:100% 0">2 007 342</div>
<div style="left:522px;top:737px;width:76px;height:21px;box-sizing:border-box;background:#DDEBF7;background-clip:padding-box;border-top:1px dotted #000;border-bottom:1px dotted #000;border-left:1px dotted #000;border-right:1px dotted #000;"></div>
<div class="t" style="left:476.00px;width:120px;text-align:right;top:739px;font-size:12.5px;line-height:20px;font-weight:700;color:#000;;transform-origin:100% 0">1 867 139</div>
<div style="left:597px;top:737px;width:76px;height:21px;box-sizing:border-box;background:#DDEBF7;background-clip:padding-box;border-top:1px dotted #000;border-bottom:1px dotted #000;border-left:1px dotted #000;border-right:1px dotted #000;"></div>
<div class="t" style="left:551.00px;width:120px;text-align:right;top:739px;font-size:12.5px;line-height:20px;font-weight:700;color:#000;;transform-origin:100% 0">1 931 481</div>
<div style="left:672px;top:737px;width:76px;height:21px;box-sizing:border-box;background:#DDEBF7;background-clip:padding-box;border-top:1px dotted #000;border-bottom:1px dotted #000;border-left:1px dotted #000;border-right:1px dotted #000;"></div>
<div class="t" style="left:626.00px;width:120px;text-align:right;top:739px;font-size:12.5px;line-height:20px;font-weight:700;color:#000;;transform-origin:100% 0">1 950 635</div>
<div style="left:747px;top:737px;width:76px;height:21px;box-sizing:border-box;background:#DDEBF7;background-clip:padding-box;border-top:1px dotted #000;border-bottom:1px dotted #000;border-left:1px dotted #000;border-right:1px dotted #000;"></div>
<div class="t" style="left:701.00px;width:120px;text-align:right;top:739px;font-size:12.5px;line-height:20px;font-weight:700;color:#000;;transform-origin:100% 0">1 910 748</div>
<div style="left:822px;top:737px;width:76px;height:21px;box-sizing:border-box;background:#DDEBF7;background-clip:padding-box;border-top:1px dotted #000;border-bottom:1px dotted #000;border-left:1px dotted #000;border-right:1px dotted #000;"></div>
<div class="t" style="left:776.00px;width:120px;text-align:right;top:739px;font-size:12.5px;line-height:20px;font-weight:700;color:#000;;transform-origin:100% 0">1 880 936</div>
<div style="left:897px;top:737px;width:76px;height:21px;box-sizing:border-box;background:#DDEBF7;background-clip:padding-box;border-top:1px dotted #000;border-bottom:1px dotted #000;border-left:1px dotted #000;border-right:1px dotted #000;"></div>
<div class="t" style="left:851.00px;width:120px;text-align:right;top:739px;font-size:12.5px;line-height:20px;font-weight:700;color:#000;;transform-origin:100% 0">1 793 107</div>
<div style="left:972px;top:737px;width:76px;height:21px;box-sizing:border-box;background:#DDEBF7;background-clip:padding-box;border-top:1px dotted #000;border-bottom:1px dotted #000;border-left:1px dotted #000;border-right:1px dotted #000;"></div>
<div class="t" style="left:926.00px;width:120px;text-align:right;top:739px;font-size:12.5px;line-height:20px;font-weight:700;color:#000;;transform-origin:100% 0">1 702 787</div>
<div style="left:1047px;top:737px;width:76px;height:21px;box-sizing:border-box;background:#DDEBF7;background-clip:padding-box;border-top:1px dotted #000;border-bottom:1px dotted #000;border-left:1px dotted #000;border-right:1px dotted #000;"></div>
<div class="t" style="left:1001.00px;width:120px;text-align:right;top:739px;font-size:12.5px;line-height:20px;font-weight:700;color:#000;;transform-origin:100% 0">1 554 438</div>
<div style="left:1122px;top:737px;width:76px;height:21px;box-sizing:border-box;background:#DDEBF7;background-clip:padding-box;border-top:1px dotted #000;border-bottom:1px dotted #000;border-left:1px dotted #000;border-right:1px dotted #000;"></div>
<div class="t" style="left:1076.00px;width:120px;text-align:right;top:739px;font-size:12.5px;line-height:20px;font-weight:700;color:#000;;transform-origin:100% 0">1 355 126</div>
<div style="left:1197px;top:737px;width:76px;height:21px;box-sizing:border-box;background:#D9E1F2;background-clip:padding-box;border-top:1px dotted #000;border-bottom:1px dotted #000;border-left:1px dotted #000;border-right:1px dotted #000;"></div>
<div class="t" style="left:1151.00px;width:120px;text-align:right;top:739px;font-size:12.5px;line-height:20px;font-weight:700;color:#000;;transform-origin:100% 0">21 480 688</div>
<div style="left:1284px;top:737px;width:76px;height:21px;box-sizing:border-box;background:#D9E1F2;background-clip:padding-box;border-top:1px dotted #000;border-bottom:1px dotted #000;border-left:1px dotted #000;border-right:1px dotted #000;"></div>
<div class="t" style="left:1238.00px;width:120px;text-align:right;top:739px;font-size:12.5px;line-height:20px;font-weight:700;color:#000;;transform-origin:100% 0">499 101</div>
<div style="left:1371px;top:737px;width:76px;height:21px;box-sizing:border-box;background:#D9E1F2;background-clip:padding-box;border-top:1px dotted #000;border-bottom:1px dotted #000;border-left:1px dotted #000;border-right:1px dotted #000;"></div>
<div class="t" style="left:1325.00px;width:120px;text-align:right;top:739px;font-size:12.5px;line-height:20px;font-weight:700;color:#000;;transform-origin:100% 0">759 162</div>
<div style="left:1458px;top:737px;width:76px;height:21px;box-sizing:border-box;background:#D9E1F2;background-clip:padding-box;border-top:1px dotted #000;border-bottom:1px dotted #000;border-left:1px dotted #000;border-right:1px dotted #000;"></div>
<div class="t" style="left:1412.00px;width:120px;text-align:right;top:739px;font-size:12.5px;line-height:20px;font-weight:700;color:#000;;transform-origin:100% 0">278 389</div>
<div style="left:1545px;top:737px;width:76px;height:21px;box-sizing:border-box;background:#D9E1F2;background-clip:padding-box;border-top:1px dotted #000;border-bottom:1px dotted #000;border-left:1px dotted #000;border-right:1px dotted #000;"></div>
<div class="t" style="left:1499.00px;width:120px;text-align:right;top:739px;font-size:12.5px;line-height:20px;font-weight:700;color:#000;;transform-origin:100% 0">259 097</div>
<div style="left:1632px;top:737px;width:76px;height:21px;box-sizing:border-box;background:#D9E1F2;background-clip:padding-box;border-top:1px dotted #000;border-bottom:1px dotted #000;border-left:1px dotted #000;border-right:1px dotted #000;"></div>
<div class="t" style="left:1586.00px;width:120px;text-align:right;top:739px;font-size:12.5px;line-height:20px;font-weight:700;color:#000;;transform-origin:100% 0">532 935</div>
<div class="t" style="left:1162.00px;width:120px;text-align:right;top:739px;font-size:12.5px;line-height:20px;font-weight:700;color:#000;;transform-origin:100% 0">0</div>
<div class="t" style="left:1249.00px;width:120px;text-align:right;top:739px;font-size:12.5px;line-height:20px;font-weight:700;color:#000;;transform-origin:100% 0">0</div>
<div class="t" style="left:1336.00px;width:120px;text-align:right;top:739px;font-size:12.5px;line-height:20px;font-weight:700;color:#000;;transform-origin:100% 0">0</div>
<div class="t" style="left:1423.00px;width:120px;text-align:right;top:739px;font-size:12.5px;line-height:20px;font-weight:700;color:#000;;transform-origin:100% 0">0</div>
<div class="t" style="left:1510.00px;width:120px;text-align:right;top:739px;font-size:12.5px;line-height:20px;font-weight:700;color:#000;;transform-origin:100% 0">0</div>
<div class="t" style="left:1597.00px;width:120px;text-align:right;top:739px;font-size:12.5px;line-height:20px;font-weight:700;color:#000;;transform-origin:100% 0">0</div>
<div style="left:1719px;top:737px;width:76px;height:21px;box-sizing:border-box;background:#FFF2CC;background-clip:padding-box;border-top:1px dotted #000;border-bottom:1px dotted #000;border-left:1px dotted #000;border-right:1px dotted #000;"></div>
<div class="t" style="left:1673.00px;width:120px;text-align:right;top:739px;font-size:12.5px;line-height:20px;font-weight:400;color:#000;;transform-origin:100% 0">672 254</div>
<div style="left:1794px;top:737px;width:76px;height:21px;box-sizing:border-box;background:#FFF2CC;background-clip:padding-box;border-top:1px dotted #000;border-bottom:1px dotted #000;border-left:1px dotted #000;border-right:1px dotted #000;"></div>
<div class="t" style="left:1748.00px;width:120px;text-align:right;top:739px;font-size:12.5px;line-height:20px;font-weight:400;color:#000;;transform-origin:100% 0">718 443</div>
<div style="left:1869px;top:737px;width:76px;height:21px;box-sizing:border-box;background:#FFF2CC;background-clip:padding-box;border-top:1px dotted #000;border-bottom:1px dotted #000;border-left:1px dotted #000;border-right:1px dotted #000;"></div>
<div style="left:13px;top:763px;width:273px;height:21px;box-sizing:border-box;border-top:1px solid #b4b4b4;border-bottom:1px solid #b4b4b4;border-left:1px solid #b4b4b4;border-right:1px solid #b4b4b4;"></div>
<div class="t" style="left:22.00px;top:764px;font-size:11px;line-height:20px;font-weight:400;color:#000;;transform:scaleX(1.1280);transform-origin:0 0">materiały zużyte do produkcji</div>
<div style="left:297px;top:763px;width:76px;height:21px;box-sizing:border-box;background:#D9E1F2;background-clip:padding-box;border-top:1px dotted #000;border-bottom:1px dotted #000;border-left:1px dotted #000;border-right:1px dotted #000;"></div>
<div class="t" style="left:251.00px;width:120px;text-align:right;top:764px;font-size:11px;line-height:20px;font-weight:400;color:#000;;transform:scaleX(1.1000);transform-origin:100% 0">95 417</div>
<div style="left:372px;top:763px;width:76px;height:21px;box-sizing:border-box;background:#D9E1F2;background-clip:padding-box;border-top:1px dotted #000;border-bottom:1px dotted #000;border-left:1px dotted #000;border-right:1px dotted #000;"></div>
<div class="t" style="left:326.00px;width:120px;text-align:right;top:764px;font-size:11px;line-height:20px;font-weight:400;color:#000;;transform:scaleX(1.1000);transform-origin:100% 0">106 613</div>
<div style="left:447px;top:763px;width:76px;height:21px;box-sizing:border-box;background:#D9E1F2;background-clip:padding-box;border-top:1px dotted #000;border-bottom:1px dotted #000;border-left:1px dotted #000;border-right:1px dotted #000;"></div>
<div class="t" style="left:401.00px;width:120px;text-align:right;top:764px;font-size:11px;line-height:20px;font-weight:400;color:#000;;transform:scaleX(1.1000);transform-origin:100% 0">127 478</div>
<div style="left:522px;top:763px;width:76px;height:21px;box-sizing:border-box;background:#D9E1F2;background-clip:padding-box;border-top:1px dotted #000;border-bottom:1px dotted #000;border-left:1px dotted #000;border-right:1px dotted #000;"></div>
<div class="t" style="left:476.00px;width:120px;text-align:right;top:764px;font-size:11px;line-height:20px;font-weight:400;color:#000;;transform:scaleX(1.1000);transform-origin:100% 0">107 122</div>
<div style="left:597px;top:763px;width:76px;height:21px;box-sizing:border-box;background:#D9E1F2;background-clip:padding-box;border-top:1px dotted #000;border-bottom:1px dotted #000;border-left:1px dotted #000;border-right:1px dotted #000;"></div>
<div class="t" style="left:551.00px;width:120px;text-align:right;top:764px;font-size:11px;line-height:20px;font-weight:400;color:#000;;transform:scaleX(1.1000);transform-origin:100% 0">115 010</div>
<div style="left:672px;top:763px;width:76px;height:21px;box-sizing:border-box;background:#D9E1F2;background-clip:padding-box;border-top:1px dotted #000;border-bottom:1px dotted #000;border-left:1px dotted #000;border-right:1px dotted #000;"></div>
<div class="t" style="left:626.00px;width:120px;text-align:right;top:764px;font-size:11px;line-height:20px;font-weight:400;color:#000;;transform:scaleX(1.1000);transform-origin:100% 0">111 193</div>
<div style="left:747px;top:763px;width:76px;height:21px;box-sizing:border-box;background:#D9E1F2;background-clip:padding-box;border-top:1px dotted #000;border-bottom:1px dotted #000;border-left:1px dotted #000;border-right:1px dotted #000;"></div>
<div class="t" style="left:701.00px;width:120px;text-align:right;top:764px;font-size:11px;line-height:20px;font-weight:400;color:#000;;transform:scaleX(1.1000);transform-origin:100% 0">115 264</div>
<div style="left:822px;top:763px;width:76px;height:21px;box-sizing:border-box;background:#D9E1F2;background-clip:padding-box;border-top:1px dotted #000;border-bottom:1px dotted #000;border-left:1px dotted #000;border-right:1px dotted #000;"></div>
<div class="t" style="left:776.00px;width:120px;text-align:right;top:764px;font-size:11px;line-height:20px;font-weight:400;color:#000;;transform:scaleX(1.1000);transform-origin:100% 0">76 334</div>
<div style="left:897px;top:763px;width:76px;height:21px;box-sizing:border-box;background:#D9E1F2;background-clip:padding-box;border-top:1px dotted #000;border-bottom:1px dotted #000;border-left:1px dotted #000;border-right:1px dotted #000;"></div>
<div class="t" style="left:851.00px;width:120px;text-align:right;top:764px;font-size:11px;line-height:20px;font-weight:400;color:#000;;transform:scaleX(1.1000);transform-origin:100% 0">99 616</div>
<div style="left:972px;top:763px;width:76px;height:21px;box-sizing:border-box;background:#D9E1F2;background-clip:padding-box;border-top:1px dotted #000;border-bottom:1px dotted #000;border-left:1px dotted #000;border-right:1px dotted #000;"></div>
<div class="t" style="left:926.00px;width:120px;text-align:right;top:764px;font-size:11px;line-height:20px;font-weight:400;color:#000;;transform:scaleX(1.1000);transform-origin:100% 0">103 560</div>
<div style="left:1047px;top:763px;width:76px;height:21px;box-sizing:border-box;background:#D9E1F2;background-clip:padding-box;border-top:1px dotted #000;border-bottom:1px dotted #000;border-left:1px dotted #000;border-right:1px dotted #000;"></div>
<div class="t" style="left:1001.00px;width:120px;text-align:right;top:764px;font-size:11px;line-height:20px;font-weight:400;color:#000;;transform:scaleX(1.1000);transform-origin:100% 0">90 710</div>
<div style="left:1122px;top:763px;width:76px;height:21px;box-sizing:border-box;background:#D9E1F2;background-clip:padding-box;border-top:1px dotted #000;border-bottom:1px dotted #000;border-left:1px dotted #000;border-right:1px dotted #000;"></div>
<div class="t" style="left:1076.00px;width:120px;text-align:right;top:764px;font-size:11px;line-height:20px;font-weight:400;color:#000;;transform:scaleX(1.1000);transform-origin:100% 0">62 848</div>
<div style="left:1197px;top:763px;width:76px;height:21px;box-sizing:border-box;background:#D9E1F2;background-clip:padding-box;border-top:1px dotted #000;border-bottom:1px dotted #000;border-left:1px dotted #000;border-right:1px dotted #000;"></div>
<div class="t" style="left:1151.00px;width:120px;text-align:right;top:764px;font-size:11px;line-height:20px;font-weight:700;color:#000;;transform:scaleX(1.1000);transform-origin:100% 0">1 211 166</div>
<div style="left:1284px;top:763px;width:76px;height:21px;box-sizing:border-box;background:#D9E1F2;background-clip:padding-box;border-top:1px dotted #000;border-bottom:1px dotted #000;border-left:1px dotted #000;border-right:1px dotted #000;"></div>
<div class="t" style="left:1238.00px;width:120px;text-align:right;top:764px;font-size:11px;line-height:20px;font-weight:700;color:#000;;transform:scaleX(1.1000);transform-origin:100% 0">174 530</div>
<svg style="position:absolute;left:1285px;top:764px;" width="7" height="7" viewBox="0 0 7 7"><path d="M0 0h6.5L0 6.5z" fill="#008000"/></svg>
<div style="left:1371px;top:763px;width:76px;height:21px;box-sizing:border-box;background:#D9E1F2;background-clip:padding-box;border-top:1px dotted #000;border-bottom:1px dotted #000;border-left:1px dotted #000;border-right:1px dotted #000;"></div>
<div class="t" style="left:1325.00px;width:120px;text-align:right;top:764px;font-size:11px;line-height:20px;font-weight:700;color:#000;;transform:scaleX(1.1000);transform-origin:100% 0">220 075</div>
<svg style="position:absolute;left:1372px;top:764px;" width="7" height="7" viewBox="0 0 7 7"><path d="M0 0h6.5L0 6.5z" fill="#008000"/></svg>
<div style="left:1458px;top:763px;width:76px;height:21px;box-sizing:border-box;background:#D9E1F2;background-clip:padding-box;border-top:1px dotted #000;border-bottom:1px dotted #000;border-left:1px dotted #000;border-right:1px dotted #000;"></div>
<div class="t" style="left:1412.00px;width:120px;text-align:right;top:764px;font-size:11px;line-height:20px;font-weight:700;color:#000;;transform:scaleX(1.1000);transform-origin:100% 0">55 260</div>
<svg style="position:absolute;left:1459px;top:764px;" width="7" height="7" viewBox="0 0 7 7"><path d="M0 0h6.5L0 6.5z" fill="#008000"/></svg>
<div style="left:1545px;top:763px;width:76px;height:21px;box-sizing:border-box;background:#D9E1F2;background-clip:padding-box;border-top:1px dotted #000;border-bottom:1px dotted #000;border-left:1px dotted #000;border-right:1px dotted #000;"></div>
<div class="t" style="left:1499.00px;width:120px;text-align:right;top:764px;font-size:11px;line-height:20px;font-weight:700;color:#000;;transform:scaleX(1.1000);transform-origin:100% 0">89 777</div>
<svg style="position:absolute;left:1546px;top:764px;" width="7" height="7" viewBox="0 0 7 7"><path d="M0 0h6.5L0 6.5z" fill="#008000"/></svg>
<div style="left:1632px;top:763px;width:76px;height:21px;box-sizing:border-box;background:#D9E1F2;background-clip:padding-box;border-top:1px dotted #000;border-bottom:1px dotted #000;border-left:1px dotted #000;border-right:1px dotted #000;"></div>
<div class="t" style="left:1586.00px;width:120px;text-align:right;top:764px;font-size:11px;line-height:20px;font-weight:700;color:#000;;transform:scaleX(1.1000);transform-origin:100% 0">81 450</div>
<svg style="position:absolute;left:1633px;top:764px;" width="7" height="7" viewBox="0 0 7 7"><path d="M0 0h6.5L0 6.5z" fill="#008000"/></svg>
<div class="t" style="left:1162.00px;width:120px;text-align:right;top:764px;font-size:11px;line-height:20px;font-weight:400;color:#000;;transform:scaleX(1.1000);transform-origin:100% 0">0</div>
<div class="t" style="left:1249.00px;width:120px;text-align:right;top:764px;font-size:11px;line-height:20px;font-weight:400;color:#000;;transform:scaleX(1.1000);transform-origin:100% 0">0</div>
<div class="t" style="left:1336.00px;width:120px;text-align:right;top:764px;font-size:11px;line-height:20px;font-weight:400;color:#000;;transform:scaleX(1.1000);transform-origin:100% 0">0</div>
<div class="t" style="left:1423.00px;width:120px;text-align:right;top:764px;font-size:11px;line-height:20px;font-weight:400;color:#000;;transform:scaleX(1.1000);transform-origin:100% 0">0</div>
<div class="t" style="left:1510.00px;width:120px;text-align:right;top:764px;font-size:11px;line-height:20px;font-weight:400;color:#000;;transform:scaleX(1.1000);transform-origin:100% 0">0</div>
<div class="t" style="left:1597.00px;width:120px;text-align:right;top:764px;font-size:11px;line-height:20px;font-weight:400;color:#000;;transform:scaleX(1.1000);transform-origin:100% 0">0</div>
<div style="left:1719px;top:763px;width:76px;height:21px;box-sizing:border-box;background:#FFF2CC;background-clip:padding-box;border-top:1px dotted #000;border-bottom:1px dotted #000;border-left:1px dotted #000;border-right:1px dotted #000;"></div>
<div class="t" style="left:1673.00px;width:120px;text-align:right;top:764px;font-size:11px;line-height:20px;font-weight:400;color:#000;;transform:scaleX(1.1000);transform-origin:100% 0">71 881</div>
<div style="left:1794px;top:763px;width:76px;height:21px;box-sizing:border-box;background:#FFF2CC;background-clip:padding-box;border-top:1px dotted #000;border-bottom:1px dotted #000;border-left:1px dotted #000;border-right:1px dotted #000;"></div>
<div class="t" style="left:1748.00px;width:120px;text-align:right;top:764px;font-size:11px;line-height:20px;font-weight:400;color:#000;;transform:scaleX(1.1000);transform-origin:100% 0">84 343</div>
<div style="left:1869px;top:763px;width:76px;height:21px;box-sizing:border-box;background:#FFF2CC;background-clip:padding-box;border-top:1px dotted #000;border-bottom:1px dotted #000;border-left:1px dotted #000;border-right:1px dotted #000;"></div>
<div style="left:13px;top:783px;width:273px;height:21px;box-sizing:border-box;border-top:1px solid #b4b4b4;border-bottom:1px solid #b4b4b4;border-left:1px solid #b4b4b4;border-right:1px solid #b4b4b4;"></div>
<div class="t" style="left:19.00px;top:784px;font-size:11px;line-height:20px;font-weight:400;color:#000;;transform:scaleX(1.1730);transform-origin:0 0">Paliwo</div>
<div style="left:297px;top:783px;width:76px;height:21px;box-sizing:border-box;background:#D9E1F2;background-clip:padding-box;border-top:1px dotted #000;border-bottom:1px dotted #000;border-left:1px dotted #000;border-right:1px dotted #000;"></div>
<div class="t" style="left:251.00px;width:120px;text-align:right;top:784px;font-size:11px;line-height:20px;font-weight:400;color:#000;;transform:scaleX(1.1000);transform-origin:100% 0">4 979</div>
<div style="left:372px;top:783px;width:76px;height:21px;box-sizing:border-box;background:#D9E1F2;background-clip:padding-box;border-top:1px dotted #000;border-bottom:1px dotted #000;border-left:1px dotted #000;border-right:1px dotted #000;"></div>
<div class="t" style="left:326.00px;width:120px;text-align:right;top:784px;font-size:11px;line-height:20px;font-weight:400;color:#000;;transform:scaleX(1.1000);transform-origin:100% 0">5 563</div>
<div style="left:447px;top:783px;width:76px;height:21px;box-sizing:border-box;background:#D9E1F2;background-clip:padding-box;border-top:1px dotted #000;border-bottom:1px dotted #000;border-left:1px dotted #000;border-right:1px dotted #000;"></div>
<div class="t" style="left:401.00px;width:120px;text-align:right;top:784px;font-size:11px;line-height:20px;font-weight:400;color:#000;;transform:scaleX(1.1000);transform-origin:100% 0">6 652</div>
<div style="left:522px;top:783px;width:76px;height:21px;box-sizing:border-box;background:#D9E1F2;background-clip:padding-box;border-top:1px dotted #000;border-bottom:1px dotted #000;border-left:1px dotted #000;border-right:1px dotted #000;"></div>
<div class="t" style="left:476.00px;width:120px;text-align:right;top:784px;font-size:11px;line-height:20px;font-weight:400;color:#000;;transform:scaleX(1.1000);transform-origin:100% 0">5 589</div>
<div style="left:597px;top:783px;width:76px;height:21px;box-sizing:border-box;background:#D9E1F2;background-clip:padding-box;border-top:1px dotted #000;border-bottom:1px dotted #000;border-left:1px dotted #000;border-right:1px dotted #000;"></div>
<div class="t" style="left:551.00px;width:120px;text-align:right;top:784px;font-size:11px;line-height:20px;font-weight:400;color:#000;;transform:scaleX(1.1000);transform-origin:100% 0">6 001</div>
<div style="left:672px;top:783px;width:76px;height:21px;box-sizing:border-box;background:#D9E1F2;background-clip:padding-box;border-top:1px dotted #000;border-bottom:1px dotted #000;border-left:1px dotted #000;border-right:1px dotted #000;"></div>
<div class="t" style="left:626.00px;width:120px;text-align:right;top:784px;font-size:11px;line-height:20px;font-weight:400;color:#000;;transform:scaleX(1.1000);transform-origin:100% 0">5 802</div>
<div style="left:747px;top:783px;width:76px;height:21px;box-sizing:border-box;background:#D9E1F2;background-clip:padding-box;border-top:1px dotted #000;border-bottom:1px dotted #000;border-left:1px dotted #000;border-right:1px dotted #000;"></div>
<div class="t" style="left:701.00px;width:120px;text-align:right;top:784px;font-size:11px;line-height:20px;font-weight:400;color:#000;;transform:scaleX(1.1000);transform-origin:100% 0">6 014</div>
<div style="left:822px;top:783px;width:76px;height:21px;box-sizing:border-box;background:#D9E1F2;background-clip:padding-box;border-top:1px dotted #000;border-bottom:1px dotted #000;border-left:1px dotted #000;border-right:1px dotted #000;"></div>
<div class="t" style="left:776.00px;width:120px;text-align:right;top:784px;font-size:11px;line-height:20px;font-weight:400;color:#000;;transform:scaleX(1.1000);transform-origin:100% 0">3 983</div>
<div style="left:897px;top:783px;width:76px;height:21px;box-sizing:border-box;background:#D9E1F2;background-clip:padding-box;border-top:1px dotted #000;border-bottom:1px dotted #000;border-left:1px dotted #000;border-right:1px dotted #000;"></div>
<div class="t" style="left:851.00px;width:120px;text-align:right;top:784px;font-size:11px;line-height:20px;font-weight:400;color:#000;;transform:scaleX(1.1000);transform-origin:100% 0">5 198</div>
<div style="left:972px;top:783px;width:76px;height:21px;box-sizing:border-box;background:#D9E1F2;background-clip:padding-box;border-top:1px dotted #000;border-bottom:1px dotted #000;border-left:1px dotted #000;border-right:1px dotted #000;"></div>
<div class="t" style="left:926.00px;width:120px;text-align:right;top:784px;font-size:11px;line-height:20px;font-weight:400;color:#000;;transform:scaleX(1.1000);transform-origin:100% 0">5 404</div>
<div style="left:1047px;top:783px;width:76px;height:21px;box-sizing:border-box;background:#D9E1F2;background-clip:padding-box;border-top:1px dotted #000;border-bottom:1px dotted #000;border-left:1px dotted #000;border-right:1px dotted #000;"></div>
<div class="t" style="left:1001.00px;width:120px;text-align:right;top:784px;font-size:11px;line-height:20px;font-weight:400;color:#000;;transform:scaleX(1.1000);transform-origin:100% 0">4 733</div>
<div style="left:1122px;top:783px;width:76px;height:21px;box-sizing:border-box;background:#D9E1F2;background-clip:padding-box;border-top:1px dotted #000;border-bottom:1px dotted #000;border-left:1px dotted #000;border-right:1px dotted #000;"></div>
<div class="t" style="left:1076.00px;width:120px;text-align:right;top:784px;font-size:11px;line-height:20px;font-weight:400;color:#000;;transform:scaleX(1.1000);transform-origin:100% 0">3 279</div>
<div style="left:1197px;top:783px;width:76px;height:21px;box-sizing:border-box;background:#D9E1F2;background-clip:padding-box;border-top:1px dotted #000;border-bottom:1px dotted #000;border-left:1px dotted #000;border-right:1px dotted #000;"></div>
<div class="t" style="left:1151.00px;width:120px;text-align:right;top:784px;font-size:11px;line-height:20px;font-weight:700;color:#000;;transform:scaleX(1.1000);transform-origin:100% 0">63 197</div>
<div style="left:1284px;top:783px;width:76px;height:21px;box-sizing:border-box;background:#D9E1F2;background-clip:padding-box;border-top:1px dotted #000;border-bottom:1px dotted #000;border-left:1px dotted #000;border-right:1px dotted #000;"></div>
<div class="t" style="left:1238.00px;width:120px;text-align:right;top:784px;font-size:11px;line-height:20px;font-weight:700;color:#000;;transform:scaleX(1.1000);transform-origin:100% 0">8 010</div>
<svg style="position:absolute;left:1285px;top:784px;" width="7" height="7" viewBox="0 0 7 7"><path d="M0 0h6.5L0 6.5z" fill="#008000"/></svg>
<div style="left:1371px;top:783px;width:76px;height:21px;box-sizing:border-box;background:#D9E1F2;background-clip:padding-box;border-top:1px dotted #000;border-bottom:1px dotted #000;border-left:1px dotted #000;border-right:1px dotted #000;"></div>
<div class="t" style="left:1325.00px;width:120px;text-align:right;top:784px;font-size:11px;line-height:20px;font-weight:700;color:#000;;transform:scaleX(1.1000);transform-origin:100% 0">18 203</div>
<svg style="position:absolute;left:1372px;top:784px;" width="7" height="7" viewBox="0 0 7 7"><path d="M0 0h6.5L0 6.5z" fill="#008000"/></svg>
<div style="left:1458px;top:783px;width:76px;height:21px;box-sizing:border-box;background:#D9E1F2;background-clip:padding-box;border-top:1px dotted #000;border-bottom:1px dotted #000;border-left:1px dotted #000;border-right:1px dotted #000;"></div>
<div class="t" style="left:1412.00px;width:120px;text-align:right;top:784px;font-size:11px;line-height:20px;font-weight:700;color:#000;;transform:scaleX(1.1000);transform-origin:100% 0">3 690</div>
<svg style="position:absolute;left:1459px;top:784px;" width="7" height="7" viewBox="0 0 7 7"><path d="M0 0h6.5L0 6.5z" fill="#008000"/></svg>
<div style="left:1545px;top:783px;width:76px;height:21px;box-sizing:border-box;background:#D9E1F2;background-clip:padding-box;border-top:1px dotted #000;border-bottom:1px dotted #000;border-left:1px dotted #000;border-right:1px dotted #000;"></div>
<div class="t" style="left:1499.00px;width:120px;text-align:right;top:784px;font-size:11px;line-height:20px;font-weight:700;color:#000;;transform:scaleX(1.1000);transform-origin:100% 0">5 220</div>
<svg style="position:absolute;left:1546px;top:784px;" width="7" height="7" viewBox="0 0 7 7"><path d="M0 0h6.5L0 6.5z" fill="#008000"/></svg>
<div style="left:1632px;top:783px;width:76px;height:21px;box-sizing:border-box;background:#D9E1F2;background-clip:padding-box;border-top:1px dotted #000;border-bottom:1px dotted #000;border-left:1px dotted #000;border-right:1px dotted #000;"></div>
<div class="t" style="left:1586.00px;width:120px;text-align:right;top:784px;font-size:11px;line-height:20px;font-weight:700;color:#000;;transform:scaleX(1.1000);transform-origin:100% 0">19 530</div>
<svg style="position:absolute;left:1633px;top:784px;" width="7" height="7" viewBox="0 0 7 7"><path d="M0 0h6.5L0 6.5z" fill="#008000"/></svg>
<div class="t" style="left:1162.00px;width:120px;text-align:right;top:784px;font-size:11px;line-height:20px;font-weight:400;color:#000;;transform:scaleX(1.1000);transform-origin:100% 0">0</div>
<div class="t" style="left:1249.00px;width:120px;text-align:right;top:784px;font-size:11px;line-height:20px;font-weight:400;color:#000;;transform:scaleX(1.1000);transform-origin:100% 0">0</div>
<div class="t" style="left:1336.00px;width:120px;text-align:right;top:784px;font-size:11px;line-height:20px;font-weight:400;color:#000;;transform:scaleX(1.1000);transform-origin:100% 0">0</div>
<div class="t" style="left:1423.00px;width:120px;text-align:right;top:784px;font-size:11px;line-height:20px;font-weight:400;color:#000;;transform:scaleX(1.1000);transform-origin:100% 0">0</div>
<div class="t" style="left:1510.00px;width:120px;text-align:right;top:784px;font-size:11px;line-height:20px;font-weight:400;color:#000;;transform:scaleX(1.1000);transform-origin:100% 0">0</div>
<div class="t" style="left:1597.00px;width:120px;text-align:right;top:784px;font-size:11px;line-height:20px;font-weight:400;color:#000;;transform:scaleX(1.1000);transform-origin:100% 0">0</div>
<div style="left:1719px;top:783px;width:76px;height:21px;box-sizing:border-box;background:#FFF2CC;background-clip:padding-box;border-top:1px dotted #000;border-bottom:1px dotted #000;border-left:1px dotted #000;border-right:1px dotted #000;"></div>
<div class="t" style="left:1673.00px;width:120px;text-align:right;top:784px;font-size:11px;line-height:20px;font-weight:400;color:#000;;transform:scaleX(1.1000);transform-origin:100% 0">5 723</div>
<div style="left:1794px;top:783px;width:76px;height:21px;box-sizing:border-box;background:#FFF2CC;background-clip:padding-box;border-top:1px dotted #000;border-bottom:1px dotted #000;border-left:1px dotted #000;border-right:1px dotted #000;"></div>
<div class="t" style="left:1748.00px;width:120px;text-align:right;top:784px;font-size:11px;line-height:20px;font-weight:400;color:#000;;transform:scaleX(1.1000);transform-origin:100% 0">6 275</div>
<div style="left:1869px;top:783px;width:76px;height:21px;box-sizing:border-box;background:#FFF2CC;background-clip:padding-box;border-top:1px dotted #000;border-bottom:1px dotted #000;border-left:1px dotted #000;border-right:1px dotted #000;"></div>
<div style="left:13px;top:803px;width:273px;height:21px;box-sizing:border-box;border-top:1px solid #b4b4b4;border-bottom:1px solid #b4b4b4;border-left:1px solid #b4b4b4;border-right:1px solid #b4b4b4;"></div>
<div class="t" style="left:19.00px;top:804px;font-size:11px;line-height:20px;font-weight:400;color:#000;;transform:scaleX(1.0901);transform-origin:0 0">Zużycie energii:</div>
<div style="left:297px;top:803px;width:76px;height:21px;box-sizing:border-box;background:#D9E1F2;background-clip:padding-box;border-top:1px dotted #000;border-bottom:1px dotted #000;border-left:1px dotted #000;border-right:1px dotted #000;"></div>
<div class="t" style="left:251.00px;width:120px;text-align:right;top:804px;font-size:11px;line-height:20px;font-weight:400;color:#000;;transform:scaleX(1.1000);transform-origin:100% 0">65 893</div>
<div style="left:372px;top:803px;width:76px;height:21px;box-sizing:border-box;background:#D9E1F2;background-clip:padding-box;border-top:1px dotted #000;border-bottom:1px dotted #000;border-left:1px dotted #000;border-right:1px dotted #000;"></div>
<div class="t" style="left:326.00px;width:120px;text-align:right;top:804px;font-size:11px;line-height:20px;font-weight:400;color:#000;;transform:scaleX(1.1000);transform-origin:100% 0">67 897</div>
<div style="left:447px;top:803px;width:76px;height:21px;box-sizing:border-box;background:#D9E1F2;background-clip:padding-box;border-top:1px dotted #000;border-bottom:1px dotted #000;border-left:1px dotted #000;border-right:1px dotted #000;"></div>
<div class="t" style="left:401.00px;width:120px;text-align:right;top:804px;font-size:11px;line-height:20px;font-weight:400;color:#000;;transform:scaleX(1.1000);transform-origin:100% 0">65 395</div>
<div style="left:522px;top:803px;width:76px;height:21px;box-sizing:border-box;background:#D9E1F2;background-clip:padding-box;border-top:1px dotted #000;border-bottom:1px dotted #000;border-left:1px dotted #000;border-right:1px dotted #000;"></div>
<div class="t" style="left:476.00px;width:120px;text-align:right;top:804px;font-size:11px;line-height:20px;font-weight:400;color:#000;;transform:scaleX(1.1000);transform-origin:100% 0">61 573</div>
<div style="left:597px;top:803px;width:76px;height:21px;box-sizing:border-box;background:#D9E1F2;background-clip:padding-box;border-top:1px dotted #000;border-bottom:1px dotted #000;border-left:1px dotted #000;border-right:1px dotted #000;"></div>
<div class="t" style="left:551.00px;width:120px;text-align:right;top:804px;font-size:11px;line-height:20px;font-weight:400;color:#000;;transform:scaleX(1.1000);transform-origin:100% 0">60 004</div>
<div style="left:672px;top:803px;width:76px;height:21px;box-sizing:border-box;background:#D9E1F2;background-clip:padding-box;border-top:1px dotted #000;border-bottom:1px dotted #000;border-left:1px dotted #000;border-right:1px dotted #000;"></div>
<div class="t" style="left:626.00px;width:120px;text-align:right;top:804px;font-size:11px;line-height:20px;font-weight:400;color:#000;;transform:scaleX(1.1000);transform-origin:100% 0">58 159</div>
<div style="left:747px;top:803px;width:76px;height:21px;box-sizing:border-box;background:#D9E1F2;background-clip:padding-box;border-top:1px dotted #000;border-bottom:1px dotted #000;border-left:1px dotted #000;border-right:1px dotted #000;"></div>
<div class="t" style="left:701.00px;width:120px;text-align:right;top:804px;font-size:11px;line-height:20px;font-weight:400;color:#000;;transform:scaleX(1.1000);transform-origin:100% 0">69 739</div>
<div style="left:822px;top:803px;width:76px;height:21px;box-sizing:border-box;background:#D9E1F2;background-clip:padding-box;border-top:1px dotted #000;border-bottom:1px dotted #000;border-left:1px dotted #000;border-right:1px dotted #000;"></div>
<div class="t" style="left:776.00px;width:120px;text-align:right;top:804px;font-size:11px;line-height:20px;font-weight:400;color:#000;;transform:scaleX(1.1000);transform-origin:100% 0">42 433</div>
<div style="left:897px;top:803px;width:76px;height:21px;box-sizing:border-box;background:#D9E1F2;background-clip:padding-box;border-top:1px dotted #000;border-bottom:1px dotted #000;border-left:1px dotted #000;border-right:1px dotted #000;"></div>
<div class="t" style="left:851.00px;width:120px;text-align:right;top:804px;font-size:11px;line-height:20px;font-weight:400;color:#000;;transform:scaleX(1.1000);transform-origin:100% 0">60 594</div>
<div style="left:972px;top:803px;width:76px;height:21px;box-sizing:border-box;background:#D9E1F2;background-clip:padding-box;border-top:1px dotted #000;border-bottom:1px dotted #000;border-left:1px dotted #000;border-right:1px dotted #000;"></div>
<div class="t" style="left:926.00px;width:120px;text-align:right;top:804px;font-size:11px;line-height:20px;font-weight:400;color:#000;;transform:scaleX(1.1000);transform-origin:100% 0">63 452</div>
<div style="left:1047px;top:803px;width:76px;height:21px;box-sizing:border-box;background:#D9E1F2;background-clip:padding-box;border-top:1px dotted #000;border-bottom:1px dotted #000;border-left:1px dotted #000;border-right:1px dotted #000;"></div>
<div class="t" style="left:1001.00px;width:120px;text-align:right;top:804px;font-size:11px;line-height:20px;font-weight:400;color:#000;;transform:scaleX(1.1000);transform-origin:100% 0">65 836</div>
<div style="left:1122px;top:803px;width:76px;height:21px;box-sizing:border-box;background:#D9E1F2;background-clip:padding-box;border-top:1px dotted #000;border-bottom:1px dotted #000;border-left:1px dotted #000;border-right:1px dotted #000;"></div>
<div class="t" style="left:1076.00px;width:120px;text-align:right;top:804px;font-size:11px;line-height:20px;font-weight:400;color:#000;;transform:scaleX(1.1000);transform-origin:100% 0">45 726</div>
<div style="left:1197px;top:803px;width:76px;height:21px;box-sizing:border-box;background:#D9E1F2;background-clip:padding-box;border-top:1px dotted #000;border-bottom:1px dotted #000;border-left:1px dotted #000;border-right:1px dotted #000;"></div>
<div class="t" style="left:1151.00px;width:120px;text-align:right;top:804px;font-size:11px;line-height:20px;font-weight:700;color:#000;;transform:scaleX(1.1000);transform-origin:100% 0">726 701</div>
<div style="left:1284px;top:803px;width:76px;height:21px;box-sizing:border-box;background:#D9E1F2;background-clip:padding-box;border-top:1px dotted #000;border-bottom:1px dotted #000;border-left:1px dotted #000;border-right:1px dotted #000;"></div>
<div class="t" style="left:1238.00px;width:120px;text-align:right;top:804px;font-size:11px;line-height:20px;font-weight:700;color:#000;;transform:scaleX(1.1000);transform-origin:100% 0">70 245</div>
<svg style="position:absolute;left:1285px;top:804px;" width="7" height="7" viewBox="0 0 7 7"><path d="M0 0h6.5L0 6.5z" fill="#008000"/></svg>
<div style="left:1371px;top:803px;width:76px;height:21px;box-sizing:border-box;background:#D9E1F2;background-clip:padding-box;border-top:1px dotted #000;border-bottom:1px dotted #000;border-left:1px dotted #000;border-right:1px dotted #000;"></div>
<div class="t" style="left:1325.00px;width:120px;text-align:right;top:804px;font-size:11px;line-height:20px;font-weight:700;color:#000;;transform:scaleX(1.1000);transform-origin:100% 0">426 801</div>
<svg style="position:absolute;left:1372px;top:804px;" width="7" height="7" viewBox="0 0 7 7"><path d="M0 0h6.5L0 6.5z" fill="#008000"/></svg>
<div style="left:1458px;top:803px;width:76px;height:21px;box-sizing:border-box;background:#D9E1F2;background-clip:padding-box;border-top:1px dotted #000;border-bottom:1px dotted #000;border-left:1px dotted #000;border-right:1px dotted #000;"></div>
<div class="t" style="left:1412.00px;width:120px;text-align:right;top:804px;font-size:11px;line-height:20px;font-weight:700;color:#000;;transform:scaleX(1.1000);transform-origin:100% 0">31 906</div>
<svg style="position:absolute;left:1459px;top:804px;" width="7" height="7" viewBox="0 0 7 7"><path d="M0 0h6.5L0 6.5z" fill="#008000"/></svg>
<div style="left:1545px;top:803px;width:76px;height:21px;box-sizing:border-box;background:#D9E1F2;background-clip:padding-box;border-top:1px dotted #000;border-bottom:1px dotted #000;border-left:1px dotted #000;border-right:1px dotted #000;"></div>
<div class="t" style="left:1499.00px;width:120px;text-align:right;top:804px;font-size:11px;line-height:20px;font-weight:700;color:#000;;transform:scaleX(1.1000);transform-origin:100% 0">43 984</div>
<svg style="position:absolute;left:1546px;top:804px;" width="7" height="7" viewBox="0 0 7 7"><path d="M0 0h6.5L0 6.5z" fill="#008000"/></svg>
<div style="left:1632px;top:803px;width:76px;height:21px;box-sizing:border-box;background:#D9E1F2;background-clip:padding-box;border-top:1px dotted #000;border-bottom:1px dotted #000;border-left:1px dotted #000;border-right:1px dotted #000;"></div>
<div class="t" style="left:1586.00px;width:120px;text-align:right;top:804px;font-size:11px;line-height:20px;font-weight:700;color:#000;;transform:scaleX(1.1000);transform-origin:100% 0">25 139</div>
<svg style="position:absolute;left:1633px;top:804px;" width="7" height="7" viewBox="0 0 7 7"><path d="M0 0h6.5L0 6.5z" fill="#008000"/></svg>
<div class="t" style="left:1162.00px;width:120px;text-align:right;top:804px;font-size:11px;line-height:20px;font-weight:400;color:#000;;transform:scaleX(1.1000);transform-origin:100% 0">0</div>
<div style="left:1360px;top:804px;width:11px;height:19px;background:#d9dce2"></div>
<div class="t" style="left:1249.00px;width:120px;text-align:right;top:804px;font-size:11px;line-height:20px;font-weight:400;color:#000;;transform:scaleX(1.1000);transform-origin:100% 0">0</div>
<div style="left:1447px;top:804px;width:11px;height:19px;background:#d9dce2"></div>
<div class="t" style="left:1336.00px;width:120px;text-align:right;top:804px;font-size:11px;line-height:20px;font-weight:400;color:#000;;transform:scaleX(1.1000);transform-origin:100% 0">0</div>
<div style="left:1534px;top:804px;width:11px;height:19px;background:#d9dce2"></div>
<div class="t" style="left:1423.00px;width:120px;text-align:right;top:804px;font-size:11px;line-height:20px;font-weight:400;color:#000;;transform:scaleX(1.1000);transform-origin:100% 0">0</div>
<div style="left:1621px;top:804px;width:11px;height:19px;background:#d9dce2"></div>
<div class="t" style="left:1510.00px;width:120px;text-align:right;top:804px;font-size:11px;line-height:20px;font-weight:400;color:#000;;transform:scaleX(1.1000);transform-origin:100% 0">0</div>
<div style="left:1708px;top:804px;width:11px;height:19px;background:#d9dce2"></div>
<div class="t" style="left:1597.00px;width:120px;text-align:right;top:804px;font-size:11px;line-height:20px;font-weight:400;color:#000;;transform:scaleX(1.1000);transform-origin:100% 0">0</div>
<div style="left:1719px;top:803px;width:76px;height:21px;box-sizing:border-box;background:#FFF2CC;background-clip:padding-box;border-top:1px dotted #000;border-bottom:1px dotted #000;border-left:1px dotted #000;border-right:1px dotted #000;"></div>
<div class="t" style="left:1673.00px;width:120px;text-align:right;top:804px;font-size:11px;line-height:20px;font-weight:400;color:#000;;transform:scaleX(1.1000);transform-origin:100% 0">56 778</div>
<div style="left:1794px;top:803px;width:76px;height:21px;box-sizing:border-box;background:#FFF2CC;background-clip:padding-box;border-top:1px dotted #000;border-bottom:1px dotted #000;border-left:1px dotted #000;border-right:1px dotted #000;"></div>
<div class="t" style="left:1748.00px;width:120px;text-align:right;top:804px;font-size:11px;line-height:20px;font-weight:400;color:#000;;transform:scaleX(1.1000);transform-origin:100% 0">54 666</div>
<div style="left:1869px;top:803px;width:76px;height:21px;box-sizing:border-box;background:#FFF2CC;background-clip:padding-box;border-top:1px dotted #000;border-bottom:1px dotted #000;border-left:1px dotted #000;border-right:1px dotted #000;"></div>
<div style="left:13px;top:823px;width:273px;height:21px;box-sizing:border-box;border-top:1px solid #b4b4b4;border-bottom:1px solid #b4b4b4;border-left:1px solid #b4b4b4;border-right:1px solid #b4b4b4;"></div>
<div class="t" style="left:19.00px;top:824px;font-size:11px;line-height:20px;font-weight:400;color:#000;;transform:scaleX(1.1245);transform-origin:0 0">Usługi z tytułu obróbki obcej</div>
<div style="left:297px;top:823px;width:76px;height:21px;box-sizing:border-box;background:#D9E1F2;background-clip:padding-box;border-top:1px dotted #000;border-bottom:1px dotted #000;border-left:1px dotted #000;border-right:1px dotted #000;"></div>
<div class="t" style="left:251.00px;width:120px;text-align:right;top:824px;font-size:11px;line-height:20px;font-weight:400;color:#000;;transform:scaleX(1.1000);transform-origin:100% 0">23 400</div>
<div style="left:372px;top:823px;width:76px;height:21px;box-sizing:border-box;background:#D9E1F2;background-clip:padding-box;border-top:1px dotted #000;border-bottom:1px dotted #000;border-left:1px dotted #000;border-right:1px dotted #000;"></div>
<div class="t" style="left:326.00px;width:120px;text-align:right;top:824px;font-size:11px;line-height:20px;font-weight:400;color:#000;;transform:scaleX(1.1000);transform-origin:100% 0">27 300</div>
<div style="left:447px;top:823px;width:76px;height:21px;box-sizing:border-box;background:#D9E1F2;background-clip:padding-box;border-top:1px dotted #000;border-bottom:1px dotted #000;border-left:1px dotted #000;border-right:1px dotted #000;"></div>
<div class="t" style="left:401.00px;width:120px;text-align:right;top:824px;font-size:11px;line-height:20px;font-weight:400;color:#000;;transform:scaleX(1.1000);transform-origin:100% 0">35 100</div>
<div style="left:522px;top:823px;width:76px;height:21px;box-sizing:border-box;background:#D9E1F2;background-clip:padding-box;border-top:1px dotted #000;border-bottom:1px dotted #000;border-left:1px dotted #000;border-right:1px dotted #000;"></div>
<div class="t" style="left:476.00px;width:120px;text-align:right;top:824px;font-size:11px;line-height:20px;font-weight:400;color:#000;;transform:scaleX(1.1000);transform-origin:100% 0">27 300</div>
<div style="left:597px;top:823px;width:76px;height:21px;box-sizing:border-box;background:#D9E1F2;background-clip:padding-box;border-top:1px dotted #000;border-bottom:1px dotted #000;border-left:1px dotted #000;border-right:1px dotted #000;"></div>
<div class="t" style="left:551.00px;width:120px;text-align:right;top:824px;font-size:11px;line-height:20px;font-weight:400;color:#000;;transform:scaleX(1.1000);transform-origin:100% 0">31 200</div>
<div style="left:672px;top:823px;width:76px;height:21px;box-sizing:border-box;background:#D9E1F2;background-clip:padding-box;border-top:1px dotted #000;border-bottom:1px dotted #000;border-left:1px dotted #000;border-right:1px dotted #000;"></div>
<div class="t" style="left:626.00px;width:120px;text-align:right;top:824px;font-size:11px;line-height:20px;font-weight:400;color:#000;;transform:scaleX(1.1000);transform-origin:100% 0">27 300</div>
<div style="left:747px;top:823px;width:76px;height:21px;box-sizing:border-box;background:#D9E1F2;background-clip:padding-box;border-top:1px dotted #000;border-bottom:1px dotted #000;border-left:1px dotted #000;border-right:1px dotted #000;"></div>
<div class="t" style="left:701.00px;width:120px;text-align:right;top:824px;font-size:11px;line-height:20px;font-weight:400;color:#000;;transform:scaleX(1.1000);transform-origin:100% 0">31 200</div>
<div style="left:822px;top:823px;width:76px;height:21px;box-sizing:border-box;background:#D9E1F2;background-clip:padding-box;border-top:1px dotted #000;border-bottom:1px dotted #000;border-left:1px dotted #000;border-right:1px dotted #000;"></div>
<div class="t" style="left:776.00px;width:120px;text-align:right;top:824px;font-size:11px;line-height:20px;font-weight:400;color:#000;;transform:scaleX(1.1000);transform-origin:100% 0">19 500</div>
<div style="left:897px;top:823px;width:76px;height:21px;box-sizing:border-box;background:#D9E1F2;background-clip:padding-box;border-top:1px dotted #000;border-bottom:1px dotted #000;border-left:1px dotted #000;border-right:1px dotted #000;"></div>
<div class="t" style="left:851.00px;width:120px;text-align:right;top:824px;font-size:11px;line-height:20px;font-weight:400;color:#000;;transform:scaleX(1.1000);transform-origin:100% 0">23 400</div>
<div style="left:972px;top:823px;width:76px;height:21px;box-sizing:border-box;background:#D9E1F2;background-clip:padding-box;border-top:1px dotted #000;border-bottom:1px dotted #000;border-left:1px dotted #000;border-right:1px dotted #000;"></div>
<div class="t" style="left:926.00px;width:120px;text-align:right;top:824px;font-size:11px;line-height:20px;font-weight:400;color:#000;;transform:scaleX(1.1000);transform-origin:100% 0">27 300</div>
<div style="left:1047px;top:823px;width:76px;height:21px;box-sizing:border-box;background:#D9E1F2;background-clip:padding-box;border-top:1px dotted #000;border-bottom:1px dotted #000;border-left:1px dotted #000;border-right:1px dotted #000;"></div>
<div class="t" style="left:1001.00px;width:120px;text-align:right;top:824px;font-size:11px;line-height:20px;font-weight:400;color:#000;;transform:scaleX(1.1000);transform-origin:100% 0">23 400</div>
<div style="left:1122px;top:823px;width:76px;height:21px;box-sizing:border-box;background:#D9E1F2;background-clip:padding-box;border-top:1px dotted #000;border-bottom:1px dotted #000;border-left:1px dotted #000;border-right:1px dotted #000;"></div>
<div class="t" style="left:1076.00px;width:120px;text-align:right;top:824px;font-size:11px;line-height:20px;font-weight:400;color:#000;;transform:scaleX(1.1000);transform-origin:100% 0">15 600</div>
<div style="left:1197px;top:823px;width:76px;height:21px;box-sizing:border-box;background:#D9E1F2;background-clip:padding-box;border-top:1px dotted #000;border-bottom:1px dotted #000;border-left:1px dotted #000;border-right:1px dotted #000;"></div>
<div class="t" style="left:1151.00px;width:120px;text-align:right;top:824px;font-size:11px;line-height:20px;font-weight:700;color:#000;;transform:scaleX(1.1000);transform-origin:100% 0">312 000</div>
<div style="left:1284px;top:823px;width:76px;height:21px;box-sizing:border-box;background:#D9E1F2;background-clip:padding-box;border-top:1px dotted #000;border-bottom:1px dotted #000;border-left:1px dotted #000;border-right:1px dotted #000;"></div>
<div class="t" style="left:1238.00px;width:120px;text-align:right;top:824px;font-size:11px;line-height:20px;font-weight:700;color:#000;;transform:scaleX(1.1000);transform-origin:100% 0">0</div>
<svg style="position:absolute;left:1285px;top:824px;" width="7" height="7" viewBox="0 0 7 7"><path d="M0 0h6.5L0 6.5z" fill="#008000"/></svg>
<div style="left:1371px;top:823px;width:76px;height:21px;box-sizing:border-box;background:#D9E1F2;background-clip:padding-box;border-top:1px dotted #000;border-bottom:1px dotted #000;border-left:1px dotted #000;border-right:1px dotted #000;"></div>
<div class="t" style="left:1325.00px;width:120px;text-align:right;top:824px;font-size:11px;line-height:20px;font-weight:700;color:#000;;transform:scaleX(1.1000);transform-origin:100% 0">0</div>
<svg style="position:absolute;left:1372px;top:824px;" width="7" height="7" viewBox="0 0 7 7"><path d="M0 0h6.5L0 6.5z" fill="#008000"/></svg>
<div style="left:1458px;top:823px;width:76px;height:21px;box-sizing:border-box;background:#D9E1F2;background-clip:padding-box;border-top:1px dotted #000;border-bottom:1px dotted #000;border-left:1px dotted #000;border-right:1px dotted #000;"></div>
<div class="t" style="left:1412.00px;width:120px;text-align:right;top:824px;font-size:11px;line-height:20px;font-weight:700;color:#000;;transform:scaleX(1.1000);transform-origin:100% 0">0</div>
<svg style="position:absolute;left:1459px;top:824px;" width="7" height="7" viewBox="0 0 7 7"><path d="M0 0h6.5L0 6.5z" fill="#008000"/></svg>
<div style="left:1545px;top:823px;width:76px;height:21px;box-sizing:border-box;background:#D9E1F2;background-clip:padding-box;border-top:1px dotted #000;border-bottom:1px dotted #000;border-left:1px dotted #000;border-right:1px dotted #000;"></div>
<div class="t" style="left:1499.00px;width:120px;text-align:right;top:824px;font-size:11px;line-height:20px;font-weight:700;color:#000;;transform:scaleX(1.1000);transform-origin:100% 0">0</div>
<svg style="position:absolute;left:1546px;top:824px;" width="7" height="7" viewBox="0 0 7 7"><path d="M0 0h6.5L0 6.5z" fill="#008000"/></svg>
<div style="left:1632px;top:823px;width:76px;height:21px;box-sizing:border-box;background:#D9E1F2;background-clip:padding-box;border-top:1px dotted #000;border-bottom:1px dotted #000;border-left:1px dotted #000;border-right:1px dotted #000;"></div>
<div class="t" style="left:1586.00px;width:120px;text-align:right;top:824px;font-size:11px;line-height:20px;font-weight:700;color:#000;;transform:scaleX(1.1000);transform-origin:100% 0">0</div>
<svg style="position:absolute;left:1633px;top:824px;" width="7" height="7" viewBox="0 0 7 7"><path d="M0 0h6.5L0 6.5z" fill="#008000"/></svg>
<div class="t" style="left:1162.00px;width:120px;text-align:right;top:824px;font-size:11px;line-height:20px;font-weight:400;color:#000;;transform:scaleX(1.1000);transform-origin:100% 0">0</div>
<div class="t" style="left:1249.00px;width:120px;text-align:right;top:824px;font-size:11px;line-height:20px;font-weight:400;color:#000;;transform:scaleX(1.1000);transform-origin:100% 0">0</div>
<div class="t" style="left:1336.00px;width:120px;text-align:right;top:824px;font-size:11px;line-height:20px;font-weight:400;color:#000;;transform:scaleX(1.1000);transform-origin:100% 0">0</div>
<div class="t" style="left:1423.00px;width:120px;text-align:right;top:824px;font-size:11px;line-height:20px;font-weight:400;color:#000;;transform:scaleX(1.1000);transform-origin:100% 0">0</div>
<div class="t" style="left:1510.00px;width:120px;text-align:right;top:824px;font-size:11px;line-height:20px;font-weight:400;color:#000;;transform:scaleX(1.1000);transform-origin:100% 0">0</div>
<div class="t" style="left:1597.00px;width:120px;text-align:right;top:824px;font-size:11px;line-height:20px;font-weight:400;color:#000;;transform:scaleX(1.1000);transform-origin:100% 0">0</div>
<div style="left:1719px;top:823px;width:76px;height:21px;box-sizing:border-box;background:#FFF2CC;background-clip:padding-box;border-top:1px dotted #000;border-bottom:1px dotted #000;border-left:1px dotted #000;border-right:1px dotted #000;"></div>
<div class="t" style="left:1673.00px;width:120px;text-align:right;top:824px;font-size:11px;line-height:20px;font-weight:400;color:#000;;transform:scaleX(1.1000);transform-origin:100% 0">7 020</div>
<div style="left:1794px;top:823px;width:76px;height:21px;box-sizing:border-box;background:#FFF2CC;background-clip:padding-box;border-top:1px dotted #000;border-bottom:1px dotted #000;border-left:1px dotted #000;border-right:1px dotted #000;"></div>
<div class="t" style="left:1748.00px;width:120px;text-align:right;top:824px;font-size:11px;line-height:20px;font-weight:400;color:#000;;transform:scaleX(1.1000);transform-origin:100% 0">8 190</div>
<div style="left:1869px;top:823px;width:76px;height:21px;box-sizing:border-box;background:#FFF2CC;background-clip:padding-box;border-top:1px dotted #000;border-bottom:1px dotted #000;border-left:1px dotted #000;border-right:1px dotted #000;"></div>
<div style="left:13px;top:843px;width:273px;height:21px;box-sizing:border-box;border-top:1px solid #b4b4b4;border-bottom:1px solid #b4b4b4;border-left:1px solid #b4b4b4;border-right:1px solid #b4b4b4;"></div>
<div class="t" style="left:22.00px;top:844px;font-size:11px;line-height:20px;font-weight:400;color:#000;;transform:scaleX(1.1758);transform-origin:0 0">uslugi dla produkcji</div>
<div style="left:297px;top:843px;width:76px;height:21px;box-sizing:border-box;background:#D9E1F2;background-clip:padding-box;border-top:1px dotted #000;border-bottom:1px dotted #000;border-left:1px dotted #000;border-right:1px dotted #000;"></div>
<div class="t" style="left:251.00px;width:120px;text-align:right;top:844px;font-size:11px;line-height:20px;font-weight:400;color:#000;;transform:scaleX(1.1000);transform-origin:100% 0">4 680</div>
<div style="left:372px;top:843px;width:76px;height:21px;box-sizing:border-box;background:#D9E1F2;background-clip:padding-box;border-top:1px dotted #000;border-bottom:1px dotted #000;border-left:1px dotted #000;border-right:1px dotted #000;"></div>
<div class="t" style="left:326.00px;width:120px;text-align:right;top:844px;font-size:11px;line-height:20px;font-weight:400;color:#000;;transform:scaleX(1.1000);transform-origin:100% 0">4 680</div>
<div style="left:447px;top:843px;width:76px;height:21px;box-sizing:border-box;background:#D9E1F2;background-clip:padding-box;border-top:1px dotted #000;border-bottom:1px dotted #000;border-left:1px dotted #000;border-right:1px dotted #000;"></div>
<div class="t" style="left:401.00px;width:120px;text-align:right;top:844px;font-size:11px;line-height:20px;font-weight:400;color:#000;;transform:scaleX(1.1000);transform-origin:100% 0">4 680</div>
<div style="left:522px;top:843px;width:76px;height:21px;box-sizing:border-box;background:#D9E1F2;background-clip:padding-box;border-top:1px dotted #000;border-bottom:1px dotted #000;border-left:1px dotted #000;border-right:1px dotted #000;"></div>
<div class="t" style="left:476.00px;width:120px;text-align:right;top:844px;font-size:11px;line-height:20px;font-weight:400;color:#000;;transform:scaleX(1.1000);transform-origin:100% 0">4 680</div>
<div style="left:597px;top:843px;width:76px;height:21px;box-sizing:border-box;background:#D9E1F2;background-clip:padding-box;border-top:1px dotted #000;border-bottom:1px dotted #000;border-left:1px dotted #000;border-right:1px dotted #000;"></div>
<div class="t" style="left:551.00px;width:120px;text-align:right;top:844px;font-size:11px;line-height:20px;font-weight:400;color:#000;;transform:scaleX(1.1000);transform-origin:100% 0">4 680</div>
<div style="left:672px;top:843px;width:76px;height:21px;box-sizing:border-box;background:#D9E1F2;background-clip:padding-box;border-top:1px dotted #000;border-bottom:1px dotted #000;border-left:1px dotted #000;border-right:1px dotted #000;"></div>
<div class="t" style="left:626.00px;width:120px;text-align:right;top:844px;font-size:11px;line-height:20px;font-weight:400;color:#000;;transform:scaleX(1.1000);transform-origin:100% 0">4 680</div>
<div style="left:747px;top:843px;width:76px;height:21px;box-sizing:border-box;background:#D9E1F2;background-clip:padding-box;border-top:1px dotted #000;border-bottom:1px dotted #000;border-left:1px dotted #000;border-right:1px dotted #000;"></div>
<div class="t" style="left:701.00px;width:120px;text-align:right;top:844px;font-size:11px;line-height:20px;font-weight:400;color:#000;;transform:scaleX(1.1000);transform-origin:100% 0">4 680</div>
<div style="left:822px;top:843px;width:76px;height:21px;box-sizing:border-box;background:#D9E1F2;background-clip:padding-box;border-top:1px dotted #000;border-bottom:1px dotted #000;border-left:1px dotted #000;border-right:1px dotted #000;"></div>
<div class="t" style="left:776.00px;width:120px;text-align:right;top:844px;font-size:11px;line-height:20px;font-weight:400;color:#000;;transform:scaleX(1.1000);transform-origin:100% 0">4 680</div>
<div style="left:897px;top:843px;width:76px;height:21px;box-sizing:border-box;background:#D9E1F2;background-clip:padding-box;border-top:1px dotted #000;border-bottom:1px dotted #000;border-left:1px dotted #000;border-right:1px dotted #000;"></div>
<div class="t" style="left:851.00px;width:120px;text-align:right;top:844px;font-size:11px;line-height:20px;font-weight:400;color:#000;;transform:scaleX(1.1000);transform-origin:100% 0">4 680</div>
<div style="left:972px;top:843px;width:76px;height:21px;box-sizing:border-box;background:#D9E1F2;background-clip:padding-box;border-top:1px dotted #000;border-bottom:1px dotted #000;border-left:1px dotted #000;border-right:1px dotted #000;"></div>
<div class="t" style="left:926.00px;width:120px;text-align:right;top:844px;font-size:11px;line-height:20px;font-weight:400;color:#000;;transform:scaleX(1.1000);transform-origin:100% 0">4 680</div>
<div style="left:1047px;top:843px;width:76px;height:21px;box-sizing:border-box;background:#D9E1F2;background-clip:padding-box;border-top:1px dotted #000;border-bottom:1px dotted #000;border-left:1px dotted #000;border-right:1px dotted #000;"></div>
<div class="t" style="left:1001.00px;width:120px;text-align:right;top:844px;font-size:11px;line-height:20px;font-weight:400;color:#000;;transform:scaleX(1.1000);transform-origin:100% 0">4 680</div>
<div style="left:1122px;top:843px;width:76px;height:21px;box-sizing:border-box;background:#D9E1F2;background-clip:padding-box;border-top:1px dotted #000;border-bottom:1px dotted #000;border-left:1px dotted #000;border-right:1px dotted #000;"></div>
<div class="t" style="left:1076.00px;width:120px;text-align:right;top:844px;font-size:11px;line-height:20px;font-weight:400;color:#000;;transform:scaleX(1.1000);transform-origin:100% 0">4 680</div>
<div style="left:1197px;top:843px;width:76px;height:21px;box-sizing:border-box;background:#D9E1F2;background-clip:padding-box;border-top:1px dotted #000;border-bottom:1px dotted #000;border-left:1px dotted #000;border-right:1px dotted #000;"></div>
<div class="t" style="left:1151.00px;width:120px;text-align:right;top:844px;font-size:11px;line-height:20px;font-weight:700;color:#000;;transform:scaleX(1.1000);transform-origin:100% 0">56 160</div>
<div style="left:1284px;top:843px;width:76px;height:21px;box-sizing:border-box;background:#D9E1F2;background-clip:padding-box;border-top:1px dotted #000;border-bottom:1px dotted #000;border-left:1px dotted #000;border-right:1px dotted #000;"></div>
<div class="t" style="left:1238.00px;width:120px;text-align:right;top:844px;font-size:11px;line-height:20px;font-weight:700;color:#000;;transform:scaleX(1.1000);transform-origin:100% 0">5 220</div>
<svg style="position:absolute;left:1285px;top:844px;" width="7" height="7" viewBox="0 0 7 7"><path d="M0 0h6.5L0 6.5z" fill="#008000"/></svg>
<div style="left:1371px;top:843px;width:76px;height:21px;box-sizing:border-box;background:#D9E1F2;background-clip:padding-box;border-top:1px dotted #000;border-bottom:1px dotted #000;border-left:1px dotted #000;border-right:1px dotted #000;"></div>
<div class="t" style="left:1325.00px;width:120px;text-align:right;top:844px;font-size:11px;line-height:20px;font-weight:700;color:#000;;transform:scaleX(1.1000);transform-origin:100% 0">48 825</div>
<svg style="position:absolute;left:1372px;top:844px;" width="7" height="7" viewBox="0 0 7 7"><path d="M0 0h6.5L0 6.5z" fill="#008000"/></svg>
<div style="left:1458px;top:843px;width:76px;height:21px;box-sizing:border-box;background:#D9E1F2;background-clip:padding-box;border-top:1px dotted #000;border-bottom:1px dotted #000;border-left:1px dotted #000;border-right:1px dotted #000;"></div>
<div class="t" style="left:1412.00px;width:120px;text-align:right;top:844px;font-size:11px;line-height:20px;font-weight:700;color:#000;;transform:scaleX(1.1000);transform-origin:100% 0">54</div>
<svg style="position:absolute;left:1459px;top:844px;" width="7" height="7" viewBox="0 0 7 7"><path d="M0 0h6.5L0 6.5z" fill="#008000"/></svg>
<div style="left:1545px;top:843px;width:76px;height:21px;box-sizing:border-box;background:#D9E1F2;background-clip:padding-box;border-top:1px dotted #000;border-bottom:1px dotted #000;border-left:1px dotted #000;border-right:1px dotted #000;"></div>
<div class="t" style="left:1499.00px;width:120px;text-align:right;top:844px;font-size:11px;line-height:20px;font-weight:700;color:#000;;transform:scaleX(1.1000);transform-origin:100% 0">216</div>
<svg style="position:absolute;left:1546px;top:844px;" width="7" height="7" viewBox="0 0 7 7"><path d="M0 0h6.5L0 6.5z" fill="#008000"/></svg>
<div style="left:1632px;top:843px;width:76px;height:21px;box-sizing:border-box;background:#D9E1F2;background-clip:padding-box;border-top:1px dotted #000;border-bottom:1px dotted #000;border-left:1px dotted #000;border-right:1px dotted #000;"></div>
<div class="t" style="left:1586.00px;width:120px;text-align:right;top:844px;font-size:11px;line-height:20px;font-weight:700;color:#000;;transform:scaleX(1.1000);transform-origin:100% 0">5 553</div>
<svg style="position:absolute;left:1633px;top:844px;" width="7" height="7" viewBox="0 0 7 7"><path d="M0 0h6.5L0 6.5z" fill="#008000"/></svg>
<div class="t" style="left:1162.00px;width:120px;text-align:right;top:844px;font-size:11px;line-height:20px;font-weight:400;color:#000;;transform:scaleX(1.1000);transform-origin:100% 0">0</div>
<div class="t" style="left:1249.00px;width:120px;text-align:right;top:844px;font-size:11px;line-height:20px;font-weight:400;color:#000;;transform:scaleX(1.1000);transform-origin:100% 0">0</div>
<div class="t" style="left:1336.00px;width:120px;text-align:right;top:844px;font-size:11px;line-height:20px;font-weight:400;color:#000;;transform:scaleX(1.1000);transform-origin:100% 0">0</div>
<div class="t" style="left:1423.00px;width:120px;text-align:right;top:844px;font-size:11px;line-height:20px;font-weight:400;color:#000;;transform:scaleX(1.1000);transform-origin:100% 0">0</div>
<div class="t" style="left:1510.00px;width:120px;text-align:right;top:844px;font-size:11px;line-height:20px;font-weight:400;color:#000;;transform:scaleX(1.1000);transform-origin:100% 0">0</div>
<div class="t" style="left:1597.00px;width:120px;text-align:right;top:844px;font-size:11px;line-height:20px;font-weight:400;color:#000;;transform:scaleX(1.1000);transform-origin:100% 0">0</div>
<div style="left:1719px;top:843px;width:76px;height:21px;box-sizing:border-box;background:#FFF2CC;background-clip:padding-box;border-top:1px dotted #000;border-bottom:1px dotted #000;border-left:1px dotted #000;border-right:1px dotted #000;"></div>
<div class="t" style="left:1673.00px;width:120px;text-align:right;top:844px;font-size:11px;line-height:20px;font-weight:400;color:#000;;transform:scaleX(1.1000);transform-origin:100% 0">4 667</div>
<div style="left:1794px;top:843px;width:76px;height:21px;box-sizing:border-box;background:#FFF2CC;background-clip:padding-box;border-top:1px dotted #000;border-bottom:1px dotted #000;border-left:1px dotted #000;border-right:1px dotted #000;"></div>
<div class="t" style="left:1748.00px;width:120px;text-align:right;top:844px;font-size:11px;line-height:20px;font-weight:400;color:#000;;transform:scaleX(1.1000);transform-origin:100% 0">4 694</div>
<div style="left:1869px;top:843px;width:76px;height:21px;box-sizing:border-box;background:#FFF2CC;background-clip:padding-box;border-top:1px dotted #000;border-bottom:1px dotted #000;border-left:1px dotted #000;border-right:1px dotted #000;"></div>
<div style="left:13px;top:883px;width:273px;height:21px;box-sizing:border-box;border-top:1px solid #b4b4b4;border-bottom:1px solid #b4b4b4;border-left:1px solid #b4b4b4;border-right:1px solid #b4b4b4;"></div>
<div class="t" style="left:19.00px;top:884px;font-size:11px;line-height:20px;font-weight:700;color:#000;;transform:scaleX(0.9962);transform-origin:0 0">Osobowy fundusz płac:</div>
<div style="left:297px;top:883px;width:76px;height:21px;box-sizing:border-box;background:#DDEBF7;background-clip:padding-box;border-top:1px dotted #000;border-bottom:1px dotted #000;border-left:1px dotted #000;border-right:1px dotted #000;"></div>
<div class="t" style="left:251.00px;width:120px;text-align:right;top:885px;font-size:12.5px;line-height:20px;font-weight:700;color:#000;;transform-origin:100% 0">795 787</div>
<div style="left:372px;top:883px;width:76px;height:21px;box-sizing:border-box;background:#DDEBF7;background-clip:padding-box;border-top:1px dotted #000;border-bottom:1px dotted #000;border-left:1px dotted #000;border-right:1px dotted #000;"></div>
<div class="t" style="left:326.00px;width:120px;text-align:right;top:885px;font-size:12.5px;line-height:20px;font-weight:700;color:#000;;transform-origin:100% 0">881 341</div>
<div style="left:447px;top:883px;width:76px;height:21px;box-sizing:border-box;background:#DDEBF7;background-clip:padding-box;border-top:1px dotted #000;border-bottom:1px dotted #000;border-left:1px dotted #000;border-right:1px dotted #000;"></div>
<div class="t" style="left:401.00px;width:120px;text-align:right;top:885px;font-size:12.5px;line-height:20px;font-weight:700;color:#000;;transform-origin:100% 0">975 668</div>
<div style="left:522px;top:883px;width:76px;height:21px;box-sizing:border-box;background:#DDEBF7;background-clip:padding-box;border-top:1px dotted #000;border-bottom:1px dotted #000;border-left:1px dotted #000;border-right:1px dotted #000;"></div>
<div class="t" style="left:476.00px;width:120px;text-align:right;top:885px;font-size:12.5px;line-height:20px;font-weight:700;color:#000;;transform-origin:100% 0">843 829</div>
<div style="left:597px;top:883px;width:76px;height:21px;box-sizing:border-box;background:#DDEBF7;background-clip:padding-box;border-top:1px dotted #000;border-bottom:1px dotted #000;border-left:1px dotted #000;border-right:1px dotted #000;"></div>
<div class="t" style="left:551.00px;width:120px;text-align:right;top:885px;font-size:12.5px;line-height:20px;font-weight:700;color:#000;;transform-origin:100% 0">912 344</div>
<div style="left:672px;top:883px;width:76px;height:21px;box-sizing:border-box;background:#DDEBF7;background-clip:padding-box;border-top:1px dotted #000;border-bottom:1px dotted #000;border-left:1px dotted #000;border-right:1px dotted #000;"></div>
<div class="t" style="left:626.00px;width:120px;text-align:right;top:885px;font-size:12.5px;line-height:20px;font-weight:700;color:#000;;transform-origin:100% 0">950 507</div>
<div style="left:747px;top:883px;width:76px;height:21px;box-sizing:border-box;background:#DDEBF7;background-clip:padding-box;border-top:1px dotted #000;border-bottom:1px dotted #000;border-left:1px dotted #000;border-right:1px dotted #000;"></div>
<div class="t" style="left:701.00px;width:120px;text-align:right;top:885px;font-size:12.5px;line-height:20px;font-weight:700;color:#000;;transform-origin:100% 0">961 491</div>
<div style="left:822px;top:883px;width:76px;height:21px;box-sizing:border-box;background:#DDEBF7;background-clip:padding-box;border-top:1px dotted #000;border-bottom:1px dotted #000;border-left:1px dotted #000;border-right:1px dotted #000;"></div>
<div class="t" style="left:776.00px;width:120px;text-align:right;top:885px;font-size:12.5px;line-height:20px;font-weight:700;color:#000;;transform-origin:100% 0">921 718</div>
<div style="left:897px;top:883px;width:76px;height:21px;box-sizing:border-box;background:#DDEBF7;background-clip:padding-box;border-top:1px dotted #000;border-bottom:1px dotted #000;border-left:1px dotted #000;border-right:1px dotted #000;"></div>
<div class="t" style="left:851.00px;width:120px;text-align:right;top:885px;font-size:12.5px;line-height:20px;font-weight:700;color:#000;;transform-origin:100% 0">808 339</div>
<div style="left:972px;top:883px;width:76px;height:21px;box-sizing:border-box;background:#DDEBF7;background-clip:padding-box;border-top:1px dotted #000;border-bottom:1px dotted #000;border-left:1px dotted #000;border-right:1px dotted #000;"></div>
<div class="t" style="left:926.00px;width:120px;text-align:right;top:885px;font-size:12.5px;line-height:20px;font-weight:700;color:#000;;transform-origin:100% 0">802 511</div>
<div style="left:1047px;top:883px;width:76px;height:21px;box-sizing:border-box;background:#DDEBF7;background-clip:padding-box;border-top:1px dotted #000;border-bottom:1px dotted #000;border-left:1px dotted #000;border-right:1px dotted #000;"></div>
<div class="t" style="left:1001.00px;width:120px;text-align:right;top:885px;font-size:12.5px;line-height:20px;font-weight:700;color:#000;;transform-origin:100% 0">671 683</div>
<div style="left:1122px;top:883px;width:76px;height:21px;box-sizing:border-box;background:#DDEBF7;background-clip:padding-box;border-top:1px dotted #000;border-bottom:1px dotted #000;border-left:1px dotted #000;border-right:1px dotted #000;"></div>
<div class="t" style="left:1076.00px;width:120px;text-align:right;top:885px;font-size:12.5px;line-height:20px;font-weight:700;color:#000;;transform-origin:100% 0">609 202</div>
<div style="left:1197px;top:883px;width:76px;height:21px;box-sizing:border-box;background:#D9E1F2;background-clip:padding-box;border-top:1px dotted #000;border-bottom:1px dotted #000;border-left:1px dotted #000;border-right:1px dotted #000;"></div>
<div class="t" style="left:1151.00px;width:120px;text-align:right;top:885px;font-size:12.5px;line-height:20px;font-weight:700;color:#000;;transform-origin:100% 0">10 134 420</div>
<div style="left:1284px;top:883px;width:76px;height:21px;box-sizing:border-box;background:#D9E1F2;background-clip:padding-box;border-top:1px dotted #000;border-bottom:1px dotted #000;border-left:1px dotted #000;border-right:1px dotted #000;"></div>
<div class="t" style="left:1238.00px;width:120px;text-align:right;top:885px;font-size:12.5px;line-height:20px;font-weight:700;color:#000;;transform-origin:100% 0">158 450</div>
<div style="left:1371px;top:883px;width:76px;height:21px;box-sizing:border-box;background:#D9E1F2;background-clip:padding-box;border-top:1px dotted #000;border-bottom:1px dotted #000;border-left:1px dotted #000;border-right:1px dotted #000;"></div>
<div class="t" style="left:1325.00px;width:120px;text-align:right;top:885px;font-size:12.5px;line-height:20px;font-weight:700;color:#000;;transform-origin:100% 0">60 775</div>
<div style="left:1458px;top:883px;width:76px;height:21px;box-sizing:border-box;background:#D9E1F2;background-clip:padding-box;border-top:1px dotted #000;border-bottom:1px dotted #000;border-left:1px dotted #000;border-right:1px dotted #000;"></div>
<div class="t" style="left:1412.00px;width:120px;text-align:right;top:885px;font-size:12.5px;line-height:20px;font-weight:700;color:#000;;transform-origin:100% 0">32 871</div>
<div style="left:1545px;top:883px;width:76px;height:21px;box-sizing:border-box;background:#D9E1F2;background-clip:padding-box;border-top:1px dotted #000;border-bottom:1px dotted #000;border-left:1px dotted #000;border-right:1px dotted #000;"></div>
<div class="t" style="left:1499.00px;width:120px;text-align:right;top:885px;font-size:12.5px;line-height:20px;font-weight:700;color:#000;;transform-origin:100% 0">41 597</div>
<div style="left:1632px;top:883px;width:76px;height:21px;box-sizing:border-box;background:#D9E1F2;background-clip:padding-box;border-top:1px dotted #000;border-bottom:1px dotted #000;border-left:1px dotted #000;border-right:1px dotted #000;"></div>
<div class="t" style="left:1586.00px;width:120px;text-align:right;top:885px;font-size:12.5px;line-height:20px;font-weight:700;color:#000;;transform-origin:100% 0">142 824</div>
<div class="t" style="left:1162.00px;width:120px;text-align:right;top:885px;font-size:12.5px;line-height:20px;font-weight:700;color:#000;;transform-origin:100% 0">0</div>
<div class="t" style="left:1249.00px;width:120px;text-align:right;top:885px;font-size:12.5px;line-height:20px;font-weight:700;color:#000;;transform-origin:100% 0">0</div>
<div class="t" style="left:1336.00px;width:120px;text-align:right;top:885px;font-size:12.5px;line-height:20px;font-weight:700;color:#000;;transform-origin:100% 0">0</div>
<div class="t" style="left:1423.00px;width:120px;text-align:right;top:885px;font-size:12.5px;line-height:20px;font-weight:700;color:#000;;transform-origin:100% 0">0</div>
<div class="t" style="left:1510.00px;width:120px;text-align:right;top:885px;font-size:12.5px;line-height:20px;font-weight:700;color:#000;;transform-origin:100% 0">0</div>
<div class="t" style="left:1597.00px;width:120px;text-align:right;top:885px;font-size:12.5px;line-height:20px;font-weight:700;color:#000;;transform-origin:100% 0">0</div>
<div style="left:1719px;top:883px;width:76px;height:21px;box-sizing:border-box;background:#FFF2CC;background-clip:padding-box;border-top:1px dotted #000;border-bottom:1px dotted #000;border-left:1px dotted #000;border-right:1px dotted #000;"></div>
<div class="t" style="left:1673.00px;width:120px;text-align:right;top:885px;font-size:12.5px;line-height:20px;font-weight:400;color:#000;;transform-origin:100% 0">272 812</div>
<div style="left:1794px;top:883px;width:76px;height:21px;box-sizing:border-box;background:#FFF2CC;background-clip:padding-box;border-top:1px dotted #000;border-bottom:1px dotted #000;border-left:1px dotted #000;border-right:1px dotted #000;"></div>
<div class="t" style="left:1748.00px;width:120px;text-align:right;top:885px;font-size:12.5px;line-height:20px;font-weight:400;color:#000;;transform-origin:100% 0">302 639</div>
<div style="left:1869px;top:883px;width:76px;height:21px;box-sizing:border-box;background:#FFF2CC;background-clip:padding-box;border-top:1px dotted #000;border-bottom:1px dotted #000;border-left:1px dotted #000;border-right:1px dotted #000;"></div>
<div style="left:13px;top:903px;width:273px;height:21px;box-sizing:border-box;border-top:1px solid #b4b4b4;border-bottom:1px solid #b4b4b4;border-left:1px solid #b4b4b4;border-right:1px solid #b4b4b4;"></div>
<div class="t" style="left:49.06px;top:904px;font-size:11px;line-height:20px;font-weight:400;color:#000;;transform:scaleX(1.0785);transform-origin:0 0">wynagrodzenie BP</div>
<div style="left:297px;top:903px;width:76px;height:21px;box-sizing:border-box;background:#D9E1F2;background-clip:padding-box;border-top:1px dotted #000;border-bottom:1px dotted #000;border-left:1px dotted #000;border-right:1px dotted #000;"></div>
<div class="t" style="left:251.00px;width:120px;text-align:right;top:905px;font-size:12.5px;line-height:20px;font-weight:400;color:#000;;transform-origin:100% 0">560 224</div>
<div style="left:372px;top:903px;width:76px;height:21px;box-sizing:border-box;background:#D9E1F2;background-clip:padding-box;border-top:1px dotted #000;border-bottom:1px dotted #000;border-left:1px dotted #000;border-right:1px dotted #000;"></div>
<div class="t" style="left:326.00px;width:120px;text-align:right;top:905px;font-size:12.5px;line-height:20px;font-weight:400;color:#000;;transform-origin:100% 0">620 453</div>
<div style="left:447px;top:903px;width:76px;height:21px;box-sizing:border-box;background:#D9E1F2;background-clip:padding-box;border-top:1px dotted #000;border-bottom:1px dotted #000;border-left:1px dotted #000;border-right:1px dotted #000;"></div>
<div class="t" style="left:401.00px;width:120px;text-align:right;top:905px;font-size:12.5px;line-height:20px;font-weight:400;color:#000;;transform-origin:100% 0">686 858</div>
<div style="left:522px;top:903px;width:76px;height:21px;box-sizing:border-box;background:#D9E1F2;background-clip:padding-box;border-top:1px dotted #000;border-bottom:1px dotted #000;border-left:1px dotted #000;border-right:1px dotted #000;"></div>
<div class="t" style="left:476.00px;width:120px;text-align:right;top:905px;font-size:12.5px;line-height:20px;font-weight:400;color:#000;;transform-origin:100% 0">594 045</div>
<div style="left:597px;top:903px;width:76px;height:21px;box-sizing:border-box;background:#D9E1F2;background-clip:padding-box;border-top:1px dotted #000;border-bottom:1px dotted #000;border-left:1px dotted #000;border-right:1px dotted #000;"></div>
<div class="t" style="left:551.00px;width:120px;text-align:right;top:905px;font-size:12.5px;line-height:20px;font-weight:400;color:#000;;transform-origin:100% 0">642 278</div>
<div style="left:672px;top:903px;width:76px;height:21px;box-sizing:border-box;background:#D9E1F2;background-clip:padding-box;border-top:1px dotted #000;border-bottom:1px dotted #000;border-left:1px dotted #000;border-right:1px dotted #000;"></div>
<div class="t" style="left:626.00px;width:120px;text-align:right;top:905px;font-size:12.5px;line-height:20px;font-weight:400;color:#000;;transform-origin:100% 0">669 145</div>
<div style="left:747px;top:903px;width:76px;height:21px;box-sizing:border-box;background:#D9E1F2;background-clip:padding-box;border-top:1px dotted #000;border-bottom:1px dotted #000;border-left:1px dotted #000;border-right:1px dotted #000;"></div>
<div class="t" style="left:701.00px;width:120px;text-align:right;top:905px;font-size:12.5px;line-height:20px;font-weight:400;color:#000;;transform-origin:100% 0">676 878</div>
<div style="left:822px;top:903px;width:76px;height:21px;box-sizing:border-box;background:#D9E1F2;background-clip:padding-box;border-top:1px dotted #000;border-bottom:1px dotted #000;border-left:1px dotted #000;border-right:1px dotted #000;"></div>
<div class="t" style="left:776.00px;width:120px;text-align:right;top:905px;font-size:12.5px;line-height:20px;font-weight:400;color:#000;;transform-origin:100% 0">648 878</div>
<div style="left:897px;top:903px;width:76px;height:21px;box-sizing:border-box;background:#D9E1F2;background-clip:padding-box;border-top:1px dotted #000;border-bottom:1px dotted #000;border-left:1px dotted #000;border-right:1px dotted #000;"></div>
<div class="t" style="left:851.00px;width:120px;text-align:right;top:905px;font-size:12.5px;line-height:20px;font-weight:400;color:#000;;transform-origin:100% 0">569 060</div>
<div style="left:972px;top:903px;width:76px;height:21px;box-sizing:border-box;background:#D9E1F2;background-clip:padding-box;border-top:1px dotted #000;border-bottom:1px dotted #000;border-left:1px dotted #000;border-right:1px dotted #000;"></div>
<div class="t" style="left:926.00px;width:120px;text-align:right;top:905px;font-size:12.5px;line-height:20px;font-weight:400;color:#000;;transform-origin:100% 0">564 957</div>
<div style="left:1047px;top:903px;width:76px;height:21px;box-sizing:border-box;background:#D9E1F2;background-clip:padding-box;border-top:1px dotted #000;border-bottom:1px dotted #000;border-left:1px dotted #000;border-right:1px dotted #000;"></div>
<div class="t" style="left:1001.00px;width:120px;text-align:right;top:905px;font-size:12.5px;line-height:20px;font-weight:400;color:#000;;transform-origin:100% 0">472 856</div>
<div style="left:1122px;top:903px;width:76px;height:21px;box-sizing:border-box;background:#D9E1F2;background-clip:padding-box;border-top:1px dotted #000;border-bottom:1px dotted #000;border-left:1px dotted #000;border-right:1px dotted #000;"></div>
<div class="t" style="left:1076.00px;width:120px;text-align:right;top:905px;font-size:12.5px;line-height:20px;font-weight:400;color:#000;;transform-origin:100% 0">428 871</div>
<div style="left:1197px;top:903px;width:76px;height:21px;box-sizing:border-box;background:#D9E1F2;background-clip:padding-box;border-top:1px dotted #000;border-bottom:1px dotted #000;border-left:1px dotted #000;border-right:1px dotted #000;"></div>
<div class="t" style="left:1151.00px;width:120px;text-align:right;top:905px;font-size:12.5px;line-height:20px;font-weight:700;color:#000;;transform-origin:100% 0">7 134 503</div>
<div style="left:1284px;top:903px;width:76px;height:21px;box-sizing:border-box;background:#D9E1F2;background-clip:padding-box;border-top:1px dotted #000;border-bottom:1px dotted #000;border-left:1px dotted #000;border-right:1px dotted #000;"></div>
<div class="t" style="left:1238.00px;width:120px;text-align:right;top:905px;font-size:12.5px;line-height:20px;font-weight:700;color:#000;;transform-origin:100% 0">277 913</div>
<div style="left:1371px;top:903px;width:76px;height:21px;box-sizing:border-box;background:#D9E1F2;background-clip:padding-box;border-top:1px dotted #000;border-bottom:1px dotted #000;border-left:1px dotted #000;border-right:1px dotted #000;"></div>
<div class="t" style="left:1325.00px;width:120px;text-align:right;top:905px;font-size:12.5px;line-height:20px;font-weight:700;color:#000;;transform-origin:100% 0">106 595</div>
<div style="left:1458px;top:903px;width:76px;height:21px;box-sizing:border-box;background:#D9E1F2;background-clip:padding-box;border-top:1px dotted #000;border-bottom:1px dotted #000;border-left:1px dotted #000;border-right:1px dotted #000;"></div>
<div class="t" style="left:1412.00px;width:120px;text-align:right;top:905px;font-size:12.5px;line-height:20px;font-weight:700;color:#000;;transform-origin:100% 0">57 653</div>
<div style="left:1545px;top:903px;width:76px;height:21px;box-sizing:border-box;background:#D9E1F2;background-clip:padding-box;border-top:1px dotted #000;border-bottom:1px dotted #000;border-left:1px dotted #000;border-right:1px dotted #000;"></div>
<div class="t" style="left:1499.00px;width:120px;text-align:right;top:905px;font-size:12.5px;line-height:20px;font-weight:700;color:#000;;transform-origin:100% 0">72 958</div>
<div style="left:1632px;top:903px;width:76px;height:21px;box-sizing:border-box;background:#D9E1F2;background-clip:padding-box;border-top:1px dotted #000;border-bottom:1px dotted #000;border-left:1px dotted #000;border-right:1px dotted #000;"></div>
<div class="t" style="left:1586.00px;width:120px;text-align:right;top:905px;font-size:12.5px;line-height:20px;font-weight:700;color:#000;;transform-origin:100% 0">250 505</div>
<div class="t" style="left:1162.00px;width:120px;text-align:right;top:905px;font-size:12.5px;line-height:20px;font-weight:400;color:#000;;transform-origin:100% 0">0</div>
<div class="t" style="left:1249.00px;width:120px;text-align:right;top:905px;font-size:12.5px;line-height:20px;font-weight:400;color:#000;;transform-origin:100% 0">0</div>
<div class="t" style="left:1336.00px;width:120px;text-align:right;top:905px;font-size:12.5px;line-height:20px;font-weight:400;color:#000;;transform-origin:100% 0">0</div>
<div class="t" style="left:1423.00px;width:120px;text-align:right;top:905px;font-size:12.5px;line-height:20px;font-weight:400;color:#000;;transform-origin:100% 0">0</div>
<div class="t" style="left:1510.00px;width:120px;text-align:right;top:905px;font-size:12.5px;line-height:20px;font-weight:400;color:#000;;transform-origin:100% 0">0</div>
<div class="t" style="left:1597.00px;width:120px;text-align:right;top:905px;font-size:12.5px;line-height:20px;font-weight:400;color:#000;;transform-origin:100% 0">0</div>
<div style="left:1719px;top:903px;width:76px;height:21px;box-sizing:border-box;background:#FFF2CC;background-clip:padding-box;border-top:1px dotted #000;border-bottom:1px dotted #000;border-left:1px dotted #000;border-right:1px dotted #000;"></div>
<div class="t" style="left:1673.00px;width:120px;text-align:right;top:905px;font-size:12.5px;line-height:20px;font-weight:400;color:#000;;transform-origin:100% 0">227 834</div>
<div style="left:1794px;top:903px;width:76px;height:21px;box-sizing:border-box;background:#FFF2CC;background-clip:padding-box;border-top:1px dotted #000;border-bottom:1px dotted #000;border-left:1px dotted #000;border-right:1px dotted #000;"></div>
<div class="t" style="left:1748.00px;width:120px;text-align:right;top:905px;font-size:12.5px;line-height:20px;font-weight:400;color:#000;;transform-origin:100% 0">253 201</div>
<div style="left:1869px;top:903px;width:76px;height:21px;box-sizing:border-box;background:#FFF2CC;background-clip:padding-box;border-top:1px dotted #000;border-bottom:1px dotted #000;border-left:1px dotted #000;border-right:1px dotted #000;"></div>
<div style="left:13px;top:923px;width:273px;height:21px;box-sizing:border-box;border-top:1px solid #b4b4b4;border-bottom:1px solid #b4b4b4;border-left:1px solid #b4b4b4;border-right:1px solid #b4b4b4;"></div>
<div class="t" style="left:49.00px;top:924px;font-size:11px;line-height:20px;font-weight:400;color:#000;;transform:scaleX(1.0883);transform-origin:0 0">ubezpieczenia spoleczne bezp-prod</div>
<div style="left:297px;top:923px;width:76px;height:21px;box-sizing:border-box;background:#D9E1F2;background-clip:padding-box;border-top:1px dotted #000;border-bottom:1px dotted #000;border-left:1px dotted #000;border-right:1px dotted #000;"></div>
<div class="t" style="left:251.00px;width:120px;text-align:right;top:925px;font-size:12.5px;line-height:20px;font-weight:400;color:#000;;transform-origin:100% 0">235 563</div>
<div style="left:372px;top:923px;width:76px;height:21px;box-sizing:border-box;background:#D9E1F2;background-clip:padding-box;border-top:1px dotted #000;border-bottom:1px dotted #000;border-left:1px dotted #000;border-right:1px dotted #000;"></div>
<div class="t" style="left:326.00px;width:120px;text-align:right;top:925px;font-size:12.5px;line-height:20px;font-weight:400;color:#000;;transform-origin:100% 0">260 888</div>
<div style="left:447px;top:923px;width:76px;height:21px;box-sizing:border-box;background:#D9E1F2;background-clip:padding-box;border-top:1px dotted #000;border-bottom:1px dotted #000;border-left:1px dotted #000;border-right:1px dotted #000;"></div>
<div class="t" style="left:401.00px;width:120px;text-align:right;top:925px;font-size:12.5px;line-height:20px;font-weight:400;color:#000;;transform-origin:100% 0">288 810</div>
<div style="left:522px;top:923px;width:76px;height:21px;box-sizing:border-box;background:#D9E1F2;background-clip:padding-box;border-top:1px dotted #000;border-bottom:1px dotted #000;border-left:1px dotted #000;border-right:1px dotted #000;"></div>
<div class="t" style="left:476.00px;width:120px;text-align:right;top:925px;font-size:12.5px;line-height:20px;font-weight:400;color:#000;;transform-origin:100% 0">249 784</div>
<div style="left:597px;top:923px;width:76px;height:21px;box-sizing:border-box;background:#D9E1F2;background-clip:padding-box;border-top:1px dotted #000;border-bottom:1px dotted #000;border-left:1px dotted #000;border-right:1px dotted #000;"></div>
<div class="t" style="left:551.00px;width:120px;text-align:right;top:925px;font-size:12.5px;line-height:20px;font-weight:400;color:#000;;transform-origin:100% 0">270 065</div>
<div style="left:672px;top:923px;width:76px;height:21px;box-sizing:border-box;background:#D9E1F2;background-clip:padding-box;border-top:1px dotted #000;border-bottom:1px dotted #000;border-left:1px dotted #000;border-right:1px dotted #000;"></div>
<div class="t" style="left:626.00px;width:120px;text-align:right;top:925px;font-size:12.5px;line-height:20px;font-weight:400;color:#000;;transform-origin:100% 0">281 362</div>
<div style="left:747px;top:923px;width:76px;height:21px;box-sizing:border-box;background:#D9E1F2;background-clip:padding-box;border-top:1px dotted #000;border-bottom:1px dotted #000;border-left:1px dotted #000;border-right:1px dotted #000;"></div>
<div class="t" style="left:701.00px;width:120px;text-align:right;top:925px;font-size:12.5px;line-height:20px;font-weight:400;color:#000;;transform-origin:100% 0">284 614</div>
<div style="left:822px;top:923px;width:76px;height:21px;box-sizing:border-box;background:#D9E1F2;background-clip:padding-box;border-top:1px dotted #000;border-bottom:1px dotted #000;border-left:1px dotted #000;border-right:1px dotted #000;"></div>
<div class="t" style="left:776.00px;width:120px;text-align:right;top:925px;font-size:12.5px;line-height:20px;font-weight:400;color:#000;;transform-origin:100% 0">272 840</div>
<div style="left:897px;top:923px;width:76px;height:21px;box-sizing:border-box;background:#D9E1F2;background-clip:padding-box;border-top:1px dotted #000;border-bottom:1px dotted #000;border-left:1px dotted #000;border-right:1px dotted #000;"></div>
<div class="t" style="left:851.00px;width:120px;text-align:right;top:925px;font-size:12.5px;line-height:20px;font-weight:400;color:#000;;transform-origin:100% 0">239 279</div>
<div style="left:972px;top:923px;width:76px;height:21px;box-sizing:border-box;background:#D9E1F2;background-clip:padding-box;border-top:1px dotted #000;border-bottom:1px dotted #000;border-left:1px dotted #000;border-right:1px dotted #000;"></div>
<div class="t" style="left:926.00px;width:120px;text-align:right;top:925px;font-size:12.5px;line-height:20px;font-weight:400;color:#000;;transform-origin:100% 0">237 553</div>
<div style="left:1047px;top:923px;width:76px;height:21px;box-sizing:border-box;background:#D9E1F2;background-clip:padding-box;border-top:1px dotted #000;border-bottom:1px dotted #000;border-left:1px dotted #000;border-right:1px dotted #000;"></div>
<div class="t" style="left:1001.00px;width:120px;text-align:right;top:925px;font-size:12.5px;line-height:20px;font-weight:400;color:#000;;transform-origin:100% 0">198 827</div>
<div style="left:1122px;top:923px;width:76px;height:21px;box-sizing:border-box;background:#D9E1F2;background-clip:padding-box;border-top:1px dotted #000;border-bottom:1px dotted #000;border-left:1px dotted #000;border-right:1px dotted #000;"></div>
<div class="t" style="left:1076.00px;width:120px;text-align:right;top:925px;font-size:12.5px;line-height:20px;font-weight:400;color:#000;;transform-origin:100% 0">180 332</div>
<div style="left:1197px;top:923px;width:76px;height:21px;box-sizing:border-box;background:#D9E1F2;background-clip:padding-box;border-top:1px dotted #000;border-bottom:1px dotted #000;border-left:1px dotted #000;border-right:1px dotted #000;"></div>
<div class="t" style="left:1151.00px;width:120px;text-align:right;top:925px;font-size:12.5px;line-height:20px;font-weight:700;color:#000;;transform-origin:100% 0">2 999 917</div>
<div style="left:1284px;top:923px;width:76px;height:21px;box-sizing:border-box;background:#D9E1F2;background-clip:padding-box;border-top:1px dotted #000;border-bottom:1px dotted #000;border-left:1px dotted #000;border-right:1px dotted #000;"></div>
<div class="t" style="left:1238.00px;width:120px;text-align:right;top:925px;font-size:12.5px;line-height:20px;font-weight:700;color:#000;;transform-origin:100% 0">250 255</div>
<div style="left:1371px;top:923px;width:76px;height:21px;box-sizing:border-box;background:#D9E1F2;background-clip:padding-box;border-top:1px dotted #000;border-bottom:1px dotted #000;border-left:1px dotted #000;border-right:1px dotted #000;"></div>
<div class="t" style="left:1325.00px;width:120px;text-align:right;top:925px;font-size:12.5px;line-height:20px;font-weight:700;color:#000;;transform-origin:100% 0">95 987</div>
<div style="left:1458px;top:923px;width:76px;height:21px;box-sizing:border-box;background:#D9E1F2;background-clip:padding-box;border-top:1px dotted #000;border-bottom:1px dotted #000;border-left:1px dotted #000;border-right:1px dotted #000;"></div>
<div class="t" style="left:1412.00px;width:120px;text-align:right;top:925px;font-size:12.5px;line-height:20px;font-weight:700;color:#000;;transform-origin:100% 0">51 916</div>
<div style="left:1545px;top:923px;width:76px;height:21px;box-sizing:border-box;background:#D9E1F2;background-clip:padding-box;border-top:1px dotted #000;border-bottom:1px dotted #000;border-left:1px dotted #000;border-right:1px dotted #000;"></div>
<div class="t" style="left:1499.00px;width:120px;text-align:right;top:925px;font-size:12.5px;line-height:20px;font-weight:700;color:#000;;transform-origin:100% 0">65 697</div>
<div style="left:1632px;top:923px;width:76px;height:21px;box-sizing:border-box;background:#D9E1F2;background-clip:padding-box;border-top:1px dotted #000;border-bottom:1px dotted #000;border-left:1px dotted #000;border-right:1px dotted #000;"></div>
<div class="t" style="left:1586.00px;width:120px;text-align:right;top:925px;font-size:12.5px;line-height:20px;font-weight:700;color:#000;;transform-origin:100% 0">225 575</div>
<div class="t" style="left:1162.00px;width:120px;text-align:right;top:925px;font-size:12.5px;line-height:20px;font-weight:400;color:#000;;transform-origin:100% 0">0</div>
<div class="t" style="left:1249.00px;width:120px;text-align:right;top:925px;font-size:12.5px;line-height:20px;font-weight:400;color:#000;;transform-origin:100% 0">0</div>
<div class="t" style="left:1336.00px;width:120px;text-align:right;top:925px;font-size:12.5px;line-height:20px;font-weight:400;color:#000;;transform-origin:100% 0">0</div>
<div class="t" style="left:1423.00px;width:120px;text-align:right;top:925px;font-size:12.5px;line-height:20px;font-weight:400;color:#000;;transform-origin:100% 0">0</div>
<div class="t" style="left:1510.00px;width:120px;text-align:right;top:925px;font-size:12.5px;line-height:20px;font-weight:400;color:#000;;transform-origin:100% 0">0</div>
<div class="t" style="left:1597.00px;width:120px;text-align:right;top:925px;font-size:12.5px;line-height:20px;font-weight:400;color:#000;;transform-origin:100% 0">0</div>
<div style="left:1719px;top:923px;width:76px;height:21px;box-sizing:border-box;background:#FFF2CC;background-clip:padding-box;border-top:1px dotted #000;border-bottom:1px dotted #000;border-left:1px dotted #000;border-right:1px dotted #000;"></div>
<div class="t" style="left:1673.00px;width:120px;text-align:right;top:925px;font-size:12.5px;line-height:20px;font-weight:400;color:#000;;transform-origin:100% 0">124 488</div>
<div style="left:1794px;top:923px;width:76px;height:21px;box-sizing:border-box;background:#FFF2CC;background-clip:padding-box;border-top:1px dotted #000;border-bottom:1px dotted #000;border-left:1px dotted #000;border-right:1px dotted #000;"></div>
<div class="t" style="left:1748.00px;width:120px;text-align:right;top:925px;font-size:12.5px;line-height:20px;font-weight:400;color:#000;;transform-origin:100% 0">138 657</div>
<div style="left:1869px;top:923px;width:76px;height:21px;box-sizing:border-box;background:#FFF2CC;background-clip:padding-box;border-top:1px dotted #000;border-bottom:1px dotted #000;border-left:1px dotted #000;border-right:1px dotted #000;"></div>
<div style="left:13px;top:943px;width:273px;height:21px;box-sizing:border-box;border-top:1px solid #b4b4b4;border-bottom:1px solid #b4b4b4;border-left:1px solid #b4b4b4;border-right:1px solid #b4b4b4;"></div>
<div class="t" style="left:49.00px;top:944px;font-size:11px;line-height:20px;font-weight:400;color:#000;;transform:scaleX(1.1129);transform-origin:0 0">Wynagrodzenia nadgodziny</div>
<div style="left:297px;top:943px;width:76px;height:21px;box-sizing:border-box;background:#D9E1F2;background-clip:padding-box;border-top:1px dotted #000;border-bottom:1px dotted #000;border-left:1px dotted #000;border-right:1px dotted #000;"></div>
<div style="left:372px;top:943px;width:76px;height:21px;box-sizing:border-box;background:#D9E1F2;background-clip:padding-box;border-top:1px dotted #000;border-bottom:1px dotted #000;border-left:1px dotted #000;border-right:1px dotted #000;"></div>
<div style="left:447px;top:943px;width:76px;height:21px;box-sizing:border-box;background:#D9E1F2;background-clip:padding-box;border-top:1px dotted #000;border-bottom:1px dotted #000;border-left:1px dotted #000;border-right:1px dotted #000;"></div>
<div style="left:522px;top:943px;width:76px;height:21px;box-sizing:border-box;background:#D9E1F2;background-clip:padding-box;border-top:1px dotted #000;border-bottom:1px dotted #000;border-left:1px dotted #000;border-right:1px dotted #000;"></div>
<div style="left:597px;top:943px;width:76px;height:21px;box-sizing:border-box;background:#D9E1F2;background-clip:padding-box;border-top:1px dotted #000;border-bottom:1px dotted #000;border-left:1px dotted #000;border-right:1px dotted #000;"></div>
<div style="left:672px;top:943px;width:76px;height:21px;box-sizing:border-box;background:#D9E1F2;background-clip:padding-box;border-top:1px dotted #000;border-bottom:1px dotted #000;border-left:1px dotted #000;border-right:1px dotted #000;"></div>
<div style="left:747px;top:943px;width:76px;height:21px;box-sizing:border-box;background:#D9E1F2;background-clip:padding-box;border-top:1px dotted #000;border-bottom:1px dotted #000;border-left:1px dotted #000;border-right:1px dotted #000;"></div>
<div style="left:822px;top:943px;width:76px;height:21px;box-sizing:border-box;background:#D9E1F2;background-clip:padding-box;border-top:1px dotted #000;border-bottom:1px dotted #000;border-left:1px dotted #000;border-right:1px dotted #000;"></div>
<div style="left:897px;top:943px;width:76px;height:21px;box-sizing:border-box;background:#D9E1F2;background-clip:padding-box;border-top:1px dotted #000;border-bottom:1px dotted #000;border-left:1px dotted #000;border-right:1px dotted #000;"></div>
<div style="left:972px;top:943px;width:76px;height:21px;box-sizing:border-box;background:#D9E1F2;background-clip:padding-box;border-top:1px dotted #000;border-bottom:1px dotted #000;border-left:1px dotted #000;border-right:1px dotted #000;"></div>
<div style="left:1047px;top:943px;width:76px;height:21px;box-sizing:border-box;background:#D9E1F2;background-clip:padding-box;border-top:1px dotted #000;border-bottom:1px dotted #000;border-left:1px dotted #000;border-right:1px dotted #000;"></div>
<div style="left:1122px;top:943px;width:76px;height:21px;box-sizing:border-box;background:#D9E1F2;background-clip:padding-box;border-top:1px dotted #000;border-bottom:1px dotted #000;border-left:1px dotted #000;border-right:1px dotted #000;"></div>
<div style="left:1197px;top:943px;width:76px;height:21px;box-sizing:border-box;background:#D9E1F2;background-clip:padding-box;border-top:1px dotted #000;border-bottom:1px dotted #000;border-left:1px dotted #000;border-right:1px dotted #000;"></div>
<div style="left:1284px;top:943px;width:76px;height:21px;box-sizing:border-box;background:#D9E1F2;background-clip:padding-box;border-top:1px dotted #000;border-bottom:1px dotted #000;border-left:1px dotted #000;border-right:1px dotted #000;"></div>
<div class="t" style="left:1238.00px;width:120px;text-align:right;top:945px;font-size:12.5px;line-height:20px;font-weight:700;color:#000;;transform-origin:100% 0">0</div>
<svg style="position:absolute;left:1285px;top:944px;" width="7" height="7" viewBox="0 0 7 7"><path d="M0 0h6.5L0 6.5z" fill="#008000"/></svg>
<div style="left:1371px;top:943px;width:76px;height:21px;box-sizing:border-box;background:#D9E1F2;background-clip:padding-box;border-top:1px dotted #000;border-bottom:1px dotted #000;border-left:1px dotted #000;border-right:1px dotted #000;"></div>
<div class="t" style="left:1325.00px;width:120px;text-align:right;top:945px;font-size:12.5px;line-height:20px;font-weight:700;color:#000;;transform-origin:100% 0">0</div>
<svg style="position:absolute;left:1372px;top:944px;" width="7" height="7" viewBox="0 0 7 7"><path d="M0 0h6.5L0 6.5z" fill="#008000"/></svg>
<div style="left:1458px;top:943px;width:76px;height:21px;box-sizing:border-box;background:#D9E1F2;background-clip:padding-box;border-top:1px dotted #000;border-bottom:1px dotted #000;border-left:1px dotted #000;border-right:1px dotted #000;"></div>
<div class="t" style="left:1412.00px;width:120px;text-align:right;top:945px;font-size:12.5px;line-height:20px;font-weight:700;color:#000;;transform-origin:100% 0">0</div>
<svg style="position:absolute;left:1459px;top:944px;" width="7" height="7" viewBox="0 0 7 7"><path d="M0 0h6.5L0 6.5z" fill="#008000"/></svg>
<div style="left:1545px;top:943px;width:76px;height:21px;box-sizing:border-box;background:#D9E1F2;background-clip:padding-box;border-top:1px dotted #000;border-bottom:1px dotted #000;border-left:1px dotted #000;border-right:1px dotted #000;"></div>
<div class="t" style="left:1499.00px;width:120px;text-align:right;top:945px;font-size:12.5px;line-height:20px;font-weight:700;color:#000;;transform-origin:100% 0">0</div>
<svg style="position:absolute;left:1546px;top:944px;" width="7" height="7" viewBox="0 0 7 7"><path d="M0 0h6.5L0 6.5z" fill="#008000"/></svg>
<div style="left:1632px;top:943px;width:76px;height:21px;box-sizing:border-box;background:#D9E1F2;background-clip:padding-box;border-top:1px dotted #000;border-bottom:1px dotted #000;border-left:1px dotted #000;border-right:1px dotted #000;"></div>
<div class="t" style="left:1586.00px;width:120px;text-align:right;top:945px;font-size:12.5px;line-height:20px;font-weight:700;color:#000;;transform-origin:100% 0">0</div>
<svg style="position:absolute;left:1633px;top:944px;" width="7" height="7" viewBox="0 0 7 7"><path d="M0 0h6.5L0 6.5z" fill="#008000"/></svg>
<div class="t" style="left:1162.00px;width:120px;text-align:right;top:945px;font-size:12.5px;line-height:20px;font-weight:400;color:#000;;transform-origin:100% 0">0</div>
<div class="t" style="left:1249.00px;width:120px;text-align:right;top:945px;font-size:12.5px;line-height:20px;font-weight:400;color:#000;;transform-origin:100% 0">0</div>
<div class="t" style="left:1336.00px;width:120px;text-align:right;top:945px;font-size:12.5px;line-height:20px;font-weight:400;color:#000;;transform-origin:100% 0">0</div>
<div class="t" style="left:1423.00px;width:120px;text-align:right;top:945px;font-size:12.5px;line-height:20px;font-weight:400;color:#000;;transform-origin:100% 0">0</div>
<div class="t" style="left:1510.00px;width:120px;text-align:right;top:945px;font-size:12.5px;line-height:20px;font-weight:400;color:#000;;transform-origin:100% 0">0</div>
<div class="t" style="left:1597.00px;width:120px;text-align:right;top:945px;font-size:12.5px;line-height:20px;font-weight:400;color:#000;;transform-origin:100% 0">0</div>
<div style="left:1719px;top:943px;width:76px;height:21px;box-sizing:border-box;background:#FFF2CC;background-clip:padding-box;border-top:1px dotted #000;border-bottom:1px dotted #000;border-left:1px dotted #000;border-right:1px dotted #000;"></div>
<div class="t" style="left:1673.00px;width:120px;text-align:right;top:945px;font-size:12.5px;line-height:20px;font-weight:400;color:#000;;transform-origin:100% 0">0</div>
<div style="left:1794px;top:943px;width:76px;height:21px;box-sizing:border-box;background:#FFF2CC;background-clip:padding-box;border-top:1px dotted #000;border-bottom:1px dotted #000;border-left:1px dotted #000;border-right:1px dotted #000;"></div>
<div class="t" style="left:1748.00px;width:120px;text-align:right;top:945px;font-size:12.5px;line-height:20px;font-weight:400;color:#000;;transform-origin:100% 0">0</div>
<div style="left:1869px;top:943px;width:76px;height:21px;box-sizing:border-box;background:#FFF2CC;background-clip:padding-box;border-top:1px dotted #000;border-bottom:1px dotted #000;border-left:1px dotted #000;border-right:1px dotted #000;"></div>
<div style="left:13px;top:963px;width:273px;height:21px;box-sizing:border-box;border-top:1px solid #b4b4b4;border-bottom:1px solid #b4b4b4;border-left:1px solid #b4b4b4;border-right:1px solid #b4b4b4;"></div>
<div class="t" style="left:19.00px;top:964px;font-size:11px;line-height:20px;font-weight:700;color:#000;;transform-origin:0 0">Ubezpieczenia spoleczne:</div>
<div style="left:297px;top:963px;width:76px;height:21px;box-sizing:border-box;background:#DDEBF7;background-clip:padding-box;border-top:1px dotted #000;border-bottom:1px dotted #000;border-left:1px dotted #000;border-right:1px dotted #000;"></div>
<div class="t" style="left:251.00px;width:120px;text-align:right;top:965px;font-size:12.5px;line-height:20px;font-weight:700;color:#000;;transform-origin:100% 0">47 990</div>
<div style="left:372px;top:963px;width:76px;height:21px;box-sizing:border-box;background:#DDEBF7;background-clip:padding-box;border-top:1px dotted #000;border-bottom:1px dotted #000;border-left:1px dotted #000;border-right:1px dotted #000;"></div>
<div class="t" style="left:326.00px;width:120px;text-align:right;top:965px;font-size:12.5px;line-height:20px;font-weight:700;color:#000;;transform-origin:100% 0">53 149</div>
<div style="left:447px;top:963px;width:76px;height:21px;box-sizing:border-box;background:#DDEBF7;background-clip:padding-box;border-top:1px dotted #000;border-bottom:1px dotted #000;border-left:1px dotted #000;border-right:1px dotted #000;"></div>
<div class="t" style="left:401.00px;width:120px;text-align:right;top:965px;font-size:12.5px;line-height:20px;font-weight:700;color:#000;;transform-origin:100% 0">58 838</div>
<div style="left:522px;top:963px;width:76px;height:21px;box-sizing:border-box;background:#DDEBF7;background-clip:padding-box;border-top:1px dotted #000;border-bottom:1px dotted #000;border-left:1px dotted #000;border-right:1px dotted #000;"></div>
<div class="t" style="left:476.00px;width:120px;text-align:right;top:965px;font-size:12.5px;line-height:20px;font-weight:700;color:#000;;transform-origin:100% 0">50 887</div>
<div style="left:597px;top:963px;width:76px;height:21px;box-sizing:border-box;background:#DDEBF7;background-clip:padding-box;border-top:1px dotted #000;border-bottom:1px dotted #000;border-left:1px dotted #000;border-right:1px dotted #000;"></div>
<div class="t" style="left:551.00px;width:120px;text-align:right;top:965px;font-size:12.5px;line-height:20px;font-weight:700;color:#000;;transform-origin:100% 0">55 019</div>
<div style="left:672px;top:963px;width:76px;height:21px;box-sizing:border-box;background:#DDEBF7;background-clip:padding-box;border-top:1px dotted #000;border-bottom:1px dotted #000;border-left:1px dotted #000;border-right:1px dotted #000;"></div>
<div class="t" style="left:626.00px;width:120px;text-align:right;top:965px;font-size:12.5px;line-height:20px;font-weight:700;color:#000;;transform-origin:100% 0">54 656</div>
<div style="left:747px;top:963px;width:76px;height:21px;box-sizing:border-box;background:#DDEBF7;background-clip:padding-box;border-top:1px dotted #000;border-bottom:1px dotted #000;border-left:1px dotted #000;border-right:1px dotted #000;"></div>
<div class="t" style="left:701.00px;width:120px;text-align:right;top:965px;font-size:12.5px;line-height:20px;font-weight:700;color:#000;;transform-origin:100% 0">55 960</div>
<div style="left:822px;top:963px;width:76px;height:21px;box-sizing:border-box;background:#DDEBF7;background-clip:padding-box;border-top:1px dotted #000;border-bottom:1px dotted #000;border-left:1px dotted #000;border-right:1px dotted #000;"></div>
<div class="t" style="left:776.00px;width:120px;text-align:right;top:965px;font-size:12.5px;line-height:20px;font-weight:700;color:#000;;transform-origin:100% 0">36 907</div>
<div style="left:897px;top:963px;width:76px;height:21px;box-sizing:border-box;background:#DDEBF7;background-clip:padding-box;border-top:1px dotted #000;border-bottom:1px dotted #000;border-left:1px dotted #000;border-right:1px dotted #000;"></div>
<div class="t" style="left:851.00px;width:120px;text-align:right;top:965px;font-size:12.5px;line-height:20px;font-weight:700;color:#000;;transform-origin:100% 0">46 198</div>
<div style="left:972px;top:963px;width:76px;height:21px;box-sizing:border-box;background:#DDEBF7;background-clip:padding-box;border-top:1px dotted #000;border-bottom:1px dotted #000;border-left:1px dotted #000;border-right:1px dotted #000;"></div>
<div class="t" style="left:926.00px;width:120px;text-align:right;top:965px;font-size:12.5px;line-height:20px;font-weight:700;color:#000;;transform-origin:100% 0">45 865</div>
<div style="left:1047px;top:963px;width:76px;height:21px;box-sizing:border-box;background:#DDEBF7;background-clip:padding-box;border-top:1px dotted #000;border-bottom:1px dotted #000;border-left:1px dotted #000;border-right:1px dotted #000;"></div>
<div class="t" style="left:1001.00px;width:120px;text-align:right;top:965px;font-size:12.5px;line-height:20px;font-weight:700;color:#000;;transform-origin:100% 0">39 563</div>
<div style="left:1122px;top:963px;width:76px;height:21px;box-sizing:border-box;background:#DDEBF7;background-clip:padding-box;border-top:1px dotted #000;border-bottom:1px dotted #000;border-left:1px dotted #000;border-right:1px dotted #000;"></div>
<div class="t" style="left:1076.00px;width:120px;text-align:right;top:965px;font-size:12.5px;line-height:20px;font-weight:700;color:#000;;transform-origin:100% 0">27 664</div>
<div style="left:1197px;top:963px;width:76px;height:21px;box-sizing:border-box;background:#D9E1F2;background-clip:padding-box;border-top:1px dotted #000;border-bottom:1px dotted #000;border-left:1px dotted #000;border-right:1px dotted #000;"></div>
<div class="t" style="left:1151.00px;width:120px;text-align:right;top:965px;font-size:12.5px;line-height:20px;font-weight:700;color:#000;;transform-origin:100% 0">572 695</div>
<div style="left:1284px;top:963px;width:76px;height:21px;box-sizing:border-box;background:#D9E1F2;background-clip:padding-box;border-top:1px dotted #000;border-bottom:1px dotted #000;border-left:1px dotted #000;border-right:1px dotted #000;"></div>
<div class="t" style="left:1238.00px;width:120px;text-align:right;top:965px;font-size:12.5px;line-height:20px;font-weight:700;color:#000;;transform-origin:100% 0">8 955</div>
<div style="left:1371px;top:963px;width:76px;height:21px;box-sizing:border-box;background:#D9E1F2;background-clip:padding-box;border-top:1px dotted #000;border-bottom:1px dotted #000;border-left:1px dotted #000;border-right:1px dotted #000;"></div>
<div class="t" style="left:1325.00px;width:120px;text-align:right;top:965px;font-size:12.5px;line-height:20px;font-weight:700;color:#000;;transform-origin:100% 0">3 442</div>
<div style="left:1458px;top:963px;width:76px;height:21px;box-sizing:border-box;background:#D9E1F2;background-clip:padding-box;border-top:1px dotted #000;border-bottom:1px dotted #000;border-left:1px dotted #000;border-right:1px dotted #000;"></div>
<div class="t" style="left:1412.00px;width:120px;text-align:right;top:965px;font-size:12.5px;line-height:20px;font-weight:700;color:#000;;transform-origin:100% 0">1 877</div>
<div style="left:1545px;top:963px;width:76px;height:21px;box-sizing:border-box;background:#D9E1F2;background-clip:padding-box;border-top:1px dotted #000;border-bottom:1px dotted #000;border-left:1px dotted #000;border-right:1px dotted #000;"></div>
<div class="t" style="left:1499.00px;width:120px;text-align:right;top:965px;font-size:12.5px;line-height:20px;font-weight:700;color:#000;;transform-origin:100% 0">2 344</div>
<div style="left:1632px;top:963px;width:76px;height:21px;box-sizing:border-box;background:#D9E1F2;background-clip:padding-box;border-top:1px dotted #000;border-bottom:1px dotted #000;border-left:1px dotted #000;border-right:1px dotted #000;"></div>
<div class="t" style="left:1586.00px;width:120px;text-align:right;top:965px;font-size:12.5px;line-height:20px;font-weight:700;color:#000;;transform-origin:100% 0">8 065</div>
<div class="t" style="left:1162.00px;width:120px;text-align:right;top:965px;font-size:12.5px;line-height:20px;font-weight:700;color:#000;;transform-origin:100% 0">0</div>
<div class="t" style="left:1249.00px;width:120px;text-align:right;top:965px;font-size:12.5px;line-height:20px;font-weight:700;color:#000;;transform-origin:100% 0">0</div>
<div class="t" style="left:1336.00px;width:120px;text-align:right;top:965px;font-size:12.5px;line-height:20px;font-weight:700;color:#000;;transform-origin:100% 0">0</div>
<div class="t" style="left:1423.00px;width:120px;text-align:right;top:965px;font-size:12.5px;line-height:20px;font-weight:700;color:#000;;transform-origin:100% 0">0</div>
<div class="t" style="left:1510.00px;width:120px;text-align:right;top:965px;font-size:12.5px;line-height:20px;font-weight:700;color:#000;;transform-origin:100% 0">0</div>
<div class="t" style="left:1597.00px;width:120px;text-align:right;top:965px;font-size:12.5px;line-height:20px;font-weight:700;color:#000;;transform-origin:100% 0">0</div>
<div style="left:1719px;top:963px;width:76px;height:21px;box-sizing:border-box;background:#FFF2CC;background-clip:padding-box;border-top:1px dotted #000;border-bottom:1px dotted #000;border-left:1px dotted #000;border-right:1px dotted #000;"></div>
<div class="t" style="left:1673.00px;width:120px;text-align:right;top:965px;font-size:12.5px;line-height:20px;font-weight:400;color:#000;;transform-origin:100% 0">16 452</div>
<div style="left:1794px;top:963px;width:76px;height:21px;box-sizing:border-box;background:#FFF2CC;background-clip:padding-box;border-top:1px dotted #000;border-bottom:1px dotted #000;border-left:1px dotted #000;border-right:1px dotted #000;"></div>
<div class="t" style="left:1748.00px;width:120px;text-align:right;top:965px;font-size:12.5px;line-height:20px;font-weight:400;color:#000;;transform-origin:100% 0">18 251</div>
<div style="left:1869px;top:963px;width:76px;height:21px;box-sizing:border-box;background:#FFF2CC;background-clip:padding-box;border-top:1px dotted #000;border-bottom:1px dotted #000;border-left:1px dotted #000;border-right:1px dotted #000;"></div>
<div style="left:13px;top:983px;width:273px;height:21px;box-sizing:border-box;border-top:1px solid #b4b4b4;border-bottom:1px solid #b4b4b4;border-left:1px solid #b4b4b4;border-right:1px solid #b4b4b4;"></div>
<div style="left:297px;top:983px;width:76px;height:21px;box-sizing:border-box;background:#D9E1F2;background-clip:padding-box;border-top:1px dotted #000;border-bottom:1px dotted #000;border-left:1px dotted #000;border-right:1px dotted #000;"></div>
<div style="left:372px;top:983px;width:76px;height:21px;box-sizing:border-box;background:#D9E1F2;background-clip:padding-box;border-top:1px dotted #000;border-bottom:1px dotted #000;border-left:1px dotted #000;border-right:1px dotted #000;"></div>
<div style="left:447px;top:983px;width:76px;height:21px;box-sizing:border-box;background:#D9E1F2;background-clip:padding-box;border-top:1px dotted #000;border-bottom:1px dotted #000;border-left:1px dotted #000;border-right:1px dotted #000;"></div>
<div style="left:522px;top:983px;width:76px;height:21px;box-sizing:border-box;background:#D9E1F2;background-clip:padding-box;border-top:1px dotted #000;border-bottom:1px dotted #000;border-left:1px dotted #000;border-right:1px dotted #000;"></div>
<div style="left:597px;top:983px;width:76px;height:21px;box-sizing:border-box;background:#D9E1F2;background-clip:padding-box;border-top:1px dotted #000;border-bottom:1px dotted #000;border-left:1px dotted #000;border-right:1px dotted #000;"></div>
<div style="left:672px;top:983px;width:76px;height:21px;box-sizing:border-box;background:#D9E1F2;background-clip:padding-box;border-top:1px dotted #000;border-bottom:1px dotted #000;border-left:1px dotted #000;border-right:1px dotted #000;"></div>
<div style="left:747px;top:983px;width:76px;height:21px;box-sizing:border-box;background:#D9E1F2;background-clip:padding-box;border-top:1px dotted #000;border-bottom:1px dotted #000;border-left:1px dotted #000;border-right:1px dotted #000;"></div>
<div style="left:822px;top:983px;width:76px;height:21px;box-sizing:border-box;background:#D9E1F2;background-clip:padding-box;border-top:1px dotted #000;border-bottom:1px dotted #000;border-left:1px dotted #000;border-right:1px dotted #000;"></div>
<div style="left:897px;top:983px;width:76px;height:21px;box-sizing:border-box;background:#D9E1F2;background-clip:padding-box;border-top:1px dotted #000;border-bottom:1px dotted #000;border-left:1px dotted #000;border-right:1px dotted #000;"></div>
<div style="left:972px;top:983px;width:76px;height:21px;box-sizing:border-box;background:#D9E1F2;background-clip:padding-box;border-top:1px dotted #000;border-bottom:1px dotted #000;border-left:1px dotted #000;border-right:1px dotted #000;"></div>
<div style="left:1047px;top:983px;width:76px;height:21px;box-sizing:border-box;background:#D9E1F2;background-clip:padding-box;border-top:1px dotted #000;border-bottom:1px dotted #000;border-left:1px dotted #000;border-right:1px dotted #000;"></div>
<div style="left:1122px;top:983px;width:76px;height:21px;box-sizing:border-box;background:#D9E1F2;background-clip:padding-box;border-top:1px dotted #000;border-bottom:1px dotted #000;border-left:1px dotted #000;border-right:1px dotted #000;"></div>
<div style="left:1197px;top:983px;width:76px;height:21px;box-sizing:border-box;background:#D9E1F2;background-clip:padding-box;border-top:1px dotted #000;border-bottom:1px dotted #000;border-left:1px dotted #000;border-right:1px dotted #000;"></div>
<div style="left:1284px;top:983px;width:76px;height:21px;box-sizing:border-box;background:#D9E1F2;background-clip:padding-box;border-top:1px dotted #000;border-bottom:1px dotted #000;border-left:1px dotted #000;border-right:1px dotted #000;"></div>
<div style="left:1371px;top:983px;width:76px;height:21px;box-sizing:border-box;background:#D9E1F2;background-clip:padding-box;border-top:1px dotted #000;border-bottom:1px dotted #000;border-left:1px dotted #000;border-right:1px dotted #000;"></div>
<div style="left:1458px;top:983px;width:76px;height:21px;box-sizing:border-box;background:#D9E1F2;background-clip:padding-box;border-top:1px dotted #000;border-bottom:1px dotted #000;border-left:1px dotted #000;border-right:1px dotted #000;"></div>
<div style="left:1545px;top:983px;width:76px;height:21px;box-sizing:border-box;background:#D9E1F2;background-clip:padding-box;border-top:1px dotted #000;border-bottom:1px dotted #000;border-left:1px dotted #000;border-right:1px dotted #000;"></div>
<div style="left:1632px;top:983px;width:76px;height:21px;box-sizing:border-box;background:#D9E1F2;background-clip:padding-box;border-top:1px dotted #000;border-bottom:1px dotted #000;border-left:1px dotted #000;border-right:1px dotted #000;"></div>
<div style="left:1719px;top:983px;width:76px;height:21px;box-sizing:border-box;background:#FFF2CC;background-clip:padding-box;border-top:1px dotted #000;border-bottom:1px dotted #000;border-left:1px dotted #000;border-right:1px dotted #000;"></div>
<div style="left:1794px;top:983px;width:76px;height:21px;box-sizing:border-box;background:#FFF2CC;background-clip:padding-box;border-top:1px dotted #000;border-bottom:1px dotted #000;border-left:1px dotted #000;border-right:1px dotted #000;"></div>
<div style="left:1869px;top:983px;width:76px;height:21px;box-sizing:border-box;background:#FFF2CC;background-clip:padding-box;border-top:1px dotted #000;border-bottom:1px dotted #000;border-left:1px dotted #000;border-right:1px dotted #000;"></div>
<div style="left:1276px;top:732px;width:4px;height:1px;background:#222"></div>
<div style="left:1363px;top:732px;width:4px;height:1px;background:#222"></div>
<div style="left:1450px;top:732px;width:4px;height:1px;background:#222"></div>
<div style="left:1537px;top:732px;width:4px;height:1px;background:#222"></div>
<div style="left:1624px;top:732px;width:4px;height:1px;background:#222"></div>
<div style="left:1711px;top:732px;width:4px;height:1px;background:#222"></div>
<div style="left:1264px;top:732px;width:4px;height:1px;background:#333"></div>
<div style="left:1351px;top:732px;width:4px;height:1px;background:#333"></div>
<div style="left:1438px;top:732px;width:4px;height:1px;background:#333"></div>
<div style="left:1525px;top:732px;width:4px;height:1px;background:#333"></div>
<div style="left:1612px;top:732px;width:4px;height:1px;background:#333"></div>
<div style="left:1699px;top:732px;width:4px;height:1px;background:#333"></div>
<div style="left:1276px;top:758px;width:4px;height:1px;background:#222"></div>
<div style="left:1363px;top:758px;width:4px;height:1px;background:#222"></div>
<div style="left:1450px;top:758px;width:4px;height:1px;background:#222"></div>
<div style="left:1537px;top:758px;width:4px;height:1px;background:#222"></div>
<div style="left:1624px;top:758px;width:4px;height:1px;background:#222"></div>
<div style="left:1711px;top:758px;width:4px;height:1px;background:#222"></div>
<div style="left:1264px;top:758px;width:4px;height:1px;background:#333"></div>
<div style="left:1351px;top:758px;width:4px;height:1px;background:#333"></div>
<div style="left:1438px;top:758px;width:4px;height:1px;background:#333"></div>
<div style="left:1525px;top:758px;width:4px;height:1px;background:#333"></div>
<div style="left:1612px;top:758px;width:4px;height:1px;background:#333"></div>
<div style="left:1699px;top:758px;width:4px;height:1px;background:#333"></div>
<div style="left:446px;top:398px;width:78px;height:23px;border:2px solid #217346;box-sizing:border-box"></div>
<div style="left:448px;top:400px;width:74px;height:19px;border:1px solid #fff;box-sizing:border-box"></div>
<div style="left:518px;top:416px;width:7px;height:7px;background:#fff"></div>
<div style="left:519px;top:417px;width:5px;height:5px;background:#217346"></div>
<div style="left:447px;top:245px;width:76px;height:2px;background:#217346"></div>
<div style="left:285px;top:204px;width:1px;height:786px;background:#a0a0a0"></div>
<div style="left:0px;top:247px;width:1898px;height:1px;background:#a0a0a0"></div>
<div style="left:0px;top:342px;width:1898px;height:1px;background:#a0a0a0"></div>
<div style="left:0px;top:247px;width:1px;height:743px;background:#a0a0a0"></div>
<div style="left:1897px;top:247px;width:1px;height:743px;background:#a0a0a0"></div>
</div>
<div style="left:1902px;top:206px;width:15px;height:15px;background:#fff;border:1px solid #ababab;box-sizing:border-box"></div>
<svg style="position:absolute;left:1903px;top:207px;" width="13" height="13" viewBox="0 0 13 13"><path d="M3 8h7L6.5 4.5z" fill="#606060"/></svg>
<div style="left:1902px;top:221px;width:15px;height:278px;background:#fff;border:1px solid #ababab;box-sizing:border-box"></div>
<div style="left:1903px;top:499px;width:13px;height:477px;background:#dadada"></div>
<div style="left:1902px;top:976px;width:15px;height:14px;background:#fff;border:1px solid #d0d0d0;box-sizing:border-box"></div>
<svg style="position:absolute;left:1903px;top:977px;" width="13" height="12" viewBox="0 0 13 12"><path d="M3 4h7L6.5 7.5z" fill="#606060"/></svg>
<div style="left:0px;top:990px;width:1920px;height:28px;background:#e6e6e6"></div>
<div style="left:0px;top:990px;width:1898px;height:1px;background:#a0a0a0"></div>
<div style="left:0px;top:1018px;width:1920px;height:1px;background:#cfcfcf"></div>
<div style="left:0px;top:1019px;width:1920px;height:21px;background:#f0f0f0"></div>
<svg style="position:absolute;left:25px;top:998px;" width="9" height="12" viewBox="0 0 9 12"><path d="M6.5 1.5v9L1.5 6z" fill="#217346"/></svg>
<svg style="position:absolute;left:54px;top:998px;" width="9" height="12" viewBox="0 0 9 12"><path d="M2 1.5v9L6.5 6z" fill="#b4b4b4"/></svg>
<div style="left:81px;top:1006px;width:2px;height:2px;background:#217346"></div>
<div style="left:85px;top:1006px;width:2px;height:2px;background:#217346"></div>
<div style="left:89px;top:1006px;width:2px;height:2px;background:#217346"></div>
<div style="left:100px;top:994px;width:1px;height:19px;background:#b8b8b8"></div>
<div class="t" style="left:113.00px;top:994px;font-size:12.0px;line-height:20px;font-weight:400;color:#444;;transform:scaleX(1.0157);transform-origin:0 0">Arkusz6</div>
<div style="left:172px;top:990px;width:55px;height:25px;background:#fff;border-left:1px solid #c6c6c6;border-right:1px solid #c6c6c6;box-sizing:border-box"></div>
<div style="left:172px;top:1013px;width:55px;height:2px;background:#217346"></div>
<div class="t" style="left:184.00px;top:994px;font-size:12.0px;line-height:20px;font-weight:700;color:#217346;;transform:scaleX(1.1261);transform-origin:0 0">NMP</div>
<svg style="position:absolute;left:258px;top:995px;" width="18" height="18" viewBox="0 0 18 18"><circle cx="9" cy="9" r="7.5" fill="none" stroke="#8a8a8a" stroke-width="1.2"/><path d="M9 5v8M5 9h8" stroke="#666" stroke-width="1.6"/></svg>
<div style="left:1153px;top:999px;width:2px;height:2px;background:#a0a0a0"></div>
<div style="left:1153px;top:1003px;width:2px;height:2px;background:#a0a0a0"></div>
<div style="left:1153px;top:1007px;width:2px;height:2px;background:#a0a0a0"></div>
<div style="left:1169px;top:997px;width:729px;height:15px;background:#dadada"></div>
<div style="left:1169px;top:997px;width:15px;height:15px;background:#fff;border:1px solid #ababab;box-sizing:border-box"></div>
<svg style="position:absolute;left:1170px;top:998px;" width="13" height="13" viewBox="0 0 13 13"><path d="M8.5 3v7L5 6.5z" fill="#606060"/></svg>
<div style="left:1183px;top:997px;width:138px;height:15px;background:#fff;border:1px solid #ababab;box-sizing:border-box"></div>
<div style="left:1884px;top:997px;width:15px;height:15px;background:#fff;border:1px solid #ababab;box-sizing:border-box"></div>
<svg style="position:absolute;left:1885px;top:998px;" width="13" height="13" viewBox="0 0 13 13"><path d="M4.5 3v7L8 6.5z" fill="#606060"/></svg>
<div class="t" style="left:8.50px;top:1018px;font-size:12.0px;line-height:20px;font-weight:400;color:#444;;transform:scaleX(0.9710);transform-origin:0 0">Gotowy</div>
<svg style="position:absolute;left:82px;top:1021px;" width="16" height="16" viewBox="0 0 16 16"><circle cx="4" cy="4" r="3.3" fill="#666"/><rect x="3.5" y="5.5" width="11" height="9" fill="#fff" stroke="#666"/><path d="M3.5 8.5h11M6.5 8.5v6M9.5 8.5v6M12 8.5v6M3.5 11.5h11" stroke="#666" stroke-width="1"/></svg>
<div style="left:1628px;top:1019px;width:38px;height:21px;background:#c8c8c8"></div>
<svg style="position:absolute;left:1639px;top:1021px;" width="16" height="16" viewBox="0 0 16 16"><path d="M1.5 1.5h12v12h-12zM1.5 5.5h12M1.5 9.5h12M5.5 1.5v12M9.5 1.5v12" fill="none" stroke="#666" stroke-width="1.2"/></svg>
<svg style="position:absolute;left:1677px;top:1021px;" width="16" height="16" viewBox="0 0 16 16"><rect x="1.5" y="1.5" width="13" height="13" fill="none" stroke="#666" stroke-width="1.2"/><path d="M5 5h6M5 7.5h6M5 10h6" stroke="#666"/><rect x="4" y="3.5" width="8" height="9" fill="none" stroke="#666" stroke-width="0.9"/></svg>
<svg style="position:absolute;left:1715px;top:1021px;" width="16" height="16" viewBox="0 0 16 16"><path d="M1.5 1.5h13v13h-13zM1.5 10.5h5v-9M9.5 1.5v5h5" fill="none" stroke="#666" stroke-width="1.2"/></svg>
<div style="left:1747px;top:1028px;width:8px;height:2px;background:#555"></div>
<div style="left:1757px;top:1028px;width:100px;height:1px;background:#999"></div>
<div style="left:1805px;top:1023px;width:4px;height:12px;background:#666"></div>
<div style="left:1861px;top:1028px;width:9px;height:2px;background:#555"></div>
<div style="left:1864px;top:1025px;width:2px;height:8px;background:#555"></div>
<div class="t" style="left:1885.00px;top:1018px;font-size:12.0px;line-height:20px;font-weight:400;color:#555;;transform:scaleX(0.8789);transform-origin:0 0">100%</div>
</body></html>
